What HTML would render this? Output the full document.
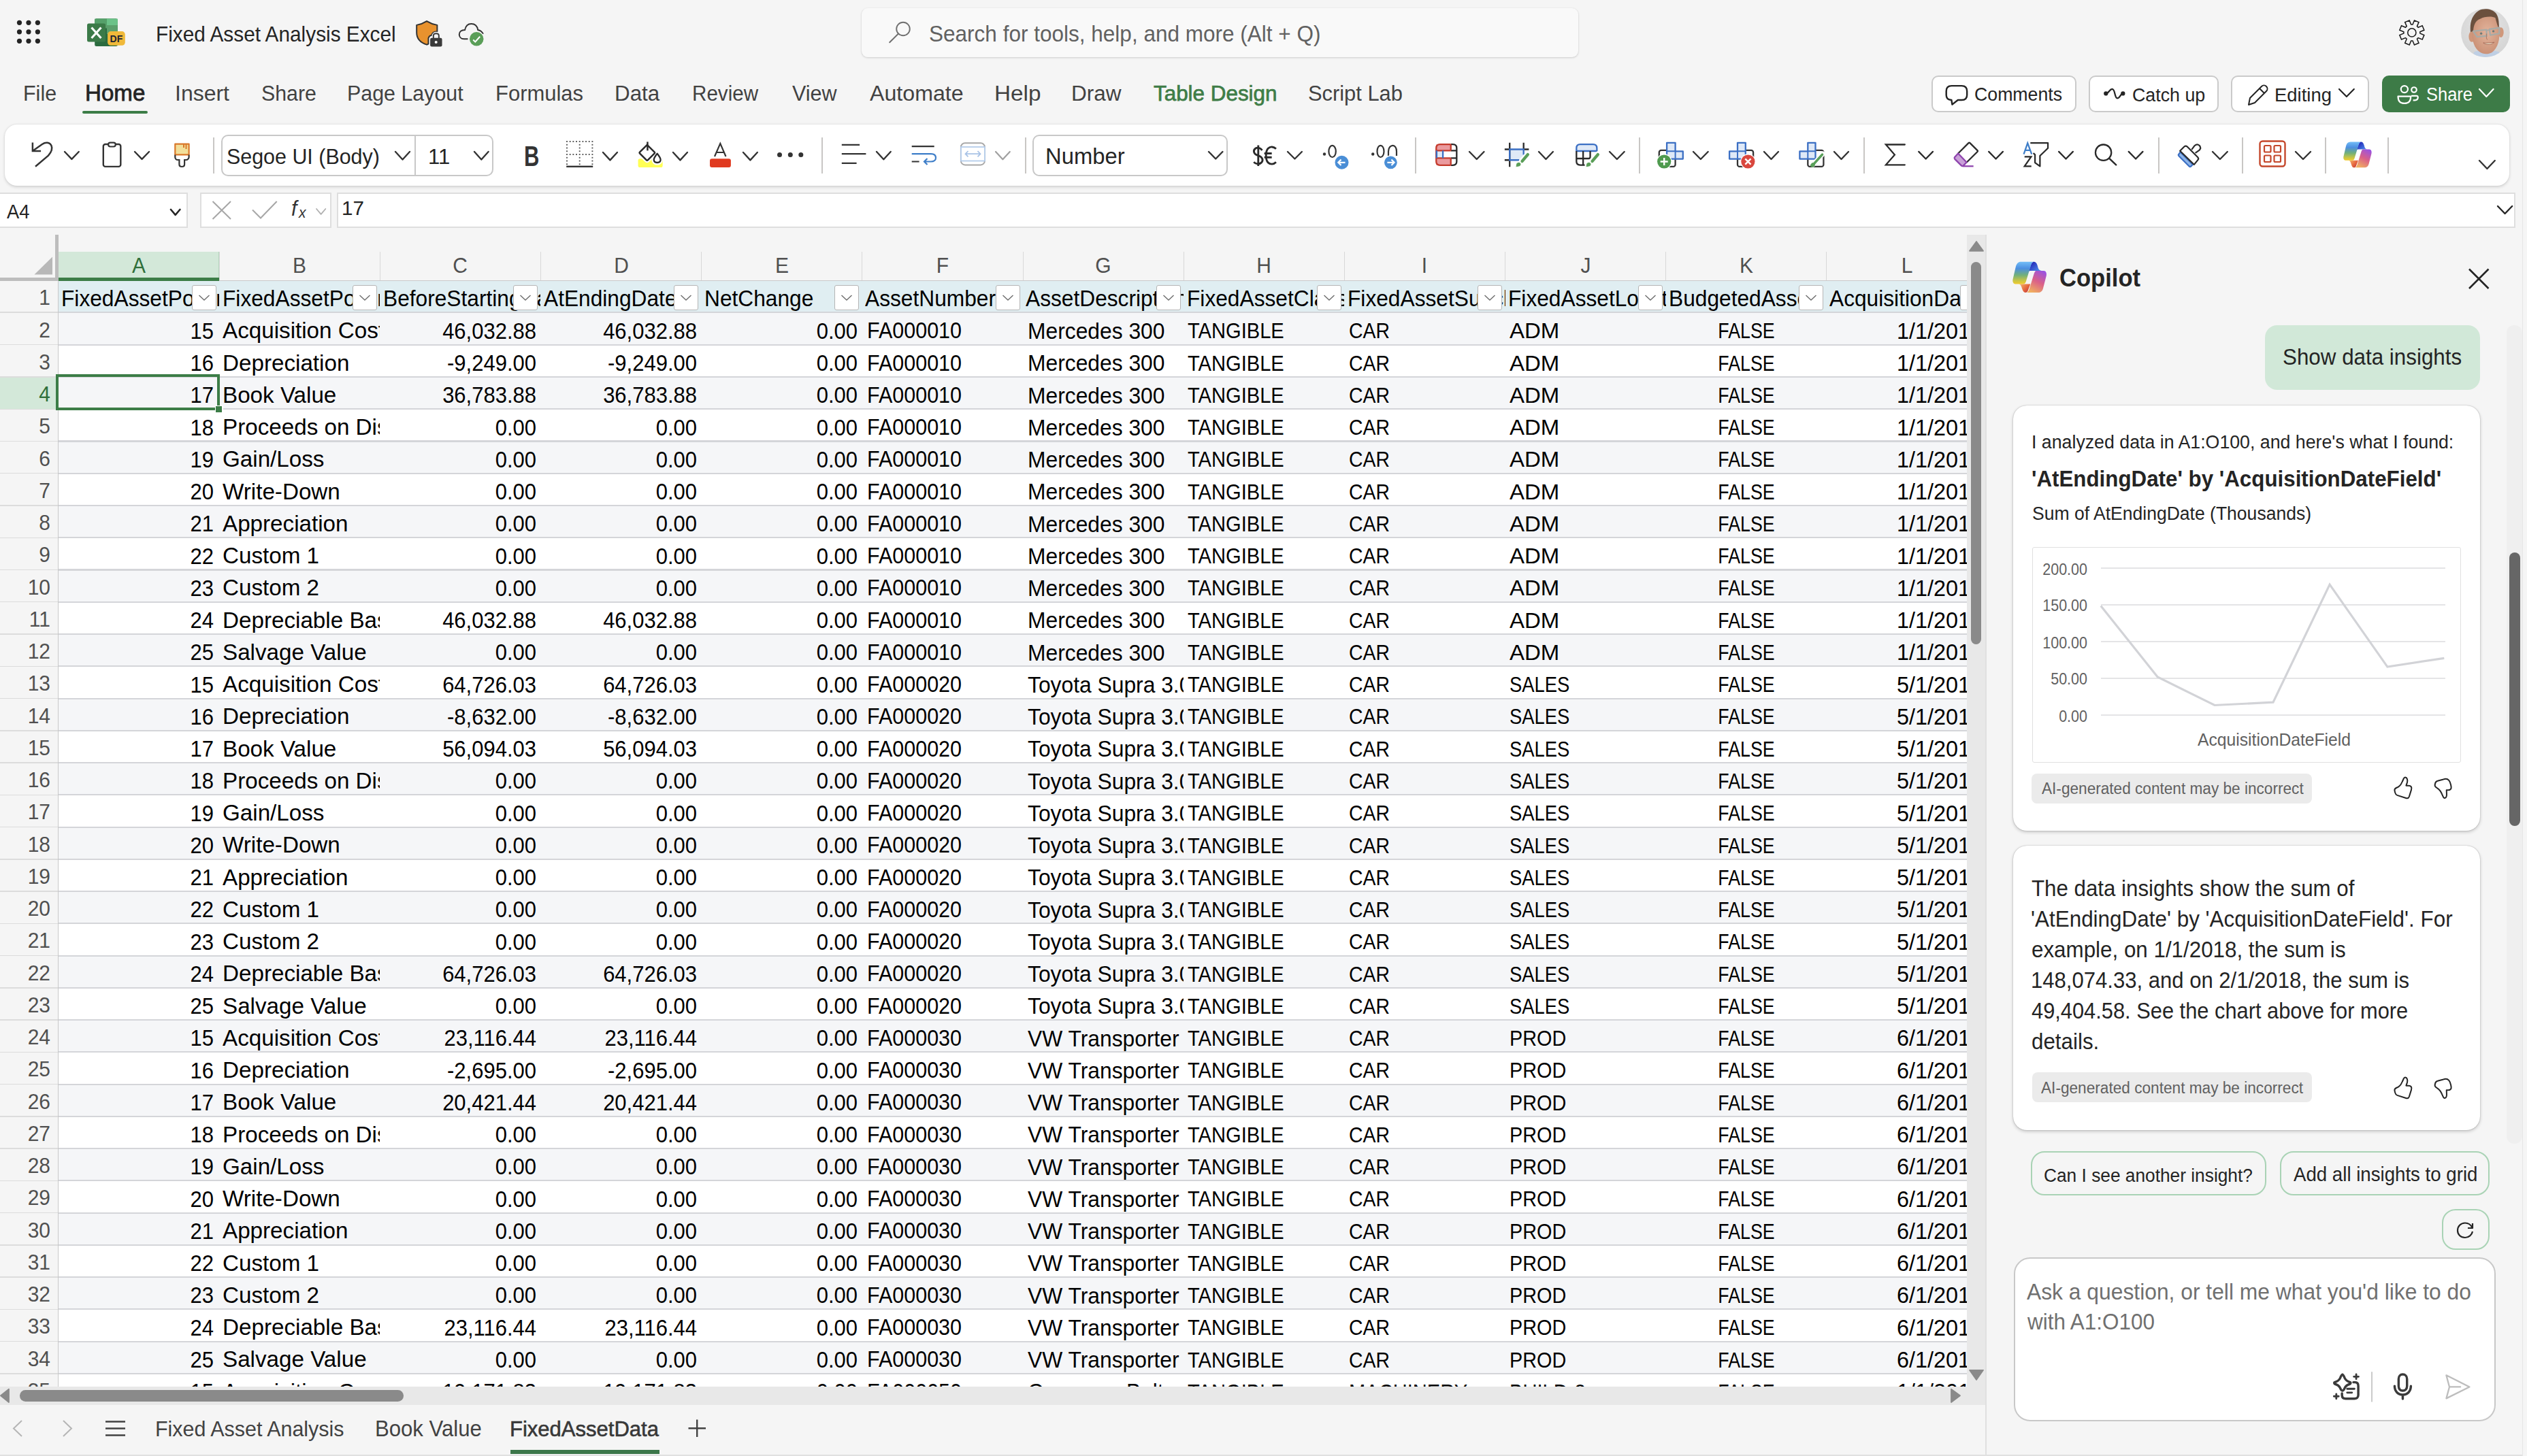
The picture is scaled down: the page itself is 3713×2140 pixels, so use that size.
<!DOCTYPE html><html><head><meta charset="utf-8"><title>Fixed Asset Analysis Excel</title><style>html,body{margin:0;padding:0}body{width:3713px;height:2140px;position:relative;overflow:hidden;background:#F5F5F5;font-family:"Liberation Sans",sans-serif}.a{position:absolute;display:block}.t{position:absolute;white-space:pre}</style></head><body><svg class="a" style="left:0.00px;top:0.00px;" width="80.00" height="90.00" viewBox="0 0 80.00 90.00" fill="none"><circle cx="28.5" cy="33.3" r="3.6" fill="#242424"/><circle cx="28.5" cy="46.8" r="3.6" fill="#242424"/><circle cx="28.5" cy="60.3" r="3.6" fill="#242424"/><circle cx="42" cy="33.3" r="3.6" fill="#242424"/><circle cx="42" cy="46.8" r="3.6" fill="#242424"/><circle cx="42" cy="60.3" r="3.6" fill="#242424"/><circle cx="55.4" cy="33.3" r="3.6" fill="#242424"/><circle cx="55.4" cy="46.8" r="3.6" fill="#242424"/><circle cx="55.4" cy="60.3" r="3.6" fill="#242424"/></svg><svg class="a" style="left:120.00px;top:20.00px;" width="70.00" height="55.00" viewBox="0 0 70.00 55.00" fill="none"><rect x="19.2" y="7.6" width="33.7" height="40.3" rx="2.5" fill="#2B6B3F"/><rect x="19.2" y="7.6" width="33.7" height="14" rx="2.5" fill="#5BA06C"/><rect x="37" y="7.6" width="15.9" height="9.4" fill="#6BC288"/><rect x="37" y="17" width="15.9" height="13" fill="#5BA06C"/><rect x="19.2" y="7.6" width="17.8" height="9.4" fill="#55A06A"/><rect x="8" y="14.5" width="27.1" height="27.1" rx="2.5" fill="#3B7A48"/><path d="M14.5 20.5 L28.5 36 M28.5 20.5 L14.5 36" stroke="#fff" stroke-width="3.2"/><rect x="38.1" y="26.1" width="25.7" height="20.7" rx="4.5" fill="#F0B93A"/><text x="50.9" y="42" font-family="Liberation Sans" font-weight="700" font-size="14" fill="#1E2333" text-anchor="middle">DF</text></svg><div class="t" style="top:32.94px;font-size:31.78px;line-height:35.50px;color:#242424;left:228.80px;transform-origin:0 0;transform:scaleX(0.9378);">Fixed Asset Analysis Excel</div><svg class="a" style="left:590.00px;top:15.00px;" width="140.00" height="70.00" viewBox="0 0 2527 1264" fill="none"><path d="M668 290 C590 340 500 375 400 395 L400 590 C400 760 500 860 670 915 L712 895 L712 740 C725 700 760 670 800 665 C810 600 860 570 945 565 L945 395 C840 375 750 340 668 290 Z" fill="#E8922E" stroke="#333" stroke-width="36" stroke-linejoin="round"/><rect x="745" y="720" width="345" height="260" rx="55" fill="#F5F5F5"/><path d="M845 740 L845 680 C845 590 990 590 990 680 L990 740" stroke="#F5F5F5" stroke-width="80" fill="none"/><path d="M845 740 L845 680 C845 600 990 600 990 680 L990 740" stroke="#3A3A3A" stroke-width="36" fill="none"/><rect x="760" y="735" width="315" height="230" rx="40" fill="#3A3A3A"/><circle cx="915" cy="848" r="36" fill="#fff"/><path d="M1760 765 L1660 765 C1570 765 1530 700 1530 640 C1530 570 1590 525 1680 522 C1700 420 1760 360 1850 360 C1950 360 2010 430 2025 522 C2090 535 2140 575 2165 630" stroke="#333" stroke-width="36" fill="none"/><circle cx="1990" cy="765" r="210" fill="#F5F5F5"/><circle cx="1990" cy="765" r="185" fill="#5A9E58"/><path d="M1900 785 L1955 840 L2080 700" stroke="#fff" stroke-width="36" fill="none"/></svg><div class="a" style="left:1266.00px;top:11.80px;width:1052.80px;height:72.00px;background:#F9F9F9;border-radius:9px;box-shadow:0 1px 3px rgba(0,0,0,0.16),0 0 2px rgba(0,0,0,0.06);"></div><svg class="a" style="left:1300.00px;top:28.00px;" width="45.00" height="42.00" viewBox="0 0 45.00 42.00" fill="none"><circle cx="27" cy="14.5" r="9.8" stroke="#707070" stroke-width="1.9"/><path d="M20 21.5 L7.2 34.2" stroke="#707070" stroke-width="2" stroke-linecap="round"/></svg><div class="t" style="top:31.49px;font-size:33.38px;line-height:37.29px;color:#616161;left:1365.00px;transform-origin:0 0;transform:scaleX(0.9445);">Search for tools, help, and more (Alt + Q)</div><svg class="a" style="left:3515.00px;top:20.00px;" width="60.00" height="60.00" viewBox="0 0 1456 1456" fill="none"><path d="M728.0 387.3 L788.9 241.0 L946.2 306.1 L885.7 452.7 L925.3 492.3 L1071.9 431.8 L1137.0 589.1 L990.7 650.0 L990.7 706.0 L1137.0 766.9 L1071.9 924.2 L925.3 863.7 L885.7 903.3 L946.2 1049.9 L788.9 1115.0 L728.0 968.7 L672.0 968.7 L611.1 1115.0 L453.8 1049.9 L514.3 903.3 L474.7 863.7 L328.1 924.2 L263.0 766.9 L409.3 706.0 L409.3 650.0 L263.0 589.1 L328.1 431.8 L474.7 492.3 L514.3 452.7 L453.8 306.1 L611.1 241.0 L672.0 387.3 Z" stroke="#1E1E1E" stroke-width="38" fill="none" stroke-linejoin="miter"/><circle cx="700" cy="678" r="148" stroke="#1E1E1E" stroke-width="38" fill="none"/></svg><svg class="a" style="left:3610.00px;top:6.00px;" width="83.00" height="83.00" viewBox="0 0 1456 1456" fill="none"><defs><clipPath id="avc"><circle cx="735" cy="742" r="628"/></clipPath><radialGradient id="avbg" cx="0.5" cy="0.4" r="0.6"><stop offset="0" stop-color="#E6E6E6"/><stop offset="1" stop-color="#D2D2D2"/></radialGradient><radialGradient id="skin" cx="0.55" cy="0.45" r="0.6"><stop offset="0" stop-color="#E3B49C"/><stop offset="1" stop-color="#C98F74"/></radialGradient></defs><g clip-path="url(#avc)"><rect width="1456" height="1456" fill="url(#avbg)"/><path d="M440 1240 C520 1180 980 1180 1090 1240 L1150 1456 L380 1456 Z" fill="#BFCFE4"/><ellipse cx="385" cy="840" rx="80" ry="140" fill="#CF977B"/><ellipse cx="1135" cy="730" rx="70" ry="130" fill="#CF977B"/><path d="M380 700 C370 450 470 290 720 280 C990 280 1090 430 1090 640 C1120 900 1060 1130 900 1250 C800 1300 680 1300 580 1230 C450 1130 390 950 380 700 Z" fill="url(#skin)"/><path d="M350 720 C330 480 380 290 560 170 C700 100 900 120 1000 230 C1080 330 1090 480 1080 620 C1040 560 1020 450 990 360 C900 300 700 330 600 380 C480 420 430 540 420 700 Z" fill="#6B503E"/><path d="M420 700 L760 660 L770 820 L520 845 Z M840 650 L1095 610 L1090 760 L860 800 Z" fill="none" stroke="#A9ABA6" stroke-width="42" stroke-linejoin="round"/><path d="M760 680 L840 665" stroke="#A9ABA6" stroke-width="35"/><circle cx="625" cy="760" r="30" fill="#6E7B78"/><circle cx="940" cy="700" r="30" fill="#6E7B78"/><path d="M680 1000 C760 1060 900 1050 965 985 C880 1000 760 1005 680 1000 Z" fill="#F2E7CC" stroke="#9A5A4A" stroke-width="14"/><path d="M760 760 C770 850 740 900 790 915" stroke="#B07A62" stroke-width="18" fill="none"/></g></svg><div class="t" style="top:120.15px;font-size:32.10px;line-height:35.86px;color:#424242;left:34.00px;transform-origin:0 0;transform:scaleX(0.9500);">File</div><div class="t" style="top:118.46px;font-size:33.97px;line-height:37.94px;color:#242424;left:124.50px;transform-origin:0 0;transform:scaleX(0.9748);-webkit-text-stroke:0.8px #242424;">Home</div><div class="t" style="top:120.15px;font-size:32.10px;line-height:35.86px;color:#424242;left:257.00px;transform-origin:0 0;transform:scaleX(0.9970);">Insert</div><div class="t" style="top:120.15px;font-size:32.10px;line-height:35.86px;color:#424242;left:384.00px;transform-origin:0 0;transform:scaleX(0.9444);">Share</div><div class="t" style="top:120.15px;font-size:32.10px;line-height:35.86px;color:#424242;left:510.00px;transform-origin:0 0;transform:scaleX(0.9476);">Page Layout</div><div class="t" style="top:120.15px;font-size:32.10px;line-height:35.86px;color:#424242;left:728.00px;transform-origin:0 0;transform:scaleX(0.9655);">Formulas</div><div class="t" style="top:120.15px;font-size:32.10px;line-height:35.86px;color:#424242;left:903.00px;transform-origin:0 0;transform:scaleX(0.9769);">Data</div><div class="t" style="top:120.15px;font-size:32.10px;line-height:35.86px;color:#424242;left:1017.00px;transform-origin:0 0;transform:scaleX(0.9230);">Review</div><div class="t" style="top:120.15px;font-size:32.10px;line-height:35.86px;color:#424242;left:1164.00px;transform-origin:0 0;transform:scaleX(0.9522);">View</div><div class="t" style="top:120.15px;font-size:32.10px;line-height:35.86px;color:#424242;left:1278.00px;transform-origin:0 0;transform:scaleX(1.0023);">Automate</div><div class="t" style="top:120.15px;font-size:32.10px;line-height:35.86px;color:#424242;left:1461.00px;transform-origin:0 0;transform:scaleX(1.0367);">Help</div><div class="t" style="top:120.15px;font-size:32.10px;line-height:35.86px;color:#424242;left:1574.00px;transform-origin:0 0;transform:scaleX(0.9836);">Draw</div><div class="t" style="top:120.21px;font-size:32.03px;line-height:35.78px;color:#3F7D47;left:1695.00px;transform-origin:0 0;transform:scaleX(0.9804);-webkit-text-stroke:0.75px #3F7D47;">Table Design</div><div class="t" style="top:120.15px;font-size:32.10px;line-height:35.86px;color:#424242;left:1922.00px;transform-origin:0 0;transform:scaleX(0.9615);">Script Lab</div><div class="a" style="left:121.40px;top:162.50px;width:95.20px;height:4.20px;background:#3C7D47;border-radius:2px;"></div><div class="a" style="left:2837.50px;top:110.70px;width:213.00px;height:54.00px;background:#fff;background:#fff;border:2.2px solid #CACACA;border-radius:10px;box-sizing:border-box;"></div><svg class="a" style="left:2830.00px;top:100.00px;" width="440.00" height="75.00" viewBox="0 0 2527 431" fill="none"><path d="M215 150 L300 150 Q345 150 345 195 L345 228 Q345 270 300 270 L268 270 L220 308 L214 270 Q170 268 170 228 L170 195 Q170 150 215 150 Z" stroke="#242424" stroke-width="14" fill="none" stroke-linejoin="round"/></svg><div class="t" style="top:123.44px;font-size:28.25px;line-height:31.55px;color:#242424;left:2901.00px;transform-origin:0 0;transform:scaleX(0.9450);">Comments</div><div class="a" style="left:3069.20px;top:110.70px;width:190.80px;height:54.00px;background:#fff;background:#fff;border:2.2px solid #CACACA;border-radius:10px;box-sizing:border-box;"></div><svg class="a" style="left:2830.00px;top:100.00px;" width="440.00" height="75.00" viewBox="0 0 2527 431" fill="none"><path d="M1518 215 C1542 215 1550 176 1572 178 C1598 181 1590 255 1614 255 C1638 255 1640 215 1662 215" stroke="#242424" stroke-width="13" fill="none" stroke-linecap="round"/><circle cx="1518" cy="215" r="18" fill="#242424"/><circle cx="1662" cy="215" r="18" fill="#242424"/></svg><div class="t" style="top:123.53px;font-size:28.14px;line-height:31.43px;color:#242424;left:3133.00px;transform-origin:0 0;transform:scaleX(0.9527);">Catch up</div><div class="a" style="left:3278.00px;top:110.70px;width:202.70px;height:54.00px;background:#fff;background:#fff;border:2.2px solid #CACACA;border-radius:10px;box-sizing:border-box;"></div><svg class="a" style="left:3298.00px;top:120.00px;" width="36.00" height="38.00" viewBox="0 0 36.00 38.00" fill="none"><path d="M6 34 L8 24 L25 7 C27 5 30 5 32 7 C34 9 34 12 32 14 L15 31 Z M22 10 L29 17" stroke="#242424" stroke-width="2" stroke-linejoin="round"/></svg><div class="t" style="top:123.53px;font-size:28.14px;line-height:31.43px;color:#242424;left:3342.00px;transform-origin:0 0;transform:scaleX(0.9759);">Editing</div><svg class="a" style="left:3433.60px;top:128.00px;" width="27.80" height="17.00" viewBox="0 0 27.80 17.00" fill="none"><path d="M3 3 L13.90 14.00 L24.80 3" stroke="#242424" stroke-width="2.2" stroke-linecap="round" stroke-linejoin="round"/></svg><div class="a" style="left:3500.00px;top:110.70px;width:187.50px;height:54.00px;background:#3D7B47;border-radius:10px;"></div><svg class="a" style="left:3270.00px;top:100.00px;" width="430.00" height="75.00" viewBox="0 0 2527 441" fill="none"><circle cx="1545" cy="183" r="30" stroke="#fff" stroke-width="13" fill="none"/><path d="M1490 245 L1600 245 Q1600 305 1545 305 Q1490 305 1490 245 Z" stroke="#fff" stroke-width="13" fill="none" stroke-linejoin="round"/><circle cx="1628" cy="188" r="22" stroke="#fff" stroke-width="13" fill="none"/><path d="M1605 240 L1650 240 Q1662 240 1662 255 Q1662 278 1635 278 L1620 278" stroke="#fff" stroke-width="13" fill="none" stroke-linejoin="round"/></svg><div class="t" style="top:124.31px;font-size:27.29px;line-height:30.48px;color:#fff;left:3565.40px;transform-origin:0 0;transform:scaleX(0.9346);">Share</div><svg class="a" style="left:3640.00px;top:128.00px;" width="26.60" height="17.00" viewBox="0 0 26.60 17.00" fill="none"><path d="M3 3 L13.30 14.00 L23.60 3" stroke="#fff" stroke-width="2.2" stroke-linecap="round" stroke-linejoin="round"/></svg><div class="a" style="left:7.20px;top:182.80px;width:3680.30px;height:90.00px;background:#fff;border-radius:18px;box-shadow:0 1.5px 4px rgba(0,0,0,0.15),0 0 2px rgba(0,0,0,0.08);"></div><svg class="a" style="left:40.00px;top:200.00px;" width="45.00" height="52.00" viewBox="0 0 45.00 52.00" fill="none"><path d="M7.9 9.6 L7.9 22 L20.1 22" stroke="#333" stroke-width="2.5" stroke-linecap="butt" fill="none"/><path d="M8.5 21.5 L22 12 C27 8.5 33 9 35.5 14 C37.5 18.5 35 24 31 28.6 L12 44.8" stroke="#333" stroke-width="2.5" fill="none"/></svg><svg class="a" style="left:91.80px;top:220.00px;" width="26.80" height="16.90" viewBox="0 0 26.80 16.90" fill="none"><path d="M3 3 L13.40 13.90 L23.80 3" stroke="#333333" stroke-width="2.4" stroke-linecap="round" stroke-linejoin="round"/></svg><svg class="a" style="left:145.00px;top:202.00px;" width="40.00" height="50.00" viewBox="0 0 40.00 50.00" fill="none"><rect x="6.8" y="10" width="25.5" height="32.9" rx="3" stroke="#333" stroke-width="2.4"/><rect x="14.1" y="7.6" width="10.7" height="5.9" rx="2.9" fill="#fff" stroke="#333" stroke-width="2.2"/></svg><svg class="a" style="left:194.80px;top:220.00px;" width="27.10" height="16.90" viewBox="0 0 27.10 16.90" fill="none"><path d="M3 3 L13.55 13.90 L24.10 3" stroke="#333333" stroke-width="2.4" stroke-linecap="round" stroke-linejoin="round"/></svg><svg class="a" style="left:250.00px;top:202.00px;" width="35.00" height="50.00" viewBox="0 0 35.00 50.00" fill="none"><path d="M7.3 9.6 L27.6 9.6 L27.6 25.4 L7.3 25.4 Z" fill="#F2DF9A" stroke="#D9782A" stroke-width="2.2" stroke-linejoin="round"/><path d="M20 10 L20 15 M23.5 10 L23.5 17" stroke="#D9782A" stroke-width="2"/><path d="M7.3 25.4 L7.3 29 C7.3 31 9 33 11 33 L13.4 33 L13.4 39.5 C13.4 42 15 43 17.2 43 C19.5 43 21.1 42 21.1 39.5 L21.1 33 L23.6 33 C25.6 33 27.6 31 27.6 29 L27.6 25.4" stroke="#333" stroke-width="2.2" fill="none"/></svg><div class="a" style="left:312.50px;top:201.50px;width:2.00px;height:53.10px;background:#C8C6C4;"></div><div class="a" style="left:325.00px;top:198.00px;width:400.30px;height:60.70px;background:#fff;border:2px solid #C8C8C8;border-radius:10px;box-sizing:border-box;"></div><div class="a" style="left:609.00px;top:198.00px;width:2.00px;height:60.70px;background:#C8C8C8;"></div><div class="t" style="top:212.85px;font-size:31.99px;line-height:35.74px;color:#242424;left:333.00px;transform-origin:0 0;transform:scaleX(0.9510);">Segoe UI (Body)</div><svg class="a" style="left:578.00px;top:219.50px;" width="27.00" height="17.50" viewBox="0 0 27.00 17.50" fill="none"><path d="M3 3 L13.50 14.50 L24.00 3" stroke="#333333" stroke-width="2.4" stroke-linecap="round" stroke-linejoin="round"/></svg><div class="t" style="top:212.75px;font-size:32.10px;line-height:35.86px;color:#242424;left:629.00px;transform-origin:0 0;transform:scaleX(0.9680);">11</div><svg class="a" style="left:694.00px;top:219.50px;" width="26.60" height="17.50" viewBox="0 0 26.60 17.50" fill="none"><path d="M3 3 L13.30 14.50 L23.60 3" stroke="#333333" stroke-width="2.4" stroke-linecap="round" stroke-linejoin="round"/></svg><div class="t" style="top:204.82px;font-size:43.40px;line-height:48.48px;color:#333;font-weight:700;left:769.50px;transform-origin:0 0;transform:scaleX(0.7143);">B</div><svg class="a" style="left:830.70px;top:206.40px;" width="42.00" height="42.00" viewBox="0 0 42.00 42.00" fill="none"><g transform="translate(2 2)"><rect x="-0.95" y="-0.95" width="1.9" height="1.9" fill="#555"/><rect x="3.72" y="-0.95" width="1.9" height="1.9" fill="#555"/><rect x="8.40" y="-0.95" width="1.9" height="1.9" fill="#555"/><rect x="13.07" y="-0.95" width="1.9" height="1.9" fill="#555"/><rect x="17.75" y="-0.95" width="1.9" height="1.9" fill="#555"/><rect x="22.43" y="-0.95" width="1.9" height="1.9" fill="#555"/><rect x="27.10" y="-0.95" width="1.9" height="1.9" fill="#555"/><rect x="31.78" y="-0.95" width="1.9" height="1.9" fill="#555"/><rect x="36.45" y="-0.95" width="1.9" height="1.9" fill="#555"/><rect x="-0.95" y="18.05" width="1.9" height="1.9" fill="#555"/><rect x="3.72" y="18.05" width="1.9" height="1.9" fill="#555"/><rect x="8.40" y="18.05" width="1.9" height="1.9" fill="#555"/><rect x="13.07" y="18.05" width="1.9" height="1.9" fill="#555"/><rect x="17.75" y="18.05" width="1.9" height="1.9" fill="#555"/><rect x="22.43" y="18.05" width="1.9" height="1.9" fill="#555"/><rect x="27.10" y="18.05" width="1.9" height="1.9" fill="#555"/><rect x="31.78" y="18.05" width="1.9" height="1.9" fill="#555"/><rect x="36.45" y="18.05" width="1.9" height="1.9" fill="#555"/><rect x="-0.95" y="3.80" width="1.9" height="1.9" fill="#555"/><rect x="-0.95" y="8.55" width="1.9" height="1.9" fill="#555"/><rect x="-0.95" y="13.30" width="1.9" height="1.9" fill="#555"/><rect x="-0.95" y="22.80" width="1.9" height="1.9" fill="#555"/><rect x="-0.95" y="27.55" width="1.9" height="1.9" fill="#555"/><rect x="-0.95" y="32.30" width="1.9" height="1.9" fill="#555"/><rect x="17.75" y="3.80" width="1.9" height="1.9" fill="#555"/><rect x="17.75" y="8.55" width="1.9" height="1.9" fill="#555"/><rect x="17.75" y="13.30" width="1.9" height="1.9" fill="#555"/><rect x="17.75" y="22.80" width="1.9" height="1.9" fill="#555"/><rect x="17.75" y="27.55" width="1.9" height="1.9" fill="#555"/><rect x="17.75" y="32.30" width="1.9" height="1.9" fill="#555"/><rect x="36.45" y="3.80" width="1.9" height="1.9" fill="#555"/><rect x="36.45" y="8.55" width="1.9" height="1.9" fill="#555"/><rect x="36.45" y="13.30" width="1.9" height="1.9" fill="#555"/><rect x="36.45" y="22.80" width="1.9" height="1.9" fill="#555"/><rect x="36.45" y="27.55" width="1.9" height="1.9" fill="#555"/><rect x="36.45" y="32.30" width="1.9" height="1.9" fill="#555"/><rect x="-0.8" y="35.6" width="39" height="2.4" fill="#333"/></g></svg><svg class="a" style="left:882.90px;top:220.80px;" width="26.90" height="17.40" viewBox="0 0 26.90 17.40" fill="none"><path d="M3 3 L13.45 14.40 L23.90 3" stroke="#333333" stroke-width="2.4" stroke-linecap="round" stroke-linejoin="round"/></svg><svg class="a" style="left:740.00px;top:190.00px;" width="480.00" height="75.00" viewBox="0 0 2527 395" fill="none"><rect x="1040" y="228" width="190" height="67" rx="15" fill="#FFFF55"/><path d="M1110 120 L1166 176 Q1172 182 1166 188 L1116 238 Q1110 244 1104 238 L1054 188 Q1048 182 1054 176 Z" fill="#fff" stroke="#fff" stroke-width="34" stroke-linejoin="round"/><path d="M1188 185 C1173 205 1160 222 1160 238 C1160 252 1173 262 1188 262 C1203 262 1216 252 1216 238 C1216 222 1203 205 1188 185 Z" fill="#fff" stroke="#fff" stroke-width="30" stroke-linejoin="round"/><path d="M1110 120 L1166 176 Q1172 182 1166 188 L1116 238 Q1110 244 1104 238 L1054 188 Q1048 182 1054 176 Z" fill="#fff" stroke="#2A2A2A" stroke-width="13" stroke-linejoin="round"/><path d="M1113 97 L1113 165" stroke="#2A2A2A" stroke-width="13"/><path d="M1188 188 C1173 207 1162 222 1162 236 C1162 250 1173 258 1188 258 C1203 258 1214 250 1214 236 C1214 222 1203 207 1188 188 Z" fill="#fff" stroke="#2A2A2A" stroke-width="12" stroke-linejoin="round"/></svg><svg class="a" style="left:985.80px;top:220.80px;" width="26.90" height="17.40" viewBox="0 0 26.90 17.40" fill="none"><path d="M3 3 L13.45 14.40 L23.90 3" stroke="#333333" stroke-width="2.4" stroke-linecap="round" stroke-linejoin="round"/></svg><svg class="a" style="left:1040.00px;top:205.00px;" width="38.00" height="45.00" viewBox="0 0 38.00 45.00" fill="none"><path d="M10 25 L18.3 5.9 L26.5 25 M12.8 19 L23.8 19" stroke="#333" stroke-width="2.2" fill="none"/><rect x="3" y="28.3" width="30.9" height="12.7" rx="3" fill="#E03A20"/></svg><svg class="a" style="left:1088.80px;top:220.80px;" width="26.80" height="17.40" viewBox="0 0 26.80 17.40" fill="none"><path d="M3 3 L13.40 14.40 L23.80 3" stroke="#333333" stroke-width="2.4" stroke-linecap="round" stroke-linejoin="round"/></svg><svg class="a" style="left:1138.00px;top:220.00px;" width="47.00" height="15.00" viewBox="0 0 47.00 15.00" fill="none"><circle cx="7.5" cy="7.4" r="3.5" fill="#333"/><circle cx="23.3" cy="7.4" r="3.5" fill="#333"/><circle cx="38.8" cy="7.4" r="3.5" fill="#333"/></svg><div class="a" style="left:1206.80px;top:201.50px;width:2.00px;height:53.10px;background:#C8C6C4;"></div><svg class="a" style="left:1232.00px;top:205.00px;" width="46.00" height="43.00" viewBox="0 0 46.00 43.00" fill="none"><path d="M4.8 7.8 L31.1 7.8 M4.8 21.2 L40.4 21.2 M4.8 34.9 L26.6 34.9" stroke="#333" stroke-width="2.2"/></svg><svg class="a" style="left:1285.30px;top:219.60px;" width="26.70" height="17.30" viewBox="0 0 26.70 17.30" fill="none"><path d="M3 3 L13.35 14.30 L23.70 3" stroke="#333333" stroke-width="2.4" stroke-linecap="round" stroke-linejoin="round"/></svg><svg class="a" style="left:1335.00px;top:205.00px;" width="45.00" height="45.00" viewBox="0 0 45.00 45.00" fill="none"><path d="M4.7 10.1 L37.7 10.1 M4.7 32.5 L15.6 32.5" stroke="#333" stroke-width="2.2"/><path d="M4.7 21.2 L33 21.2 C37.5 21.2 40 23.5 40 27 C40 30 37.5 32.5 33 32.5 L23.5 32.5 M27.5 28 L23 32.5 L27.5 37" stroke="#3E7EC8" stroke-width="2.2" fill="none"/></svg><svg class="a" style="left:1408.00px;top:206.00px;" width="44.00" height="41.00" viewBox="0 0 44.00 41.00" fill="none"><rect x="3.9" y="4.2" width="35" height="32.2" rx="6" stroke="#A8A8A8" stroke-width="2"/><rect x="4" y="10" width="35" height="20.5" fill="#fff" stroke="#B4CCEA" stroke-width="1.8"/><path d="M10.5 20.2 L32.5 20.2 M14.5 16 L10.5 20.2 L14.5 24.4 M28.5 16 L32.5 20.2 L28.5 24.4" stroke="#A9C3E6" stroke-width="1.8" fill="none"/></svg><svg class="a" style="left:1460.00px;top:219.60px;" width="26.80" height="17.30" viewBox="0 0 26.80 17.30" fill="none"><path d="M3 3 L13.40 14.30 L23.80 3" stroke="#A0A0A0" stroke-width="2.2" stroke-linecap="round" stroke-linejoin="round"/></svg><div class="a" style="left:1505.90px;top:201.50px;width:2.00px;height:53.10px;background:#C8C6C4;"></div><div class="a" style="left:1517.40px;top:197.90px;width:287.00px;height:61.40px;background:#fff;border:2px solid #C8C8C8;border-radius:10px;box-sizing:border-box;"></div><div class="t" style="top:210.70px;font-size:33.92px;line-height:37.89px;color:#242424;left:1536.00px;transform-origin:0 0;transform:scaleX(0.9672);">Number</div><svg class="a" style="left:1773.20px;top:219.60px;" width="26.40" height="16.50" viewBox="0 0 26.40 16.50" fill="none"><path d="M3 3 L13.20 13.50 L23.40 3" stroke="#333333" stroke-width="2.4" stroke-linecap="round" stroke-linejoin="round"/></svg><svg class="a" style="left:1760.00px;top:190.00px;" width="660.00" height="75.00" viewBox="0 0 2527 287" fill="none"><path d="M362 118 C352 104 335 100 324 108 C310 118 312 140 340 148 C364 156 370 174 358 187 C346 199 326 197 315 184 M340 90 L340 207" stroke="#2A2A2A" stroke-width="11" fill="none"/><path d="M440 110 C428 97 408 95 395 108 C380 124 380 172 395 187 C408 200 428 198 440 185 M374 136 L416 136 M374 158 L416 158" stroke="#2A2A2A" stroke-width="11" fill="none"/></svg><svg class="a" style="left:1888.90px;top:220.00px;" width="26.90" height="16.50" viewBox="0 0 26.90 16.50" fill="none"><path d="M3 3 L13.45 13.50 L23.90 3" stroke="#333333" stroke-width="2.4" stroke-linecap="round" stroke-linejoin="round"/></svg><svg class="a" style="left:1940.00px;top:205.00px;" width="50.00" height="47.00" viewBox="0 0 50.00 47.00" fill="none"><circle cx="6" cy="21.5" r="2.2" fill="#333"/><ellipse cx="17.6" cy="17.4" rx="5.2" ry="8.6" stroke="#333" stroke-width="2.2"/><circle cx="31.5" cy="33.8" r="10" fill="#4A8ED6"/><path d="M36.5 33.8 L26.5 33.8 M30.5 29.5 L26.3 33.8 L30.5 38" stroke="#fff" stroke-width="2.2" fill="none"/></svg><svg class="a" style="left:2010.00px;top:205.00px;" width="50.00" height="47.00" viewBox="0 0 50.00 47.00" fill="none"><circle cx="7.2" cy="21.5" r="2.2" fill="#333"/><ellipse cx="18.5" cy="17.4" rx="5" ry="8.6" stroke="#333" stroke-width="2.2"/><path d="M30 26 L30 17.4 C30 12 33.5 8.8 36.5 8.8 C39.5 8.8 42 12 42 17.4 L42 24" stroke="#333" stroke-width="2.2" fill="none"/><circle cx="33.4" cy="33.8" r="10" fill="#4A8ED6" stroke="#fff" stroke-width="1.2"/><path d="M28.4 33.8 L38.4 33.8 M34.4 29.5 L38.6 33.8 L34.4 38" stroke="#fff" stroke-width="2.2" fill="none"/></svg><div class="a" style="left:2079.00px;top:201.50px;width:2.00px;height:53.10px;background:#C8C6C4;"></div><svg class="a" style="left:2090.00px;top:195.00px;" width="310.00" height="65.00" viewBox="0 0 2527 530" fill="none"><path d="M165 140 L340 140 L340 215 L165 215 Z M165 305 L340 305 L340 390 L165 390 Z" fill="#EA9A9E"/><path d="M170 215 L245 215 L245 305 L170 305 Z" fill="#DDE8F6"/><path d="M340 140 L365 140 Q410 140 410 185 L410 345 Q410 390 365 390 L340 390 M340 215 L410 215 M340 305 L410 305" stroke="#2A2A2A" stroke-width="19" fill="none"/><path d="M340 140 L210 140 Q165 140 165 185 L165 345 Q165 390 210 390 L340 390 M165 215 L340 215 M165 305 L340 305 M340 140 L340 215 M340 305 L340 390" stroke="#C43A2C" stroke-width="19" fill="none"/><path d="M245 215 L245 305 M170 215 L170 305" stroke="#3B6FC4" stroke-width="19" fill="none"/><path d="M1045 200 L1212 200 L1212 270 L1150 328 L1045 328 Z" fill="#DFE9F7"/><path d="M1045 120 L1045 410 M1212 120 L1212 200 M985 200 L1045 200 M1212 200 L1275 200 M985 328 L1045 328" stroke="#2A2A2A" stroke-width="19" fill="none"/><path d="M1160 328 L1045 328 L1045 200 L1212 200 L1212 265" stroke="#3B6FC4" stroke-width="19" fill="none"/><path d="M1268 258 L1190 350" stroke="#fff" stroke-width="75" stroke-linecap="round"/><path d="M1262 262 L1195 342" stroke="#5A9E58" stroke-width="36" stroke-linecap="round"/><path d="M1125 372 C1140 345 1180 350 1180 380 C1178 405 1150 412 1115 410 C1125 400 1118 388 1125 372 Z" fill="#5A9E58" stroke="#fff" stroke-width="6"/><path d="M1845 220 L1845 185 Q1845 140 1890 140 L2045 140 Q2090 140 2090 185 L2090 220 Z" fill="#DFE9F7" stroke="#3B6FC4" stroke-width="19" stroke-linejoin="round"/><path d="M1845 220 L1845 345 Q1845 388 1890 388 L1945 388 M1925 220 L1925 388 M1845 310 L1990 310 Q2010 310 2010 290 L2010 220" stroke="#2A2A2A" stroke-width="19" fill="none"/><path d="M2108 258 L2030 350" stroke="#fff" stroke-width="75" stroke-linecap="round"/><path d="M2102 262 L2035 342" stroke="#5A9E58" stroke-width="36" stroke-linecap="round"/><path d="M1965 372 C1980 345 2020 350 2020 380 C2018 405 1990 412 1955 410 C1965 400 1958 388 1965 372 Z" fill="#5A9E58" stroke="#fff" stroke-width="6"/></svg><svg class="a" style="left:2155.70px;top:220.00px;" width="27.50" height="17.00" viewBox="0 0 27.50 17.00" fill="none"><path d="M3 3 L13.75 14.00 L24.50 3" stroke="#333333" stroke-width="2.4" stroke-linecap="round" stroke-linejoin="round"/></svg><svg class="a" style="left:2258.40px;top:220.00px;" width="26.90" height="17.00" viewBox="0 0 26.90 17.00" fill="none"><path d="M3 3 L13.45 14.00 L23.90 3" stroke="#333333" stroke-width="2.4" stroke-linecap="round" stroke-linejoin="round"/></svg><svg class="a" style="left:2361.60px;top:220.00px;" width="27.70" height="17.00" viewBox="0 0 27.70 17.00" fill="none"><path d="M3 3 L13.85 14.00 L24.70 3" stroke="#333333" stroke-width="2.4" stroke-linecap="round" stroke-linejoin="round"/></svg><div class="a" style="left:2408.00px;top:201.50px;width:2.00px;height:53.10px;background:#C8C6C4;"></div><svg class="a" style="left:2420.00px;top:195.00px;" width="310.00" height="65.00" viewBox="0 0 310.00 65.00" fill="none"><rect x="17.8" y="25.9" width="23.8" height="24" rx="3" stroke="#333" stroke-width="2.3" fill="none"/><path d="M29.1 14.8 L41.6 14.8 L41.6 27.3 L52.8 27.3 L52.8 38.6 L29.1 38.6 Z" stroke="#3B6FC4" stroke-width="2.3" fill="#DFE9F7" stroke-linejoin="round"/><path d="M29.1 27.3 L41.6 27.3 L41.6 38.6" stroke="#3B6FC4" stroke-width="2" fill="none"/><circle cx="25.2" cy="42.5" r="11.2" fill="#fff"/><circle cx="25.2" cy="42.5" r="10.1" fill="#4F9A4F"/><path d="M25.2 37 L25.2 48 M19.7 42.5 L30.7 42.5" stroke="#fff" stroke-width="2.4"/><rect x="133" y="25.9" width="23.1" height="24" rx="3" stroke="#333" stroke-width="2.3" fill="none"/><path d="M133 14.8 L144.8 14.8 L144.8 38.6 L121.1 38.6 L121.1 27.3 L133 27.3 Z" stroke="#3B6FC4" stroke-width="2.3" fill="#DFE9F7" stroke-linejoin="round"/><path d="M133 27.3 L133 38.6 M133 27.3 L144.8 27.3" stroke="#3B6FC4" stroke-width="2" fill="none"/><circle cx="148.4" cy="42.5" r="11.2" fill="#fff"/><circle cx="148.4" cy="42.5" r="10.1" fill="#D9473E"/><path d="M144.3 38.4 L152.5 46.6 M152.5 38.4 L144.3 46.6" stroke="#fff" stroke-width="2.4"/><rect x="236.3" y="25.9" width="23.1" height="24" rx="3" stroke="#333" stroke-width="2.3" fill="none"/><path d="M236.3 14.8 L247.5 14.8 L247.5 38.6 L224.4 38.6 L224.4 27.3 L236.3 27.3 Z" stroke="#3B6FC4" stroke-width="2.3" fill="#DFE9F7" stroke-linejoin="round"/><path d="M236.3 27.3 L236.3 38.6 M236.3 27.3 L247.5 27.3" stroke="#3B6FC4" stroke-width="2" fill="none"/><path d="M258.5 31 L244 47" stroke="#fff" stroke-width="7" stroke-linecap="round"/><path d="M257.6 32 L246 45" stroke="#5AA05A" stroke-width="3.4" stroke-linecap="round"/><ellipse cx="243.5" cy="47.5" rx="3.6" ry="3" fill="#5AA05A" transform="rotate(-45 243.5 47.5)"/></svg><svg class="a" style="left:2485.30px;top:220.00px;" width="27.70" height="17.00" viewBox="0 0 27.70 17.00" fill="none"><path d="M3 3 L13.85 14.00 L24.70 3" stroke="#333333" stroke-width="2.4" stroke-linecap="round" stroke-linejoin="round"/></svg><svg class="a" style="left:2589.00px;top:220.00px;" width="27.00" height="17.00" viewBox="0 0 27.00 17.00" fill="none"><path d="M3 3 L13.50 14.00 L24.00 3" stroke="#333333" stroke-width="2.4" stroke-linecap="round" stroke-linejoin="round"/></svg><svg class="a" style="left:2692.00px;top:220.00px;" width="27.00" height="17.00" viewBox="0 0 27.00 17.00" fill="none"><path d="M3 3 L13.50 14.00 L24.00 3" stroke="#333333" stroke-width="2.4" stroke-linecap="round" stroke-linejoin="round"/></svg><div class="a" style="left:2737.80px;top:201.50px;width:2.00px;height:53.10px;background:#C8C6C4;"></div><svg class="a" style="left:2750.00px;top:195.00px;" width="410.00" height="65.00" viewBox="0 0 2527 401" fill="none"><path d="M300 108 L128 108 L208 200 L128 292 L300 292" stroke="#2A2A2A" stroke-width="14" fill="none" stroke-linecap="round" stroke-linejoin="miter"/><path d="M783 188 L878 93 Q884 87 890 93 L958 161 Q964 167 958 173 L860 270" stroke="#2A2A2A" stroke-width="14" fill="none" stroke-linejoin="round"/><path d="M783 188 L860 268 L830 300 Q822 306 814 300 L752 238 Q745 230 752 222 Z" fill="#C9A0D8" stroke="#8E44AD" stroke-width="14" stroke-linejoin="round"/><path d="M825 304 L922 304" stroke="#8E44AD" stroke-width="14"/><path d="M1378 195 L1413 95 L1450 195 M1390 160 L1437 160" stroke="#3E7EC8" stroke-width="14" fill="none"/><path d="M1385 218 L1445 218 L1385 305 L1447 305" stroke="#2A2A2A" stroke-width="14" fill="none"/><path d="M1438 93 L1597 93 L1597 140 L1525 210 L1525 305 L1480 272 L1480 200 L1465 185" stroke="#2A2A2A" stroke-width="14" fill="none" stroke-linejoin="round"/><circle cx="2100" cy="180" r="72" stroke="#2A2A2A" stroke-width="14" fill="none"/><path d="M2152 232 L2215 292" stroke="#2A2A2A" stroke-width="15" stroke-linecap="round"/><path d="M426 172 L490 238 L554 172" stroke="#2A2A2A" stroke-width="14" fill="none" stroke-linecap="round" stroke-linejoin="round"/><path d="M1061 172 L1125 238 L1189 172" stroke="#2A2A2A" stroke-width="14" fill="none" stroke-linecap="round" stroke-linejoin="round"/><path d="M1696 172 L1760 238 L1824 172" stroke="#2A2A2A" stroke-width="14" fill="none" stroke-linecap="round" stroke-linejoin="round"/><path d="M2329 172 L2393 238 L2457 172" stroke="#2A2A2A" stroke-width="14" fill="none" stroke-linecap="round" stroke-linejoin="round"/></svg><div class="a" style="left:3170.60px;top:201.50px;width:2.00px;height:53.10px;background:#C8C6C4;"></div><svg class="a" style="left:3170.00px;top:190.00px;" width="250.00" height="75.00" viewBox="0 0 2527 758" fill="none"><path d="M340 338 L525 523 L498 550 Q485 562 472 550 L318 396 Q305 383 318 370 Z" fill="#8DB4E8" stroke="#3B6FC4" stroke-width="22" stroke-linejoin="round"/><path d="M335 320 L398 258 Q420 238 442 258 L598 414 Q620 436 598 458 L545 525 Z" fill="#fff" stroke="#2A2A2A" stroke-width="22" stroke-linejoin="round"/><path d="M508 302 L548 248 Q585 208 625 243 Q655 280 620 312 L562 352" stroke="#2A2A2A" stroke-width="22" fill="none" stroke-linejoin="round"/></svg><svg class="a" style="left:3247.60px;top:220.00px;" width="27.80" height="17.00" viewBox="0 0 27.80 17.00" fill="none"><path d="M3 3 L13.90 14.00 L24.80 3" stroke="#333333" stroke-width="2.4" stroke-linecap="round" stroke-linejoin="round"/></svg><div class="a" style="left:3293.70px;top:201.50px;width:2.00px;height:53.10px;background:#C8C6C4;"></div><svg class="a" style="left:3316.00px;top:203.00px;" width="46.00" height="47.00" viewBox="0 0 46.00 47.00" fill="none"><rect x="4.5" y="4.5" width="37" height="37" rx="4" stroke="#C4472B" stroke-width="2.4"/><rect x="11" y="11" width="9.5" height="9.5" rx="1.5" stroke="#C4472B" stroke-width="2.2"/><rect x="25.5" y="11" width="9.5" height="9.5" rx="1.5" stroke="#C4472B" stroke-width="2.2"/><rect x="11" y="25.5" width="9.5" height="9.5" rx="1.5" stroke="#C4472B" stroke-width="2.2"/><rect x="25.5" y="25.5" width="9.5" height="9.5" rx="1.5" stroke="#C4472B" stroke-width="2.2"/></svg><svg class="a" style="left:3370.00px;top:220.00px;" width="28.00" height="17.00" viewBox="0 0 28.00 17.00" fill="none"><path d="M3 3 L14.00 14.00 L25.00 3" stroke="#333333" stroke-width="2.4" stroke-linecap="round" stroke-linejoin="round"/></svg><div class="a" style="left:3416.30px;top:201.50px;width:2.00px;height:53.10px;background:#C8C6C4;"></div><svg class="a" style="left:3443.30px;top:207.80px;overflow:visible" width="41.70" height="39.00" viewBox="170 165 1215 1115" fill="none"><defs><linearGradient id="g1rl" x1="0" y1="170" x2="0" y2="965" gradientUnits="userSpaceOnUse"><stop offset="0" stop-color="#72BDF7"/><stop offset="0.3" stop-color="#4C8FE0"/><stop offset="0.6" stop-color="#72B07A"/><stop offset="0.85" stop-color="#C8C545"/><stop offset="1" stop-color="#F2CC2E"/></linearGradient><linearGradient id="g2rl" x1="1300" y1="520" x2="900" y2="1270" gradientUnits="userSpaceOnUse"><stop offset="0" stop-color="#9A52E2"/><stop offset="0.5" stop-color="#DA6088"/><stop offset="1" stop-color="#F0AE60"/></linearGradient><linearGradient id="g3rl" x1="850" y1="200" x2="1100" y2="480" gradientUnits="userSpaceOnUse"><stop offset="0" stop-color="#2228B8"/><stop offset="1" stop-color="#4A85E8"/></linearGradient><linearGradient id="g4rl" x1="450" y1="1000" x2="720" y2="1250" gradientUnits="userSpaceOnUse"><stop offset="0" stop-color="#F2A864"/><stop offset="0.6" stop-color="#E6683F"/><stop offset="1" stop-color="#C8403A"/></linearGradient></defs><path d="M930 170 C990 170 1030 205 1060 300 L1085 390 C1105 455 1150 485 1210 490 L800 490 C770 490 750 510 735 545 L830 270 C860 195 890 170 930 170 Z" fill="url(#g3rl)"/><path d="M400 965 L810 965 L720 1205 C700 1250 675 1272 640 1272 C585 1272 545 1235 515 1135 C485 1030 460 975 400 965 Z" fill="url(#g4rl)"/><path d="M470 170 L940 170 C895 172 860 205 832 285 L650 880 C630 940 600 965 540 965 L290 965 C205 965 165 895 182 800 L290 335 C320 235 380 170 470 170 Z" fill="url(#g1rl)"/><path d="M1010 490 L1285 490 C1365 490 1400 575 1378 675 L1262 1125 C1235 1225 1170 1272 1090 1272 L660 1272 C705 1265 742 1230 770 1145 L930 625 C958 535 985 490 1010 490 Z" fill="url(#g2rl)"/></svg><div class="a" style="left:3508.30px;top:201.50px;width:2.00px;height:53.10px;background:#C8C6C4;"></div><svg class="a" style="left:3640.40px;top:233.00px;" width="28.80" height="18.00" viewBox="0 0 28.80 18.00" fill="none"><path d="M3 3 L14.40 15.00 L25.80 3" stroke="#333333" stroke-width="2.4" stroke-linecap="round" stroke-linejoin="round"/></svg><div class="a" style="left:-2.00px;top:282.80px;width:278.30px;height:52.50px;background:#fff;background:#fff;border:2px solid #DEDEDE;box-sizing:border-box;"></div><div class="t" style="top:294.77px;font-size:29.43px;line-height:32.87px;color:#242424;left:9.50px;transform-origin:0 0;transform:scaleX(0.9293);">A4</div><svg class="a" style="left:248.00px;top:305.00px;" width="19.40" height="13.80" viewBox="0 0 19.40 13.80" fill="none"><path d="M3 3 L9.70 10.80 L16.40 3" stroke="#242424" stroke-width="2.6" stroke-linecap="round" stroke-linejoin="round"/></svg><div class="a" style="left:293.60px;top:282.80px;width:193.40px;height:52.50px;background:#fff;background:#fff;border:2px solid #DEDEDE;box-sizing:border-box;"></div><svg class="a" style="left:305.00px;top:290.00px;" width="40.00" height="38.00" viewBox="0 0 40.00 38.00" fill="none"><path d="M7.5 6 L34 32 M34 6 L7.5 32" stroke="#A6A6A6" stroke-width="2"/></svg><svg class="a" style="left:365.00px;top:290.00px;" width="47.00" height="38.00" viewBox="0 0 47.00 38.00" fill="none"><path d="M6 18.5 L18 30.5 L41.7 6" stroke="#A6A6A6" stroke-width="2" fill="none"/></svg><div class="t" style="top:289.45px;font-size:32.10px;line-height:35.86px;color:#333;left:428.00px;transform-origin:0 0;transform:scaleX(0.9346);font-style:italic;font-family:"Liberation Serif",serif;">f</div><div class="t" style="top:300.16px;font-size:22.47px;line-height:25.10px;color:#333;left:438.50px;transform-origin:0 0;transform:scaleX(0.9346);font-style:italic;font-family:"Liberation Serif",serif;">x</div><svg class="a" style="left:462.40px;top:303.50px;" width="19.30" height="13.80" viewBox="0 0 19.30 13.80" fill="none"><path d="M3 3 L9.65 10.80 L16.30 3" stroke="#B0B0B0" stroke-width="1.8" stroke-linecap="round" stroke-linejoin="round"/></svg><div class="a" style="left:495.30px;top:282.80px;width:3201.10px;height:52.50px;background:#fff;background:#fff;border:2px solid #DEDEDE;box-sizing:border-box;"></div><div class="t" style="top:290.17px;font-size:29.43px;line-height:32.87px;color:#242424;left:502.00px;transform-origin:0 0;transform:scaleX(1.0049);">17</div><svg class="a" style="left:3667.00px;top:300.00px;" width="27.20" height="17.00" viewBox="0 0 27.20 17.00" fill="none"><path d="M3 3 L13.60 14.00 L24.20 3" stroke="#242424" stroke-width="2.4" stroke-linecap="round" stroke-linejoin="round"/></svg><div class="a" style="left:81.00px;top:345.00px;width:5.00px;height:68.00px;background:#BDBDBD;"></div><div class="a" style="left:0.00px;top:408.00px;width:86.00px;height:5.00px;background:#BDBDBD;"></div><svg class="a" style="left:45.00px;top:372.00px;" width="35.00" height="34.00" viewBox="0 0 35.00 34.00" fill="none"><path d="M5.5 31.4 L32 31.4 L32 5.4 Z" fill="#B8B8B8"/></svg><div class="a" style="left:86.00px;top:345.00px;width:2804.00px;height:68.00px;overflow:hidden;"><div class="a" style="left:0.00px;top:25px;width:236.17px;height:38.4px;background:#D3E8D9;box-shadow:inset -1px 0 0 #B5D3BD"></div><div class="a" style="left:235.67px;top:25px;width:1px;height:42px;background:#D8D8D8"></div><div class="a" style="left:471.84px;top:25px;width:1px;height:42px;background:#D8D8D8"></div><div class="a" style="left:708.01px;top:25px;width:1px;height:42px;background:#D8D8D8"></div><div class="a" style="left:944.18px;top:25px;width:1px;height:42px;background:#D8D8D8"></div><div class="a" style="left:1180.35px;top:25px;width:1px;height:42px;background:#D8D8D8"></div><div class="a" style="left:1416.52px;top:25px;width:1px;height:42px;background:#D8D8D8"></div><div class="a" style="left:1652.69px;top:25px;width:1px;height:42px;background:#D8D8D8"></div><div class="a" style="left:1888.86px;top:25px;width:1px;height:42px;background:#D8D8D8"></div><div class="a" style="left:2125.03px;top:25px;width:1px;height:42px;background:#D8D8D8"></div><div class="a" style="left:2361.20px;top:25px;width:1px;height:42px;background:#D8D8D8"></div><div class="a" style="left:2597.37px;top:25px;width:1px;height:42px;background:#D8D8D8"></div><div class="a" style="left:0;top:66.7px;width:2804px;height:1.6px;background:#C9C9C9"></div><div class="a" style="left:0;top:63.4px;width:236.17px;height:4.6px;background:#3C7D47"></div><div class="t" style="top:27.55px;font-size:32.10px;line-height:35.86px;color:#2F6F3A;left:-1381.91px;width:3000px;text-align:center;transform-origin:50% 0;transform:scaleX(0.9346);">A</div><div class="t" style="top:27.55px;font-size:32.10px;line-height:35.86px;color:#505050;left:-1145.75px;width:3000px;text-align:center;transform-origin:50% 0;transform:scaleX(0.9346);">B</div><div class="t" style="top:27.55px;font-size:32.10px;line-height:35.86px;color:#505050;left:-909.58px;width:3000px;text-align:center;transform-origin:50% 0;transform:scaleX(0.9346);">C</div><div class="t" style="top:27.55px;font-size:32.10px;line-height:35.86px;color:#505050;left:-673.40px;width:3000px;text-align:center;transform-origin:50% 0;transform:scaleX(0.9346);">D</div><div class="t" style="top:27.55px;font-size:32.10px;line-height:35.86px;color:#505050;left:-437.24px;width:3000px;text-align:center;transform-origin:50% 0;transform:scaleX(0.9346);">E</div><div class="t" style="top:27.55px;font-size:32.10px;line-height:35.86px;color:#505050;left:-201.07px;width:3000px;text-align:center;transform-origin:50% 0;transform:scaleX(0.9346);">F</div><div class="t" style="top:27.55px;font-size:32.10px;line-height:35.86px;color:#505050;left:35.11px;width:3000px;text-align:center;transform-origin:50% 0;transform:scaleX(0.9346);">G</div><div class="t" style="top:27.55px;font-size:32.10px;line-height:35.86px;color:#505050;left:271.27px;width:3000px;text-align:center;transform-origin:50% 0;transform:scaleX(0.9346);">H</div><div class="t" style="top:27.55px;font-size:32.10px;line-height:35.86px;color:#505050;left:507.44px;width:3000px;text-align:center;transform-origin:50% 0;transform:scaleX(0.9346);">I</div><div class="t" style="top:27.55px;font-size:32.10px;line-height:35.86px;color:#505050;left:743.61px;width:3000px;text-align:center;transform-origin:50% 0;transform:scaleX(0.9346);">J</div><div class="t" style="top:27.55px;font-size:32.10px;line-height:35.86px;color:#505050;left:979.78px;width:3000px;text-align:center;transform-origin:50% 0;transform:scaleX(0.9346);">K</div><div class="t" style="top:27.55px;font-size:32.10px;line-height:35.86px;color:#505050;left:1215.95px;width:3000px;text-align:center;transform-origin:50% 0;transform:scaleX(0.9346);">L</div></div><div class="a" style="left:0.00px;top:413.00px;width:86.00px;height:1625.00px;overflow:hidden;"><div class="a" style="left:0;top:45.20px;width:85px;height:1.4px;background:#DCDCDC"></div><div class="t" style="top:6.65px;font-size:32.10px;line-height:35.86px;color:#505050;left:-2926.20px;width:3000px;text-align:right;transform-origin:100% 0;transform:scaleX(0.9346);">1</div><div class="a" style="left:0;top:93.05px;width:85px;height:1.4px;background:#DCDCDC"></div><div class="t" style="top:54.50px;font-size:32.10px;line-height:35.86px;color:#505050;left:-2926.20px;width:3000px;text-align:right;transform-origin:100% 0;transform:scaleX(0.9346);">2</div><div class="a" style="left:0;top:140.31px;width:85px;height:1.4px;background:#DCDCDC"></div><div class="t" style="top:101.75px;font-size:32.10px;line-height:35.86px;color:#505050;left:-2926.20px;width:3000px;text-align:right;transform-origin:100% 0;transform:scaleX(0.9346);">3</div><div class="a" style="left:0;top:142.00px;width:82px;height:47.25px;background:#D3E8D9"></div><div class="a" style="left:0;top:187.56px;width:85px;height:1.4px;background:#DCDCDC"></div><div class="t" style="top:149.01px;font-size:32.10px;line-height:35.86px;color:#2F6F3A;left:-2926.20px;width:3000px;text-align:right;transform-origin:100% 0;transform:scaleX(0.9346);">4</div><div class="a" style="left:0;top:234.81px;width:85px;height:1.4px;background:#DCDCDC"></div><div class="t" style="top:196.26px;font-size:32.10px;line-height:35.86px;color:#505050;left:-2926.20px;width:3000px;text-align:right;transform-origin:100% 0;transform:scaleX(0.9346);">5</div><div class="a" style="left:0;top:282.07px;width:85px;height:1.4px;background:#DCDCDC"></div><div class="t" style="top:243.52px;font-size:32.10px;line-height:35.86px;color:#505050;left:-2926.20px;width:3000px;text-align:right;transform-origin:100% 0;transform:scaleX(0.9346);">6</div><div class="a" style="left:0;top:329.32px;width:85px;height:1.4px;background:#DCDCDC"></div><div class="t" style="top:290.77px;font-size:32.10px;line-height:35.86px;color:#505050;left:-2926.20px;width:3000px;text-align:right;transform-origin:100% 0;transform:scaleX(0.9346);">7</div><div class="a" style="left:0;top:376.58px;width:85px;height:1.4px;background:#DCDCDC"></div><div class="t" style="top:338.03px;font-size:32.10px;line-height:35.86px;color:#505050;left:-2926.20px;width:3000px;text-align:right;transform-origin:100% 0;transform:scaleX(0.9346);">8</div><div class="a" style="left:0;top:423.84px;width:85px;height:1.4px;background:#DCDCDC"></div><div class="t" style="top:385.28px;font-size:32.10px;line-height:35.86px;color:#505050;left:-2926.20px;width:3000px;text-align:right;transform-origin:100% 0;transform:scaleX(0.9346);">9</div><div class="a" style="left:0;top:471.09px;width:85px;height:1.4px;background:#DCDCDC"></div><div class="t" style="top:432.54px;font-size:32.10px;line-height:35.86px;color:#505050;left:-2926.20px;width:3000px;text-align:right;transform-origin:100% 0;transform:scaleX(0.9346);">10</div><div class="a" style="left:0;top:518.35px;width:85px;height:1.4px;background:#DCDCDC"></div><div class="t" style="top:479.79px;font-size:32.10px;line-height:35.86px;color:#505050;left:-2926.20px;width:3000px;text-align:right;transform-origin:100% 0;transform:scaleX(0.9346);">11</div><div class="a" style="left:0;top:565.60px;width:85px;height:1.4px;background:#DCDCDC"></div><div class="t" style="top:527.05px;font-size:32.10px;line-height:35.86px;color:#505050;left:-2926.20px;width:3000px;text-align:right;transform-origin:100% 0;transform:scaleX(0.9346);">12</div><div class="a" style="left:0;top:612.86px;width:85px;height:1.4px;background:#DCDCDC"></div><div class="t" style="top:574.30px;font-size:32.10px;line-height:35.86px;color:#505050;left:-2926.20px;width:3000px;text-align:right;transform-origin:100% 0;transform:scaleX(0.9346);">13</div><div class="a" style="left:0;top:660.11px;width:85px;height:1.4px;background:#DCDCDC"></div><div class="t" style="top:621.56px;font-size:32.10px;line-height:35.86px;color:#505050;left:-2926.20px;width:3000px;text-align:right;transform-origin:100% 0;transform:scaleX(0.9346);">14</div><div class="a" style="left:0;top:707.37px;width:85px;height:1.4px;background:#DCDCDC"></div><div class="t" style="top:668.81px;font-size:32.10px;line-height:35.86px;color:#505050;left:-2926.20px;width:3000px;text-align:right;transform-origin:100% 0;transform:scaleX(0.9346);">15</div><div class="a" style="left:0;top:754.62px;width:85px;height:1.4px;background:#DCDCDC"></div><div class="t" style="top:716.07px;font-size:32.10px;line-height:35.86px;color:#505050;left:-2926.20px;width:3000px;text-align:right;transform-origin:100% 0;transform:scaleX(0.9346);">16</div><div class="a" style="left:0;top:801.88px;width:85px;height:1.4px;background:#DCDCDC"></div><div class="t" style="top:763.32px;font-size:32.10px;line-height:35.86px;color:#505050;left:-2926.20px;width:3000px;text-align:right;transform-origin:100% 0;transform:scaleX(0.9346);">17</div><div class="a" style="left:0;top:849.13px;width:85px;height:1.4px;background:#DCDCDC"></div><div class="t" style="top:810.58px;font-size:32.10px;line-height:35.86px;color:#505050;left:-2926.20px;width:3000px;text-align:right;transform-origin:100% 0;transform:scaleX(0.9346);">18</div><div class="a" style="left:0;top:896.38px;width:85px;height:1.4px;background:#DCDCDC"></div><div class="t" style="top:857.83px;font-size:32.10px;line-height:35.86px;color:#505050;left:-2926.20px;width:3000px;text-align:right;transform-origin:100% 0;transform:scaleX(0.9346);">19</div><div class="a" style="left:0;top:943.64px;width:85px;height:1.4px;background:#DCDCDC"></div><div class="t" style="top:905.09px;font-size:32.10px;line-height:35.86px;color:#505050;left:-2926.20px;width:3000px;text-align:right;transform-origin:100% 0;transform:scaleX(0.9346);">20</div><div class="a" style="left:0;top:990.89px;width:85px;height:1.4px;background:#DCDCDC"></div><div class="t" style="top:952.34px;font-size:32.10px;line-height:35.86px;color:#505050;left:-2926.20px;width:3000px;text-align:right;transform-origin:100% 0;transform:scaleX(0.9346);">21</div><div class="a" style="left:0;top:1038.15px;width:85px;height:1.4px;background:#DCDCDC"></div><div class="t" style="top:999.60px;font-size:32.10px;line-height:35.86px;color:#505050;left:-2926.20px;width:3000px;text-align:right;transform-origin:100% 0;transform:scaleX(0.9346);">22</div><div class="a" style="left:0;top:1085.40px;width:85px;height:1.4px;background:#DCDCDC"></div><div class="t" style="top:1046.85px;font-size:32.10px;line-height:35.86px;color:#505050;left:-2926.20px;width:3000px;text-align:right;transform-origin:100% 0;transform:scaleX(0.9346);">23</div><div class="a" style="left:0;top:1132.66px;width:85px;height:1.4px;background:#DCDCDC"></div><div class="t" style="top:1094.11px;font-size:32.10px;line-height:35.86px;color:#505050;left:-2926.20px;width:3000px;text-align:right;transform-origin:100% 0;transform:scaleX(0.9346);">24</div><div class="a" style="left:0;top:1179.91px;width:85px;height:1.4px;background:#DCDCDC"></div><div class="t" style="top:1141.36px;font-size:32.10px;line-height:35.86px;color:#505050;left:-2926.20px;width:3000px;text-align:right;transform-origin:100% 0;transform:scaleX(0.9346);">25</div><div class="a" style="left:0;top:1227.17px;width:85px;height:1.4px;background:#DCDCDC"></div><div class="t" style="top:1188.62px;font-size:32.10px;line-height:35.86px;color:#505050;left:-2926.20px;width:3000px;text-align:right;transform-origin:100% 0;transform:scaleX(0.9346);">26</div><div class="a" style="left:0;top:1274.42px;width:85px;height:1.4px;background:#DCDCDC"></div><div class="t" style="top:1235.87px;font-size:32.10px;line-height:35.86px;color:#505050;left:-2926.20px;width:3000px;text-align:right;transform-origin:100% 0;transform:scaleX(0.9346);">27</div><div class="a" style="left:0;top:1321.68px;width:85px;height:1.4px;background:#DCDCDC"></div><div class="t" style="top:1283.13px;font-size:32.10px;line-height:35.86px;color:#505050;left:-2926.20px;width:3000px;text-align:right;transform-origin:100% 0;transform:scaleX(0.9346);">28</div><div class="a" style="left:0;top:1368.93px;width:85px;height:1.4px;background:#DCDCDC"></div><div class="t" style="top:1330.38px;font-size:32.10px;line-height:35.86px;color:#505050;left:-2926.20px;width:3000px;text-align:right;transform-origin:100% 0;transform:scaleX(0.9346);">29</div><div class="a" style="left:0;top:1416.19px;width:85px;height:1.4px;background:#DCDCDC"></div><div class="t" style="top:1377.64px;font-size:32.10px;line-height:35.86px;color:#505050;left:-2926.20px;width:3000px;text-align:right;transform-origin:100% 0;transform:scaleX(0.9346);">30</div><div class="a" style="left:0;top:1463.44px;width:85px;height:1.4px;background:#DCDCDC"></div><div class="t" style="top:1424.89px;font-size:32.10px;line-height:35.86px;color:#505050;left:-2926.20px;width:3000px;text-align:right;transform-origin:100% 0;transform:scaleX(0.9346);">31</div><div class="a" style="left:0;top:1510.70px;width:85px;height:1.4px;background:#DCDCDC"></div><div class="t" style="top:1472.15px;font-size:32.10px;line-height:35.86px;color:#505050;left:-2926.20px;width:3000px;text-align:right;transform-origin:100% 0;transform:scaleX(0.9346);">32</div><div class="a" style="left:0;top:1557.95px;width:85px;height:1.4px;background:#DCDCDC"></div><div class="t" style="top:1519.40px;font-size:32.10px;line-height:35.86px;color:#505050;left:-2926.20px;width:3000px;text-align:right;transform-origin:100% 0;transform:scaleX(0.9346);">33</div><div class="a" style="left:0;top:1605.21px;width:85px;height:1.4px;background:#DCDCDC"></div><div class="t" style="top:1566.66px;font-size:32.10px;line-height:35.86px;color:#505050;left:-2926.20px;width:3000px;text-align:right;transform-origin:100% 0;transform:scaleX(0.9346);">34</div><div class="a" style="left:0;top:1652.46px;width:85px;height:1.4px;background:#DCDCDC"></div><div class="t" style="top:1613.91px;font-size:32.10px;line-height:35.86px;color:#505050;left:-2926.20px;width:3000px;text-align:right;transform-origin:100% 0;transform:scaleX(0.9346);">35</div><div class="a" style="left:84.6px;top:0;width:1.6px;height:1700px;background:#C9C9C9"></div></div><div class="a" style="left:86.00px;top:413.00px;width:2804.00px;height:1625.00px;overflow:hidden;"><div class="a" style="left:0;top:0.00px;width:2804px;height:46.90px;background:#E0EEF2"></div><div class="a" style="left:0;top:44.85px;width:2804px;height:2.1px;background:#D4D5D9"></div><div class="a" style="left:0;top:46.90px;width:2804px;height:47.85px;background:#F5F6F8"></div><div class="a" style="left:0;top:92.70px;width:2804px;height:2.1px;background:#D4D5D9"></div><div class="a" style="left:0;top:94.75px;width:2804px;height:47.25px;background:#FFFFFF"></div><div class="a" style="left:0;top:139.95px;width:2804px;height:2.1px;background:#D4D5D9"></div><div class="a" style="left:0;top:142.00px;width:2804px;height:47.25px;background:#F5F6F8"></div><div class="a" style="left:0;top:187.21px;width:2804px;height:2.1px;background:#D4D5D9"></div><div class="a" style="left:0;top:189.26px;width:2804px;height:47.25px;background:#FFFFFF"></div><div class="a" style="left:0;top:234.46px;width:2804px;height:2.1px;background:#D4D5D9"></div><div class="a" style="left:0;top:236.51px;width:2804px;height:47.25px;background:#F5F6F8"></div><div class="a" style="left:0;top:281.72px;width:2804px;height:2.1px;background:#D4D5D9"></div><div class="a" style="left:0;top:283.77px;width:2804px;height:47.25px;background:#FFFFFF"></div><div class="a" style="left:0;top:328.97px;width:2804px;height:2.1px;background:#D4D5D9"></div><div class="a" style="left:0;top:331.02px;width:2804px;height:47.25px;background:#F5F6F8"></div><div class="a" style="left:0;top:376.23px;width:2804px;height:2.1px;background:#D4D5D9"></div><div class="a" style="left:0;top:378.28px;width:2804px;height:47.26px;background:#FFFFFF"></div><div class="a" style="left:0;top:423.49px;width:2804px;height:2.1px;background:#D4D5D9"></div><div class="a" style="left:0;top:425.54px;width:2804px;height:47.25px;background:#F5F6F8"></div><div class="a" style="left:0;top:470.74px;width:2804px;height:2.1px;background:#D4D5D9"></div><div class="a" style="left:0;top:472.79px;width:2804px;height:47.26px;background:#FFFFFF"></div><div class="a" style="left:0;top:518.00px;width:2804px;height:2.1px;background:#D4D5D9"></div><div class="a" style="left:0;top:520.05px;width:2804px;height:47.25px;background:#F5F6F8"></div><div class="a" style="left:0;top:565.25px;width:2804px;height:2.1px;background:#D4D5D9"></div><div class="a" style="left:0;top:567.30px;width:2804px;height:47.26px;background:#FFFFFF"></div><div class="a" style="left:0;top:612.51px;width:2804px;height:2.1px;background:#D4D5D9"></div><div class="a" style="left:0;top:614.56px;width:2804px;height:47.25px;background:#F5F6F8"></div><div class="a" style="left:0;top:659.76px;width:2804px;height:2.1px;background:#D4D5D9"></div><div class="a" style="left:0;top:661.81px;width:2804px;height:47.26px;background:#FFFFFF"></div><div class="a" style="left:0;top:707.02px;width:2804px;height:2.1px;background:#D4D5D9"></div><div class="a" style="left:0;top:709.07px;width:2804px;height:47.26px;background:#F5F6F8"></div><div class="a" style="left:0;top:754.27px;width:2804px;height:2.1px;background:#D4D5D9"></div><div class="a" style="left:0;top:756.32px;width:2804px;height:47.25px;background:#FFFFFF"></div><div class="a" style="left:0;top:801.53px;width:2804px;height:2.1px;background:#D4D5D9"></div><div class="a" style="left:0;top:803.58px;width:2804px;height:47.25px;background:#F5F6F8"></div><div class="a" style="left:0;top:848.78px;width:2804px;height:2.1px;background:#D4D5D9"></div><div class="a" style="left:0;top:850.83px;width:2804px;height:47.26px;background:#FFFFFF"></div><div class="a" style="left:0;top:896.04px;width:2804px;height:2.1px;background:#D4D5D9"></div><div class="a" style="left:0;top:898.09px;width:2804px;height:47.26px;background:#F5F6F8"></div><div class="a" style="left:0;top:943.29px;width:2804px;height:2.1px;background:#D4D5D9"></div><div class="a" style="left:0;top:945.34px;width:2804px;height:47.25px;background:#FFFFFF"></div><div class="a" style="left:0;top:990.55px;width:2804px;height:2.1px;background:#D4D5D9"></div><div class="a" style="left:0;top:992.60px;width:2804px;height:47.25px;background:#F5F6F8"></div><div class="a" style="left:0;top:1037.80px;width:2804px;height:2.1px;background:#D4D5D9"></div><div class="a" style="left:0;top:1039.85px;width:2804px;height:47.26px;background:#FFFFFF"></div><div class="a" style="left:0;top:1085.06px;width:2804px;height:2.1px;background:#D4D5D9"></div><div class="a" style="left:0;top:1087.11px;width:2804px;height:47.26px;background:#F5F6F8"></div><div class="a" style="left:0;top:1132.31px;width:2804px;height:2.1px;background:#D4D5D9"></div><div class="a" style="left:0;top:1134.36px;width:2804px;height:47.25px;background:#FFFFFF"></div><div class="a" style="left:0;top:1179.57px;width:2804px;height:2.1px;background:#D4D5D9"></div><div class="a" style="left:0;top:1181.62px;width:2804px;height:47.26px;background:#F5F6F8"></div><div class="a" style="left:0;top:1226.82px;width:2804px;height:2.1px;background:#D4D5D9"></div><div class="a" style="left:0;top:1228.87px;width:2804px;height:47.25px;background:#FFFFFF"></div><div class="a" style="left:0;top:1274.08px;width:2804px;height:2.1px;background:#D4D5D9"></div><div class="a" style="left:0;top:1276.12px;width:2804px;height:47.26px;background:#F5F6F8"></div><div class="a" style="left:0;top:1321.33px;width:2804px;height:2.1px;background:#D4D5D9"></div><div class="a" style="left:0;top:1323.38px;width:2804px;height:47.25px;background:#FFFFFF"></div><div class="a" style="left:0;top:1368.59px;width:2804px;height:2.1px;background:#D4D5D9"></div><div class="a" style="left:0;top:1370.63px;width:2804px;height:47.26px;background:#F5F6F8"></div><div class="a" style="left:0;top:1415.84px;width:2804px;height:2.1px;background:#D4D5D9"></div><div class="a" style="left:0;top:1417.89px;width:2804px;height:47.25px;background:#FFFFFF"></div><div class="a" style="left:0;top:1463.10px;width:2804px;height:2.1px;background:#D4D5D9"></div><div class="a" style="left:0;top:1465.14px;width:2804px;height:47.26px;background:#F5F6F8"></div><div class="a" style="left:0;top:1510.35px;width:2804px;height:2.1px;background:#D4D5D9"></div><div class="a" style="left:0;top:1512.40px;width:2804px;height:47.25px;background:#FFFFFF"></div><div class="a" style="left:0;top:1557.61px;width:2804px;height:2.1px;background:#D4D5D9"></div><div class="a" style="left:0;top:1559.65px;width:2804px;height:47.26px;background:#F5F6F8"></div><div class="a" style="left:0;top:1604.86px;width:2804px;height:2.1px;background:#D4D5D9"></div><div class="a" style="left:0;top:1606.91px;width:2804px;height:47.25px;background:#FFFFFF"></div><div class="a" style="left:0;top:1652.12px;width:2804px;height:2.1px;background:#D4D5D9"></div><div class="a" style="left:0.00px;top:0.00px;width:236.17px;height:44.48px;overflow:hidden;"><div class="t" style="top:7.00px;font-size:33.92px;line-height:37.89px;color:#000;left:4.40px;transform-origin:0 0;transform:scaleX(0.9346);">FixedAssetPosting</div></div><div class="a" style="left:236.17px;top:0.00px;width:236.17px;height:44.48px;overflow:hidden;"><div class="t" style="top:7.00px;font-size:33.92px;line-height:37.89px;color:#000;left:4.40px;transform-origin:0 0;transform:scaleX(0.9346);">FixedAssetPostingType</div></div><div class="a" style="left:472.34px;top:0.00px;width:236.17px;height:44.48px;overflow:hidden;"><div class="t" style="top:7.00px;font-size:33.92px;line-height:37.89px;color:#000;left:4.40px;transform-origin:0 0;transform:scaleX(0.9346);">BeforeStartingDate</div></div><div class="a" style="left:708.51px;top:0.00px;width:236.17px;height:44.48px;overflow:hidden;"><div class="t" style="top:7.00px;font-size:33.92px;line-height:37.89px;color:#000;left:4.40px;transform-origin:0 0;transform:scaleX(0.9346);">AtEndingDate</div></div><div class="a" style="left:944.68px;top:0.00px;width:236.17px;height:44.48px;overflow:hidden;"><div class="t" style="top:7.00px;font-size:33.92px;line-height:37.89px;color:#000;left:4.40px;transform-origin:0 0;transform:scaleX(0.9346);">NetChange</div></div><div class="a" style="left:1180.85px;top:0.00px;width:236.17px;height:44.48px;overflow:hidden;"><div class="t" style="top:7.00px;font-size:33.92px;line-height:37.89px;color:#000;left:4.40px;transform-origin:0 0;transform:scaleX(0.9346);">AssetNumber</div></div><div class="a" style="left:1417.02px;top:0.00px;width:236.17px;height:44.48px;overflow:hidden;"><div class="t" style="top:7.00px;font-size:33.92px;line-height:37.89px;color:#000;left:4.40px;transform-origin:0 0;transform:scaleX(0.9346);">AssetDescription</div></div><div class="a" style="left:1653.19px;top:0.00px;width:236.17px;height:44.48px;overflow:hidden;"><div class="t" style="top:7.00px;font-size:33.92px;line-height:37.89px;color:#000;left:4.40px;transform-origin:0 0;transform:scaleX(0.9346);">FixedAssetClass</div></div><div class="a" style="left:1889.36px;top:0.00px;width:236.17px;height:44.48px;overflow:hidden;"><div class="t" style="top:7.00px;font-size:33.92px;line-height:37.89px;color:#000;left:4.40px;transform-origin:0 0;transform:scaleX(0.9346);">FixedAssetSubclass</div></div><div class="a" style="left:2125.53px;top:0.00px;width:236.17px;height:44.48px;overflow:hidden;"><div class="t" style="top:7.00px;font-size:33.92px;line-height:37.89px;color:#000;left:4.40px;transform-origin:0 0;transform:scaleX(0.9346);">FixedAssetLocation</div></div><div class="a" style="left:2361.70px;top:0.00px;width:236.17px;height:44.48px;overflow:hidden;"><div class="t" style="top:7.00px;font-size:33.92px;line-height:37.89px;color:#000;left:4.40px;transform-origin:0 0;transform:scaleX(0.9346);">BudgetedAsset</div></div><div class="a" style="left:2597.87px;top:0.00px;width:236.17px;height:44.48px;overflow:hidden;"><div class="t" style="top:7.00px;font-size:33.92px;line-height:37.89px;color:#000;left:4.40px;transform-origin:0 0;transform:scaleX(0.9346);">AcquisitionDate</div></div><div class="a" style="left:0.00px;top:47.10px;width:236.17px;height:46.24px;overflow:hidden;"><div class="t" style="top:7.68px;font-size:33.17px;line-height:37.05px;color:#000;left:-2772.03px;width:3000px;text-align:right;transform-origin:100% 0;transform:scaleX(0.9346);">15</div></div><div class="a" style="left:236.17px;top:47.10px;width:236.17px;height:46.24px;overflow:hidden;"><div class="t" style="top:7.20px;font-size:33.71px;line-height:37.65px;color:#000;left:4.60px;transform-origin:0 0;transform:scaleX(0.9850);">Acquisition Cost</div></div><div class="a" style="left:472.34px;top:47.10px;width:236.17px;height:46.24px;overflow:hidden;"><div class="t" style="top:7.68px;font-size:33.17px;line-height:37.05px;color:#000;left:-2770.53px;width:3000px;text-align:right;transform-origin:100% 0;transform:scaleX(0.9346);">46,032.88</div></div><div class="a" style="left:708.51px;top:47.10px;width:236.17px;height:46.24px;overflow:hidden;"><div class="t" style="top:7.68px;font-size:33.17px;line-height:37.05px;color:#000;left:-2770.53px;width:3000px;text-align:right;transform-origin:100% 0;transform:scaleX(0.9346);">46,032.88</div></div><div class="a" style="left:944.68px;top:47.10px;width:236.17px;height:46.24px;overflow:hidden;"><div class="t" style="top:7.68px;font-size:33.17px;line-height:37.05px;color:#000;left:-2770.83px;width:3000px;text-align:right;transform-origin:100% 0;transform:scaleX(0.9346);">0.00</div></div><div class="a" style="left:1180.85px;top:47.10px;width:236.17px;height:46.24px;overflow:hidden;"><div class="t" style="top:8.17px;font-size:32.64px;line-height:36.45px;color:#000;left:7.00px;transform-origin:0 0;transform:scaleX(0.9346);">FA000010</div></div><div class="a" style="left:1417.02px;top:47.10px;width:236.17px;height:46.24px;overflow:hidden;"><div class="t" style="top:6.91px;font-size:34.03px;line-height:38.01px;color:#000;left:6.70px;transform-origin:0 0;transform:scaleX(0.9346);">Mercedes 300</div></div><div class="a" style="left:1653.19px;top:47.10px;width:236.17px;height:46.24px;overflow:hidden;"><div class="t" style="top:9.33px;font-size:31.35px;line-height:35.02px;color:#000;left:6.00px;transform-origin:0 0;transform:scaleX(0.9282);">TANGIBLE</div></div><div class="a" style="left:1889.36px;top:47.10px;width:236.17px;height:46.24px;overflow:hidden;"><div class="t" style="top:9.33px;font-size:31.35px;line-height:35.02px;color:#000;left:6.50px;transform-origin:0 0;transform:scaleX(0.9059);">CAR</div></div><div class="a" style="left:2125.53px;top:47.10px;width:236.17px;height:46.24px;overflow:hidden;"><div class="t" style="top:9.33px;font-size:31.35px;line-height:35.02px;color:#000;left:6.50px;transform-origin:0 0;transform:scaleX(1.0526);">ADM</div></div><div class="a" style="left:2361.70px;top:47.10px;width:236.17px;height:46.24px;overflow:hidden;"><div class="t" style="top:9.33px;font-size:31.35px;line-height:35.02px;color:#000;left:-1381.91px;width:3000px;text-align:center;transform-origin:50% 0;transform:scaleX(0.8548);">FALSE</div></div><div class="a" style="left:2597.87px;top:47.10px;width:236.17px;height:46.24px;overflow:hidden;"><div class="t" style="top:7.68px;font-size:33.17px;line-height:37.05px;color:#000;left:-2770.83px;width:3000px;text-align:right;transform-origin:100% 0;transform:scaleX(0.9768);">1/1/2018</div></div><div class="a" style="left:0.00px;top:94.35px;width:236.17px;height:46.23px;overflow:hidden;"><div class="t" style="top:7.68px;font-size:33.17px;line-height:37.05px;color:#000;left:-2772.03px;width:3000px;text-align:right;transform-origin:100% 0;transform:scaleX(0.9346);">16</div></div><div class="a" style="left:236.17px;top:94.35px;width:236.17px;height:46.23px;overflow:hidden;"><div class="t" style="top:7.20px;font-size:33.71px;line-height:37.65px;color:#000;left:4.60px;transform-origin:0 0;transform:scaleX(0.9850);">Depreciation</div></div><div class="a" style="left:472.34px;top:94.35px;width:236.17px;height:46.23px;overflow:hidden;"><div class="t" style="top:7.68px;font-size:33.17px;line-height:37.05px;color:#000;left:-2770.53px;width:3000px;text-align:right;transform-origin:100% 0;transform:scaleX(0.9346);">-9,249.00</div></div><div class="a" style="left:708.51px;top:94.35px;width:236.17px;height:46.23px;overflow:hidden;"><div class="t" style="top:7.68px;font-size:33.17px;line-height:37.05px;color:#000;left:-2770.53px;width:3000px;text-align:right;transform-origin:100% 0;transform:scaleX(0.9346);">-9,249.00</div></div><div class="a" style="left:944.68px;top:94.35px;width:236.17px;height:46.23px;overflow:hidden;"><div class="t" style="top:7.68px;font-size:33.17px;line-height:37.05px;color:#000;left:-2770.83px;width:3000px;text-align:right;transform-origin:100% 0;transform:scaleX(0.9346);">0.00</div></div><div class="a" style="left:1180.85px;top:94.35px;width:236.17px;height:46.23px;overflow:hidden;"><div class="t" style="top:8.17px;font-size:32.64px;line-height:36.45px;color:#000;left:7.00px;transform-origin:0 0;transform:scaleX(0.9346);">FA000010</div></div><div class="a" style="left:1417.02px;top:94.35px;width:236.17px;height:46.23px;overflow:hidden;"><div class="t" style="top:6.91px;font-size:34.03px;line-height:38.01px;color:#000;left:6.70px;transform-origin:0 0;transform:scaleX(0.9346);">Mercedes 300</div></div><div class="a" style="left:1653.19px;top:94.35px;width:236.17px;height:46.23px;overflow:hidden;"><div class="t" style="top:9.33px;font-size:31.35px;line-height:35.02px;color:#000;left:6.00px;transform-origin:0 0;transform:scaleX(0.9282);">TANGIBLE</div></div><div class="a" style="left:1889.36px;top:94.35px;width:236.17px;height:46.23px;overflow:hidden;"><div class="t" style="top:9.33px;font-size:31.35px;line-height:35.02px;color:#000;left:6.50px;transform-origin:0 0;transform:scaleX(0.9059);">CAR</div></div><div class="a" style="left:2125.53px;top:94.35px;width:236.17px;height:46.23px;overflow:hidden;"><div class="t" style="top:9.33px;font-size:31.35px;line-height:35.02px;color:#000;left:6.50px;transform-origin:0 0;transform:scaleX(1.0526);">ADM</div></div><div class="a" style="left:2361.70px;top:94.35px;width:236.17px;height:46.23px;overflow:hidden;"><div class="t" style="top:9.33px;font-size:31.35px;line-height:35.02px;color:#000;left:-1381.91px;width:3000px;text-align:center;transform-origin:50% 0;transform:scaleX(0.8548);">FALSE</div></div><div class="a" style="left:2597.87px;top:94.35px;width:236.17px;height:46.23px;overflow:hidden;"><div class="t" style="top:7.68px;font-size:33.17px;line-height:37.05px;color:#000;left:-2770.83px;width:3000px;text-align:right;transform-origin:100% 0;transform:scaleX(0.9768);">1/1/2018</div></div><div class="a" style="left:0.00px;top:141.61px;width:236.17px;height:46.23px;overflow:hidden;"><div class="t" style="top:7.68px;font-size:33.17px;line-height:37.05px;color:#000;left:-2772.03px;width:3000px;text-align:right;transform-origin:100% 0;transform:scaleX(0.9346);">17</div></div><div class="a" style="left:236.17px;top:141.61px;width:236.17px;height:46.23px;overflow:hidden;"><div class="t" style="top:7.20px;font-size:33.71px;line-height:37.65px;color:#000;left:4.60px;transform-origin:0 0;transform:scaleX(0.9850);">Book Value</div></div><div class="a" style="left:472.34px;top:141.61px;width:236.17px;height:46.23px;overflow:hidden;"><div class="t" style="top:7.68px;font-size:33.17px;line-height:37.05px;color:#000;left:-2770.53px;width:3000px;text-align:right;transform-origin:100% 0;transform:scaleX(0.9346);">36,783.88</div></div><div class="a" style="left:708.51px;top:141.61px;width:236.17px;height:46.23px;overflow:hidden;"><div class="t" style="top:7.68px;font-size:33.17px;line-height:37.05px;color:#000;left:-2770.53px;width:3000px;text-align:right;transform-origin:100% 0;transform:scaleX(0.9346);">36,783.88</div></div><div class="a" style="left:944.68px;top:141.61px;width:236.17px;height:46.23px;overflow:hidden;"><div class="t" style="top:7.68px;font-size:33.17px;line-height:37.05px;color:#000;left:-2770.83px;width:3000px;text-align:right;transform-origin:100% 0;transform:scaleX(0.9346);">0.00</div></div><div class="a" style="left:1180.85px;top:141.61px;width:236.17px;height:46.23px;overflow:hidden;"><div class="t" style="top:8.17px;font-size:32.64px;line-height:36.45px;color:#000;left:7.00px;transform-origin:0 0;transform:scaleX(0.9346);">FA000010</div></div><div class="a" style="left:1417.02px;top:141.61px;width:236.17px;height:46.23px;overflow:hidden;"><div class="t" style="top:6.91px;font-size:34.03px;line-height:38.01px;color:#000;left:6.70px;transform-origin:0 0;transform:scaleX(0.9346);">Mercedes 300</div></div><div class="a" style="left:1653.19px;top:141.61px;width:236.17px;height:46.23px;overflow:hidden;"><div class="t" style="top:9.33px;font-size:31.35px;line-height:35.02px;color:#000;left:6.00px;transform-origin:0 0;transform:scaleX(0.9282);">TANGIBLE</div></div><div class="a" style="left:1889.36px;top:141.61px;width:236.17px;height:46.23px;overflow:hidden;"><div class="t" style="top:9.33px;font-size:31.35px;line-height:35.02px;color:#000;left:6.50px;transform-origin:0 0;transform:scaleX(0.9059);">CAR</div></div><div class="a" style="left:2125.53px;top:141.61px;width:236.17px;height:46.23px;overflow:hidden;"><div class="t" style="top:9.33px;font-size:31.35px;line-height:35.02px;color:#000;left:6.50px;transform-origin:0 0;transform:scaleX(1.0526);">ADM</div></div><div class="a" style="left:2361.70px;top:141.61px;width:236.17px;height:46.23px;overflow:hidden;"><div class="t" style="top:9.33px;font-size:31.35px;line-height:35.02px;color:#000;left:-1381.91px;width:3000px;text-align:center;transform-origin:50% 0;transform:scaleX(0.8548);">FALSE</div></div><div class="a" style="left:2597.87px;top:141.61px;width:236.17px;height:46.23px;overflow:hidden;"><div class="t" style="top:7.68px;font-size:33.17px;line-height:37.05px;color:#000;left:-2770.83px;width:3000px;text-align:right;transform-origin:100% 0;transform:scaleX(0.9768);">1/1/2018</div></div><div class="a" style="left:0.00px;top:188.86px;width:236.17px;height:46.23px;overflow:hidden;"><div class="t" style="top:7.68px;font-size:33.17px;line-height:37.05px;color:#000;left:-2772.03px;width:3000px;text-align:right;transform-origin:100% 0;transform:scaleX(0.9346);">18</div></div><div class="a" style="left:236.17px;top:188.86px;width:236.17px;height:46.23px;overflow:hidden;"><div class="t" style="top:7.20px;font-size:33.71px;line-height:37.65px;color:#000;left:4.60px;transform-origin:0 0;transform:scaleX(0.9850);">Proceeds on Disposal</div></div><div class="a" style="left:472.34px;top:188.86px;width:236.17px;height:46.23px;overflow:hidden;"><div class="t" style="top:7.68px;font-size:33.17px;line-height:37.05px;color:#000;left:-2770.53px;width:3000px;text-align:right;transform-origin:100% 0;transform:scaleX(0.9346);">0.00</div></div><div class="a" style="left:708.51px;top:188.86px;width:236.17px;height:46.23px;overflow:hidden;"><div class="t" style="top:7.68px;font-size:33.17px;line-height:37.05px;color:#000;left:-2770.53px;width:3000px;text-align:right;transform-origin:100% 0;transform:scaleX(0.9346);">0.00</div></div><div class="a" style="left:944.68px;top:188.86px;width:236.17px;height:46.23px;overflow:hidden;"><div class="t" style="top:7.68px;font-size:33.17px;line-height:37.05px;color:#000;left:-2770.83px;width:3000px;text-align:right;transform-origin:100% 0;transform:scaleX(0.9346);">0.00</div></div><div class="a" style="left:1180.85px;top:188.86px;width:236.17px;height:46.23px;overflow:hidden;"><div class="t" style="top:8.17px;font-size:32.64px;line-height:36.45px;color:#000;left:7.00px;transform-origin:0 0;transform:scaleX(0.9346);">FA000010</div></div><div class="a" style="left:1417.02px;top:188.86px;width:236.17px;height:46.23px;overflow:hidden;"><div class="t" style="top:6.91px;font-size:34.03px;line-height:38.01px;color:#000;left:6.70px;transform-origin:0 0;transform:scaleX(0.9346);">Mercedes 300</div></div><div class="a" style="left:1653.19px;top:188.86px;width:236.17px;height:46.23px;overflow:hidden;"><div class="t" style="top:9.33px;font-size:31.35px;line-height:35.02px;color:#000;left:6.00px;transform-origin:0 0;transform:scaleX(0.9282);">TANGIBLE</div></div><div class="a" style="left:1889.36px;top:188.86px;width:236.17px;height:46.23px;overflow:hidden;"><div class="t" style="top:9.33px;font-size:31.35px;line-height:35.02px;color:#000;left:6.50px;transform-origin:0 0;transform:scaleX(0.9059);">CAR</div></div><div class="a" style="left:2125.53px;top:188.86px;width:236.17px;height:46.23px;overflow:hidden;"><div class="t" style="top:9.33px;font-size:31.35px;line-height:35.02px;color:#000;left:6.50px;transform-origin:0 0;transform:scaleX(1.0526);">ADM</div></div><div class="a" style="left:2361.70px;top:188.86px;width:236.17px;height:46.23px;overflow:hidden;"><div class="t" style="top:9.33px;font-size:31.35px;line-height:35.02px;color:#000;left:-1381.91px;width:3000px;text-align:center;transform-origin:50% 0;transform:scaleX(0.8548);">FALSE</div></div><div class="a" style="left:2597.87px;top:188.86px;width:236.17px;height:46.23px;overflow:hidden;"><div class="t" style="top:7.68px;font-size:33.17px;line-height:37.05px;color:#000;left:-2770.83px;width:3000px;text-align:right;transform-origin:100% 0;transform:scaleX(0.9768);">1/1/2018</div></div><div class="a" style="left:0.00px;top:236.12px;width:236.17px;height:46.23px;overflow:hidden;"><div class="t" style="top:7.68px;font-size:33.17px;line-height:37.05px;color:#000;left:-2772.03px;width:3000px;text-align:right;transform-origin:100% 0;transform:scaleX(0.9346);">19</div></div><div class="a" style="left:236.17px;top:236.12px;width:236.17px;height:46.23px;overflow:hidden;"><div class="t" style="top:7.20px;font-size:33.71px;line-height:37.65px;color:#000;left:4.60px;transform-origin:0 0;transform:scaleX(0.9850);">Gain/Loss</div></div><div class="a" style="left:472.34px;top:236.12px;width:236.17px;height:46.23px;overflow:hidden;"><div class="t" style="top:7.68px;font-size:33.17px;line-height:37.05px;color:#000;left:-2770.53px;width:3000px;text-align:right;transform-origin:100% 0;transform:scaleX(0.9346);">0.00</div></div><div class="a" style="left:708.51px;top:236.12px;width:236.17px;height:46.23px;overflow:hidden;"><div class="t" style="top:7.68px;font-size:33.17px;line-height:37.05px;color:#000;left:-2770.53px;width:3000px;text-align:right;transform-origin:100% 0;transform:scaleX(0.9346);">0.00</div></div><div class="a" style="left:944.68px;top:236.12px;width:236.17px;height:46.23px;overflow:hidden;"><div class="t" style="top:7.68px;font-size:33.17px;line-height:37.05px;color:#000;left:-2770.83px;width:3000px;text-align:right;transform-origin:100% 0;transform:scaleX(0.9346);">0.00</div></div><div class="a" style="left:1180.85px;top:236.12px;width:236.17px;height:46.23px;overflow:hidden;"><div class="t" style="top:8.17px;font-size:32.64px;line-height:36.45px;color:#000;left:7.00px;transform-origin:0 0;transform:scaleX(0.9346);">FA000010</div></div><div class="a" style="left:1417.02px;top:236.12px;width:236.17px;height:46.23px;overflow:hidden;"><div class="t" style="top:6.91px;font-size:34.03px;line-height:38.01px;color:#000;left:6.70px;transform-origin:0 0;transform:scaleX(0.9346);">Mercedes 300</div></div><div class="a" style="left:1653.19px;top:236.12px;width:236.17px;height:46.23px;overflow:hidden;"><div class="t" style="top:9.33px;font-size:31.35px;line-height:35.02px;color:#000;left:6.00px;transform-origin:0 0;transform:scaleX(0.9282);">TANGIBLE</div></div><div class="a" style="left:1889.36px;top:236.12px;width:236.17px;height:46.23px;overflow:hidden;"><div class="t" style="top:9.33px;font-size:31.35px;line-height:35.02px;color:#000;left:6.50px;transform-origin:0 0;transform:scaleX(0.9059);">CAR</div></div><div class="a" style="left:2125.53px;top:236.12px;width:236.17px;height:46.23px;overflow:hidden;"><div class="t" style="top:9.33px;font-size:31.35px;line-height:35.02px;color:#000;left:6.50px;transform-origin:0 0;transform:scaleX(1.0526);">ADM</div></div><div class="a" style="left:2361.70px;top:236.12px;width:236.17px;height:46.23px;overflow:hidden;"><div class="t" style="top:9.33px;font-size:31.35px;line-height:35.02px;color:#000;left:-1381.91px;width:3000px;text-align:center;transform-origin:50% 0;transform:scaleX(0.8548);">FALSE</div></div><div class="a" style="left:2597.87px;top:236.12px;width:236.17px;height:46.23px;overflow:hidden;"><div class="t" style="top:7.68px;font-size:33.17px;line-height:37.05px;color:#000;left:-2770.83px;width:3000px;text-align:right;transform-origin:100% 0;transform:scaleX(0.9768);">1/1/2018</div></div><div class="a" style="left:0.00px;top:283.38px;width:236.17px;height:46.24px;overflow:hidden;"><div class="t" style="top:7.68px;font-size:33.17px;line-height:37.05px;color:#000;left:-2772.03px;width:3000px;text-align:right;transform-origin:100% 0;transform:scaleX(0.9346);">20</div></div><div class="a" style="left:236.17px;top:283.38px;width:236.17px;height:46.24px;overflow:hidden;"><div class="t" style="top:7.20px;font-size:33.71px;line-height:37.65px;color:#000;left:4.60px;transform-origin:0 0;transform:scaleX(0.9850);">Write-Down</div></div><div class="a" style="left:472.34px;top:283.38px;width:236.17px;height:46.24px;overflow:hidden;"><div class="t" style="top:7.68px;font-size:33.17px;line-height:37.05px;color:#000;left:-2770.53px;width:3000px;text-align:right;transform-origin:100% 0;transform:scaleX(0.9346);">0.00</div></div><div class="a" style="left:708.51px;top:283.38px;width:236.17px;height:46.24px;overflow:hidden;"><div class="t" style="top:7.68px;font-size:33.17px;line-height:37.05px;color:#000;left:-2770.53px;width:3000px;text-align:right;transform-origin:100% 0;transform:scaleX(0.9346);">0.00</div></div><div class="a" style="left:944.68px;top:283.38px;width:236.17px;height:46.24px;overflow:hidden;"><div class="t" style="top:7.68px;font-size:33.17px;line-height:37.05px;color:#000;left:-2770.83px;width:3000px;text-align:right;transform-origin:100% 0;transform:scaleX(0.9346);">0.00</div></div><div class="a" style="left:1180.85px;top:283.38px;width:236.17px;height:46.24px;overflow:hidden;"><div class="t" style="top:8.17px;font-size:32.64px;line-height:36.45px;color:#000;left:7.00px;transform-origin:0 0;transform:scaleX(0.9346);">FA000010</div></div><div class="a" style="left:1417.02px;top:283.38px;width:236.17px;height:46.24px;overflow:hidden;"><div class="t" style="top:6.91px;font-size:34.03px;line-height:38.01px;color:#000;left:6.70px;transform-origin:0 0;transform:scaleX(0.9346);">Mercedes 300</div></div><div class="a" style="left:1653.19px;top:283.38px;width:236.17px;height:46.24px;overflow:hidden;"><div class="t" style="top:9.33px;font-size:31.35px;line-height:35.02px;color:#000;left:6.00px;transform-origin:0 0;transform:scaleX(0.9282);">TANGIBLE</div></div><div class="a" style="left:1889.36px;top:283.38px;width:236.17px;height:46.24px;overflow:hidden;"><div class="t" style="top:9.33px;font-size:31.35px;line-height:35.02px;color:#000;left:6.50px;transform-origin:0 0;transform:scaleX(0.9059);">CAR</div></div><div class="a" style="left:2125.53px;top:283.38px;width:236.17px;height:46.24px;overflow:hidden;"><div class="t" style="top:9.33px;font-size:31.35px;line-height:35.02px;color:#000;left:6.50px;transform-origin:0 0;transform:scaleX(1.0526);">ADM</div></div><div class="a" style="left:2361.70px;top:283.38px;width:236.17px;height:46.24px;overflow:hidden;"><div class="t" style="top:9.33px;font-size:31.35px;line-height:35.02px;color:#000;left:-1381.91px;width:3000px;text-align:center;transform-origin:50% 0;transform:scaleX(0.8548);">FALSE</div></div><div class="a" style="left:2597.87px;top:283.38px;width:236.17px;height:46.24px;overflow:hidden;"><div class="t" style="top:7.68px;font-size:33.17px;line-height:37.05px;color:#000;left:-2770.83px;width:3000px;text-align:right;transform-origin:100% 0;transform:scaleX(0.9768);">1/1/2018</div></div><div class="a" style="left:0.00px;top:330.63px;width:236.17px;height:46.24px;overflow:hidden;"><div class="t" style="top:7.68px;font-size:33.17px;line-height:37.05px;color:#000;left:-2772.03px;width:3000px;text-align:right;transform-origin:100% 0;transform:scaleX(0.9346);">21</div></div><div class="a" style="left:236.17px;top:330.63px;width:236.17px;height:46.24px;overflow:hidden;"><div class="t" style="top:7.20px;font-size:33.71px;line-height:37.65px;color:#000;left:4.60px;transform-origin:0 0;transform:scaleX(0.9850);">Appreciation</div></div><div class="a" style="left:472.34px;top:330.63px;width:236.17px;height:46.24px;overflow:hidden;"><div class="t" style="top:7.68px;font-size:33.17px;line-height:37.05px;color:#000;left:-2770.53px;width:3000px;text-align:right;transform-origin:100% 0;transform:scaleX(0.9346);">0.00</div></div><div class="a" style="left:708.51px;top:330.63px;width:236.17px;height:46.24px;overflow:hidden;"><div class="t" style="top:7.68px;font-size:33.17px;line-height:37.05px;color:#000;left:-2770.53px;width:3000px;text-align:right;transform-origin:100% 0;transform:scaleX(0.9346);">0.00</div></div><div class="a" style="left:944.68px;top:330.63px;width:236.17px;height:46.24px;overflow:hidden;"><div class="t" style="top:7.68px;font-size:33.17px;line-height:37.05px;color:#000;left:-2770.83px;width:3000px;text-align:right;transform-origin:100% 0;transform:scaleX(0.9346);">0.00</div></div><div class="a" style="left:1180.85px;top:330.63px;width:236.17px;height:46.24px;overflow:hidden;"><div class="t" style="top:8.17px;font-size:32.64px;line-height:36.45px;color:#000;left:7.00px;transform-origin:0 0;transform:scaleX(0.9346);">FA000010</div></div><div class="a" style="left:1417.02px;top:330.63px;width:236.17px;height:46.24px;overflow:hidden;"><div class="t" style="top:6.91px;font-size:34.03px;line-height:38.01px;color:#000;left:6.70px;transform-origin:0 0;transform:scaleX(0.9346);">Mercedes 300</div></div><div class="a" style="left:1653.19px;top:330.63px;width:236.17px;height:46.24px;overflow:hidden;"><div class="t" style="top:9.33px;font-size:31.35px;line-height:35.02px;color:#000;left:6.00px;transform-origin:0 0;transform:scaleX(0.9282);">TANGIBLE</div></div><div class="a" style="left:1889.36px;top:330.63px;width:236.17px;height:46.24px;overflow:hidden;"><div class="t" style="top:9.33px;font-size:31.35px;line-height:35.02px;color:#000;left:6.50px;transform-origin:0 0;transform:scaleX(0.9059);">CAR</div></div><div class="a" style="left:2125.53px;top:330.63px;width:236.17px;height:46.24px;overflow:hidden;"><div class="t" style="top:9.33px;font-size:31.35px;line-height:35.02px;color:#000;left:6.50px;transform-origin:0 0;transform:scaleX(1.0526);">ADM</div></div><div class="a" style="left:2361.70px;top:330.63px;width:236.17px;height:46.24px;overflow:hidden;"><div class="t" style="top:9.33px;font-size:31.35px;line-height:35.02px;color:#000;left:-1381.91px;width:3000px;text-align:center;transform-origin:50% 0;transform:scaleX(0.8548);">FALSE</div></div><div class="a" style="left:2597.87px;top:330.63px;width:236.17px;height:46.24px;overflow:hidden;"><div class="t" style="top:7.68px;font-size:33.17px;line-height:37.05px;color:#000;left:-2770.83px;width:3000px;text-align:right;transform-origin:100% 0;transform:scaleX(0.9768);">1/1/2018</div></div><div class="a" style="left:0.00px;top:377.89px;width:236.17px;height:46.24px;overflow:hidden;"><div class="t" style="top:7.68px;font-size:33.17px;line-height:37.05px;color:#000;left:-2772.03px;width:3000px;text-align:right;transform-origin:100% 0;transform:scaleX(0.9346);">22</div></div><div class="a" style="left:236.17px;top:377.89px;width:236.17px;height:46.24px;overflow:hidden;"><div class="t" style="top:7.20px;font-size:33.71px;line-height:37.65px;color:#000;left:4.60px;transform-origin:0 0;transform:scaleX(0.9850);">Custom 1</div></div><div class="a" style="left:472.34px;top:377.89px;width:236.17px;height:46.24px;overflow:hidden;"><div class="t" style="top:7.68px;font-size:33.17px;line-height:37.05px;color:#000;left:-2770.53px;width:3000px;text-align:right;transform-origin:100% 0;transform:scaleX(0.9346);">0.00</div></div><div class="a" style="left:708.51px;top:377.89px;width:236.17px;height:46.24px;overflow:hidden;"><div class="t" style="top:7.68px;font-size:33.17px;line-height:37.05px;color:#000;left:-2770.53px;width:3000px;text-align:right;transform-origin:100% 0;transform:scaleX(0.9346);">0.00</div></div><div class="a" style="left:944.68px;top:377.89px;width:236.17px;height:46.24px;overflow:hidden;"><div class="t" style="top:7.68px;font-size:33.17px;line-height:37.05px;color:#000;left:-2770.83px;width:3000px;text-align:right;transform-origin:100% 0;transform:scaleX(0.9346);">0.00</div></div><div class="a" style="left:1180.85px;top:377.89px;width:236.17px;height:46.24px;overflow:hidden;"><div class="t" style="top:8.17px;font-size:32.64px;line-height:36.45px;color:#000;left:7.00px;transform-origin:0 0;transform:scaleX(0.9346);">FA000010</div></div><div class="a" style="left:1417.02px;top:377.89px;width:236.17px;height:46.24px;overflow:hidden;"><div class="t" style="top:6.91px;font-size:34.03px;line-height:38.01px;color:#000;left:6.70px;transform-origin:0 0;transform:scaleX(0.9346);">Mercedes 300</div></div><div class="a" style="left:1653.19px;top:377.89px;width:236.17px;height:46.24px;overflow:hidden;"><div class="t" style="top:9.33px;font-size:31.35px;line-height:35.02px;color:#000;left:6.00px;transform-origin:0 0;transform:scaleX(0.9282);">TANGIBLE</div></div><div class="a" style="left:1889.36px;top:377.89px;width:236.17px;height:46.24px;overflow:hidden;"><div class="t" style="top:9.33px;font-size:31.35px;line-height:35.02px;color:#000;left:6.50px;transform-origin:0 0;transform:scaleX(0.9059);">CAR</div></div><div class="a" style="left:2125.53px;top:377.89px;width:236.17px;height:46.24px;overflow:hidden;"><div class="t" style="top:9.33px;font-size:31.35px;line-height:35.02px;color:#000;left:6.50px;transform-origin:0 0;transform:scaleX(1.0526);">ADM</div></div><div class="a" style="left:2361.70px;top:377.89px;width:236.17px;height:46.24px;overflow:hidden;"><div class="t" style="top:9.33px;font-size:31.35px;line-height:35.02px;color:#000;left:-1381.91px;width:3000px;text-align:center;transform-origin:50% 0;transform:scaleX(0.8548);">FALSE</div></div><div class="a" style="left:2597.87px;top:377.89px;width:236.17px;height:46.24px;overflow:hidden;"><div class="t" style="top:7.68px;font-size:33.17px;line-height:37.05px;color:#000;left:-2770.83px;width:3000px;text-align:right;transform-origin:100% 0;transform:scaleX(0.9768);">1/1/2018</div></div><div class="a" style="left:0.00px;top:425.14px;width:236.17px;height:46.24px;overflow:hidden;"><div class="t" style="top:7.68px;font-size:33.17px;line-height:37.05px;color:#000;left:-2772.03px;width:3000px;text-align:right;transform-origin:100% 0;transform:scaleX(0.9346);">23</div></div><div class="a" style="left:236.17px;top:425.14px;width:236.17px;height:46.24px;overflow:hidden;"><div class="t" style="top:7.20px;font-size:33.71px;line-height:37.65px;color:#000;left:4.60px;transform-origin:0 0;transform:scaleX(0.9850);">Custom 2</div></div><div class="a" style="left:472.34px;top:425.14px;width:236.17px;height:46.24px;overflow:hidden;"><div class="t" style="top:7.68px;font-size:33.17px;line-height:37.05px;color:#000;left:-2770.53px;width:3000px;text-align:right;transform-origin:100% 0;transform:scaleX(0.9346);">0.00</div></div><div class="a" style="left:708.51px;top:425.14px;width:236.17px;height:46.24px;overflow:hidden;"><div class="t" style="top:7.68px;font-size:33.17px;line-height:37.05px;color:#000;left:-2770.53px;width:3000px;text-align:right;transform-origin:100% 0;transform:scaleX(0.9346);">0.00</div></div><div class="a" style="left:944.68px;top:425.14px;width:236.17px;height:46.24px;overflow:hidden;"><div class="t" style="top:7.68px;font-size:33.17px;line-height:37.05px;color:#000;left:-2770.83px;width:3000px;text-align:right;transform-origin:100% 0;transform:scaleX(0.9346);">0.00</div></div><div class="a" style="left:1180.85px;top:425.14px;width:236.17px;height:46.24px;overflow:hidden;"><div class="t" style="top:8.17px;font-size:32.64px;line-height:36.45px;color:#000;left:7.00px;transform-origin:0 0;transform:scaleX(0.9346);">FA000010</div></div><div class="a" style="left:1417.02px;top:425.14px;width:236.17px;height:46.24px;overflow:hidden;"><div class="t" style="top:6.91px;font-size:34.03px;line-height:38.01px;color:#000;left:6.70px;transform-origin:0 0;transform:scaleX(0.9346);">Mercedes 300</div></div><div class="a" style="left:1653.19px;top:425.14px;width:236.17px;height:46.24px;overflow:hidden;"><div class="t" style="top:9.33px;font-size:31.35px;line-height:35.02px;color:#000;left:6.00px;transform-origin:0 0;transform:scaleX(0.9282);">TANGIBLE</div></div><div class="a" style="left:1889.36px;top:425.14px;width:236.17px;height:46.24px;overflow:hidden;"><div class="t" style="top:9.33px;font-size:31.35px;line-height:35.02px;color:#000;left:6.50px;transform-origin:0 0;transform:scaleX(0.9059);">CAR</div></div><div class="a" style="left:2125.53px;top:425.14px;width:236.17px;height:46.24px;overflow:hidden;"><div class="t" style="top:9.33px;font-size:31.35px;line-height:35.02px;color:#000;left:6.50px;transform-origin:0 0;transform:scaleX(1.0526);">ADM</div></div><div class="a" style="left:2361.70px;top:425.14px;width:236.17px;height:46.24px;overflow:hidden;"><div class="t" style="top:9.33px;font-size:31.35px;line-height:35.02px;color:#000;left:-1381.91px;width:3000px;text-align:center;transform-origin:50% 0;transform:scaleX(0.8548);">FALSE</div></div><div class="a" style="left:2597.87px;top:425.14px;width:236.17px;height:46.24px;overflow:hidden;"><div class="t" style="top:7.68px;font-size:33.17px;line-height:37.05px;color:#000;left:-2770.83px;width:3000px;text-align:right;transform-origin:100% 0;transform:scaleX(0.9768);">1/1/2018</div></div><div class="a" style="left:0.00px;top:472.40px;width:236.17px;height:46.24px;overflow:hidden;"><div class="t" style="top:7.68px;font-size:33.17px;line-height:37.05px;color:#000;left:-2772.03px;width:3000px;text-align:right;transform-origin:100% 0;transform:scaleX(0.9346);">24</div></div><div class="a" style="left:236.17px;top:472.40px;width:236.17px;height:46.24px;overflow:hidden;"><div class="t" style="top:7.20px;font-size:33.71px;line-height:37.65px;color:#000;left:4.60px;transform-origin:0 0;transform:scaleX(0.9850);">Depreciable Basis</div></div><div class="a" style="left:472.34px;top:472.40px;width:236.17px;height:46.24px;overflow:hidden;"><div class="t" style="top:7.68px;font-size:33.17px;line-height:37.05px;color:#000;left:-2770.53px;width:3000px;text-align:right;transform-origin:100% 0;transform:scaleX(0.9346);">46,032.88</div></div><div class="a" style="left:708.51px;top:472.40px;width:236.17px;height:46.24px;overflow:hidden;"><div class="t" style="top:7.68px;font-size:33.17px;line-height:37.05px;color:#000;left:-2770.53px;width:3000px;text-align:right;transform-origin:100% 0;transform:scaleX(0.9346);">46,032.88</div></div><div class="a" style="left:944.68px;top:472.40px;width:236.17px;height:46.24px;overflow:hidden;"><div class="t" style="top:7.68px;font-size:33.17px;line-height:37.05px;color:#000;left:-2770.83px;width:3000px;text-align:right;transform-origin:100% 0;transform:scaleX(0.9346);">0.00</div></div><div class="a" style="left:1180.85px;top:472.40px;width:236.17px;height:46.24px;overflow:hidden;"><div class="t" style="top:8.17px;font-size:32.64px;line-height:36.45px;color:#000;left:7.00px;transform-origin:0 0;transform:scaleX(0.9346);">FA000010</div></div><div class="a" style="left:1417.02px;top:472.40px;width:236.17px;height:46.24px;overflow:hidden;"><div class="t" style="top:6.91px;font-size:34.03px;line-height:38.01px;color:#000;left:6.70px;transform-origin:0 0;transform:scaleX(0.9346);">Mercedes 300</div></div><div class="a" style="left:1653.19px;top:472.40px;width:236.17px;height:46.24px;overflow:hidden;"><div class="t" style="top:9.33px;font-size:31.35px;line-height:35.02px;color:#000;left:6.00px;transform-origin:0 0;transform:scaleX(0.9282);">TANGIBLE</div></div><div class="a" style="left:1889.36px;top:472.40px;width:236.17px;height:46.24px;overflow:hidden;"><div class="t" style="top:9.33px;font-size:31.35px;line-height:35.02px;color:#000;left:6.50px;transform-origin:0 0;transform:scaleX(0.9059);">CAR</div></div><div class="a" style="left:2125.53px;top:472.40px;width:236.17px;height:46.24px;overflow:hidden;"><div class="t" style="top:9.33px;font-size:31.35px;line-height:35.02px;color:#000;left:6.50px;transform-origin:0 0;transform:scaleX(1.0526);">ADM</div></div><div class="a" style="left:2361.70px;top:472.40px;width:236.17px;height:46.24px;overflow:hidden;"><div class="t" style="top:9.33px;font-size:31.35px;line-height:35.02px;color:#000;left:-1381.91px;width:3000px;text-align:center;transform-origin:50% 0;transform:scaleX(0.8548);">FALSE</div></div><div class="a" style="left:2597.87px;top:472.40px;width:236.17px;height:46.24px;overflow:hidden;"><div class="t" style="top:7.68px;font-size:33.17px;line-height:37.05px;color:#000;left:-2770.83px;width:3000px;text-align:right;transform-origin:100% 0;transform:scaleX(0.9768);">1/1/2018</div></div><div class="a" style="left:0.00px;top:519.65px;width:236.17px;height:46.24px;overflow:hidden;"><div class="t" style="top:7.68px;font-size:33.17px;line-height:37.05px;color:#000;left:-2772.03px;width:3000px;text-align:right;transform-origin:100% 0;transform:scaleX(0.9346);">25</div></div><div class="a" style="left:236.17px;top:519.65px;width:236.17px;height:46.24px;overflow:hidden;"><div class="t" style="top:7.20px;font-size:33.71px;line-height:37.65px;color:#000;left:4.60px;transform-origin:0 0;transform:scaleX(0.9850);">Salvage Value</div></div><div class="a" style="left:472.34px;top:519.65px;width:236.17px;height:46.24px;overflow:hidden;"><div class="t" style="top:7.68px;font-size:33.17px;line-height:37.05px;color:#000;left:-2770.53px;width:3000px;text-align:right;transform-origin:100% 0;transform:scaleX(0.9346);">0.00</div></div><div class="a" style="left:708.51px;top:519.65px;width:236.17px;height:46.24px;overflow:hidden;"><div class="t" style="top:7.68px;font-size:33.17px;line-height:37.05px;color:#000;left:-2770.53px;width:3000px;text-align:right;transform-origin:100% 0;transform:scaleX(0.9346);">0.00</div></div><div class="a" style="left:944.68px;top:519.65px;width:236.17px;height:46.24px;overflow:hidden;"><div class="t" style="top:7.68px;font-size:33.17px;line-height:37.05px;color:#000;left:-2770.83px;width:3000px;text-align:right;transform-origin:100% 0;transform:scaleX(0.9346);">0.00</div></div><div class="a" style="left:1180.85px;top:519.65px;width:236.17px;height:46.24px;overflow:hidden;"><div class="t" style="top:8.17px;font-size:32.64px;line-height:36.45px;color:#000;left:7.00px;transform-origin:0 0;transform:scaleX(0.9346);">FA000010</div></div><div class="a" style="left:1417.02px;top:519.65px;width:236.17px;height:46.24px;overflow:hidden;"><div class="t" style="top:6.91px;font-size:34.03px;line-height:38.01px;color:#000;left:6.70px;transform-origin:0 0;transform:scaleX(0.9346);">Mercedes 300</div></div><div class="a" style="left:1653.19px;top:519.65px;width:236.17px;height:46.24px;overflow:hidden;"><div class="t" style="top:9.33px;font-size:31.35px;line-height:35.02px;color:#000;left:6.00px;transform-origin:0 0;transform:scaleX(0.9282);">TANGIBLE</div></div><div class="a" style="left:1889.36px;top:519.65px;width:236.17px;height:46.24px;overflow:hidden;"><div class="t" style="top:9.33px;font-size:31.35px;line-height:35.02px;color:#000;left:6.50px;transform-origin:0 0;transform:scaleX(0.9059);">CAR</div></div><div class="a" style="left:2125.53px;top:519.65px;width:236.17px;height:46.24px;overflow:hidden;"><div class="t" style="top:9.33px;font-size:31.35px;line-height:35.02px;color:#000;left:6.50px;transform-origin:0 0;transform:scaleX(1.0526);">ADM</div></div><div class="a" style="left:2361.70px;top:519.65px;width:236.17px;height:46.24px;overflow:hidden;"><div class="t" style="top:9.33px;font-size:31.35px;line-height:35.02px;color:#000;left:-1381.91px;width:3000px;text-align:center;transform-origin:50% 0;transform:scaleX(0.8548);">FALSE</div></div><div class="a" style="left:2597.87px;top:519.65px;width:236.17px;height:46.24px;overflow:hidden;"><div class="t" style="top:7.68px;font-size:33.17px;line-height:37.05px;color:#000;left:-2770.83px;width:3000px;text-align:right;transform-origin:100% 0;transform:scaleX(0.9768);">1/1/2018</div></div><div class="a" style="left:0.00px;top:566.91px;width:236.17px;height:46.24px;overflow:hidden;"><div class="t" style="top:7.68px;font-size:33.17px;line-height:37.05px;color:#000;left:-2772.03px;width:3000px;text-align:right;transform-origin:100% 0;transform:scaleX(0.9346);">15</div></div><div class="a" style="left:236.17px;top:566.91px;width:236.17px;height:46.24px;overflow:hidden;"><div class="t" style="top:7.20px;font-size:33.71px;line-height:37.65px;color:#000;left:4.60px;transform-origin:0 0;transform:scaleX(0.9850);">Acquisition Cost</div></div><div class="a" style="left:472.34px;top:566.91px;width:236.17px;height:46.24px;overflow:hidden;"><div class="t" style="top:7.68px;font-size:33.17px;line-height:37.05px;color:#000;left:-2770.53px;width:3000px;text-align:right;transform-origin:100% 0;transform:scaleX(0.9346);">64,726.03</div></div><div class="a" style="left:708.51px;top:566.91px;width:236.17px;height:46.24px;overflow:hidden;"><div class="t" style="top:7.68px;font-size:33.17px;line-height:37.05px;color:#000;left:-2770.53px;width:3000px;text-align:right;transform-origin:100% 0;transform:scaleX(0.9346);">64,726.03</div></div><div class="a" style="left:944.68px;top:566.91px;width:236.17px;height:46.24px;overflow:hidden;"><div class="t" style="top:7.68px;font-size:33.17px;line-height:37.05px;color:#000;left:-2770.83px;width:3000px;text-align:right;transform-origin:100% 0;transform:scaleX(0.9346);">0.00</div></div><div class="a" style="left:1180.85px;top:566.91px;width:236.17px;height:46.24px;overflow:hidden;"><div class="t" style="top:8.17px;font-size:32.64px;line-height:36.45px;color:#000;left:7.00px;transform-origin:0 0;transform:scaleX(0.9346);">FA000020</div></div><div class="a" style="left:1417.02px;top:566.91px;width:236.17px;height:46.24px;overflow:hidden;"><div class="t" style="top:6.91px;font-size:34.03px;line-height:38.01px;color:#000;left:6.70px;transform-origin:0 0;transform:scaleX(0.9346);">Toyota Supra 3.0</div></div><div class="a" style="left:1653.19px;top:566.91px;width:236.17px;height:46.24px;overflow:hidden;"><div class="t" style="top:9.33px;font-size:31.35px;line-height:35.02px;color:#000;left:6.00px;transform-origin:0 0;transform:scaleX(0.9282);">TANGIBLE</div></div><div class="a" style="left:1889.36px;top:566.91px;width:236.17px;height:46.24px;overflow:hidden;"><div class="t" style="top:9.33px;font-size:31.35px;line-height:35.02px;color:#000;left:6.50px;transform-origin:0 0;transform:scaleX(0.9059);">CAR</div></div><div class="a" style="left:2125.53px;top:566.91px;width:236.17px;height:46.24px;overflow:hidden;"><div class="t" style="top:9.33px;font-size:31.35px;line-height:35.02px;color:#000;left:6.50px;transform-origin:0 0;transform:scaleX(0.8740);">SALES</div></div><div class="a" style="left:2361.70px;top:566.91px;width:236.17px;height:46.24px;overflow:hidden;"><div class="t" style="top:9.33px;font-size:31.35px;line-height:35.02px;color:#000;left:-1381.91px;width:3000px;text-align:center;transform-origin:50% 0;transform:scaleX(0.8548);">FALSE</div></div><div class="a" style="left:2597.87px;top:566.91px;width:236.17px;height:46.24px;overflow:hidden;"><div class="t" style="top:7.68px;font-size:33.17px;line-height:37.05px;color:#000;left:-2770.83px;width:3000px;text-align:right;transform-origin:100% 0;transform:scaleX(0.9768);">5/1/2018</div></div><div class="a" style="left:0.00px;top:614.16px;width:236.17px;height:46.24px;overflow:hidden;"><div class="t" style="top:7.68px;font-size:33.17px;line-height:37.05px;color:#000;left:-2772.03px;width:3000px;text-align:right;transform-origin:100% 0;transform:scaleX(0.9346);">16</div></div><div class="a" style="left:236.17px;top:614.16px;width:236.17px;height:46.24px;overflow:hidden;"><div class="t" style="top:7.20px;font-size:33.71px;line-height:37.65px;color:#000;left:4.60px;transform-origin:0 0;transform:scaleX(0.9850);">Depreciation</div></div><div class="a" style="left:472.34px;top:614.16px;width:236.17px;height:46.24px;overflow:hidden;"><div class="t" style="top:7.68px;font-size:33.17px;line-height:37.05px;color:#000;left:-2770.53px;width:3000px;text-align:right;transform-origin:100% 0;transform:scaleX(0.9346);">-8,632.00</div></div><div class="a" style="left:708.51px;top:614.16px;width:236.17px;height:46.24px;overflow:hidden;"><div class="t" style="top:7.68px;font-size:33.17px;line-height:37.05px;color:#000;left:-2770.53px;width:3000px;text-align:right;transform-origin:100% 0;transform:scaleX(0.9346);">-8,632.00</div></div><div class="a" style="left:944.68px;top:614.16px;width:236.17px;height:46.24px;overflow:hidden;"><div class="t" style="top:7.68px;font-size:33.17px;line-height:37.05px;color:#000;left:-2770.83px;width:3000px;text-align:right;transform-origin:100% 0;transform:scaleX(0.9346);">0.00</div></div><div class="a" style="left:1180.85px;top:614.16px;width:236.17px;height:46.24px;overflow:hidden;"><div class="t" style="top:8.17px;font-size:32.64px;line-height:36.45px;color:#000;left:7.00px;transform-origin:0 0;transform:scaleX(0.9346);">FA000020</div></div><div class="a" style="left:1417.02px;top:614.16px;width:236.17px;height:46.24px;overflow:hidden;"><div class="t" style="top:6.91px;font-size:34.03px;line-height:38.01px;color:#000;left:6.70px;transform-origin:0 0;transform:scaleX(0.9346);">Toyota Supra 3.0</div></div><div class="a" style="left:1653.19px;top:614.16px;width:236.17px;height:46.24px;overflow:hidden;"><div class="t" style="top:9.33px;font-size:31.35px;line-height:35.02px;color:#000;left:6.00px;transform-origin:0 0;transform:scaleX(0.9282);">TANGIBLE</div></div><div class="a" style="left:1889.36px;top:614.16px;width:236.17px;height:46.24px;overflow:hidden;"><div class="t" style="top:9.33px;font-size:31.35px;line-height:35.02px;color:#000;left:6.50px;transform-origin:0 0;transform:scaleX(0.9059);">CAR</div></div><div class="a" style="left:2125.53px;top:614.16px;width:236.17px;height:46.24px;overflow:hidden;"><div class="t" style="top:9.33px;font-size:31.35px;line-height:35.02px;color:#000;left:6.50px;transform-origin:0 0;transform:scaleX(0.8740);">SALES</div></div><div class="a" style="left:2361.70px;top:614.16px;width:236.17px;height:46.24px;overflow:hidden;"><div class="t" style="top:9.33px;font-size:31.35px;line-height:35.02px;color:#000;left:-1381.91px;width:3000px;text-align:center;transform-origin:50% 0;transform:scaleX(0.8548);">FALSE</div></div><div class="a" style="left:2597.87px;top:614.16px;width:236.17px;height:46.24px;overflow:hidden;"><div class="t" style="top:7.68px;font-size:33.17px;line-height:37.05px;color:#000;left:-2770.83px;width:3000px;text-align:right;transform-origin:100% 0;transform:scaleX(0.9768);">5/1/2018</div></div><div class="a" style="left:0.00px;top:661.42px;width:236.17px;height:46.24px;overflow:hidden;"><div class="t" style="top:7.68px;font-size:33.17px;line-height:37.05px;color:#000;left:-2772.03px;width:3000px;text-align:right;transform-origin:100% 0;transform:scaleX(0.9346);">17</div></div><div class="a" style="left:236.17px;top:661.42px;width:236.17px;height:46.24px;overflow:hidden;"><div class="t" style="top:7.20px;font-size:33.71px;line-height:37.65px;color:#000;left:4.60px;transform-origin:0 0;transform:scaleX(0.9850);">Book Value</div></div><div class="a" style="left:472.34px;top:661.42px;width:236.17px;height:46.24px;overflow:hidden;"><div class="t" style="top:7.68px;font-size:33.17px;line-height:37.05px;color:#000;left:-2770.53px;width:3000px;text-align:right;transform-origin:100% 0;transform:scaleX(0.9346);">56,094.03</div></div><div class="a" style="left:708.51px;top:661.42px;width:236.17px;height:46.24px;overflow:hidden;"><div class="t" style="top:7.68px;font-size:33.17px;line-height:37.05px;color:#000;left:-2770.53px;width:3000px;text-align:right;transform-origin:100% 0;transform:scaleX(0.9346);">56,094.03</div></div><div class="a" style="left:944.68px;top:661.42px;width:236.17px;height:46.24px;overflow:hidden;"><div class="t" style="top:7.68px;font-size:33.17px;line-height:37.05px;color:#000;left:-2770.83px;width:3000px;text-align:right;transform-origin:100% 0;transform:scaleX(0.9346);">0.00</div></div><div class="a" style="left:1180.85px;top:661.42px;width:236.17px;height:46.24px;overflow:hidden;"><div class="t" style="top:8.17px;font-size:32.64px;line-height:36.45px;color:#000;left:7.00px;transform-origin:0 0;transform:scaleX(0.9346);">FA000020</div></div><div class="a" style="left:1417.02px;top:661.42px;width:236.17px;height:46.24px;overflow:hidden;"><div class="t" style="top:6.91px;font-size:34.03px;line-height:38.01px;color:#000;left:6.70px;transform-origin:0 0;transform:scaleX(0.9346);">Toyota Supra 3.0</div></div><div class="a" style="left:1653.19px;top:661.42px;width:236.17px;height:46.24px;overflow:hidden;"><div class="t" style="top:9.33px;font-size:31.35px;line-height:35.02px;color:#000;left:6.00px;transform-origin:0 0;transform:scaleX(0.9282);">TANGIBLE</div></div><div class="a" style="left:1889.36px;top:661.42px;width:236.17px;height:46.24px;overflow:hidden;"><div class="t" style="top:9.33px;font-size:31.35px;line-height:35.02px;color:#000;left:6.50px;transform-origin:0 0;transform:scaleX(0.9059);">CAR</div></div><div class="a" style="left:2125.53px;top:661.42px;width:236.17px;height:46.24px;overflow:hidden;"><div class="t" style="top:9.33px;font-size:31.35px;line-height:35.02px;color:#000;left:6.50px;transform-origin:0 0;transform:scaleX(0.8740);">SALES</div></div><div class="a" style="left:2361.70px;top:661.42px;width:236.17px;height:46.24px;overflow:hidden;"><div class="t" style="top:9.33px;font-size:31.35px;line-height:35.02px;color:#000;left:-1381.91px;width:3000px;text-align:center;transform-origin:50% 0;transform:scaleX(0.8548);">FALSE</div></div><div class="a" style="left:2597.87px;top:661.42px;width:236.17px;height:46.24px;overflow:hidden;"><div class="t" style="top:7.68px;font-size:33.17px;line-height:37.05px;color:#000;left:-2770.83px;width:3000px;text-align:right;transform-origin:100% 0;transform:scaleX(0.9768);">5/1/2018</div></div><div class="a" style="left:0.00px;top:708.67px;width:236.17px;height:46.24px;overflow:hidden;"><div class="t" style="top:7.68px;font-size:33.17px;line-height:37.05px;color:#000;left:-2772.03px;width:3000px;text-align:right;transform-origin:100% 0;transform:scaleX(0.9346);">18</div></div><div class="a" style="left:236.17px;top:708.67px;width:236.17px;height:46.24px;overflow:hidden;"><div class="t" style="top:7.20px;font-size:33.71px;line-height:37.65px;color:#000;left:4.60px;transform-origin:0 0;transform:scaleX(0.9850);">Proceeds on Disposal</div></div><div class="a" style="left:472.34px;top:708.67px;width:236.17px;height:46.24px;overflow:hidden;"><div class="t" style="top:7.68px;font-size:33.17px;line-height:37.05px;color:#000;left:-2770.53px;width:3000px;text-align:right;transform-origin:100% 0;transform:scaleX(0.9346);">0.00</div></div><div class="a" style="left:708.51px;top:708.67px;width:236.17px;height:46.24px;overflow:hidden;"><div class="t" style="top:7.68px;font-size:33.17px;line-height:37.05px;color:#000;left:-2770.53px;width:3000px;text-align:right;transform-origin:100% 0;transform:scaleX(0.9346);">0.00</div></div><div class="a" style="left:944.68px;top:708.67px;width:236.17px;height:46.24px;overflow:hidden;"><div class="t" style="top:7.68px;font-size:33.17px;line-height:37.05px;color:#000;left:-2770.83px;width:3000px;text-align:right;transform-origin:100% 0;transform:scaleX(0.9346);">0.00</div></div><div class="a" style="left:1180.85px;top:708.67px;width:236.17px;height:46.24px;overflow:hidden;"><div class="t" style="top:8.17px;font-size:32.64px;line-height:36.45px;color:#000;left:7.00px;transform-origin:0 0;transform:scaleX(0.9346);">FA000020</div></div><div class="a" style="left:1417.02px;top:708.67px;width:236.17px;height:46.24px;overflow:hidden;"><div class="t" style="top:6.91px;font-size:34.03px;line-height:38.01px;color:#000;left:6.70px;transform-origin:0 0;transform:scaleX(0.9346);">Toyota Supra 3.0</div></div><div class="a" style="left:1653.19px;top:708.67px;width:236.17px;height:46.24px;overflow:hidden;"><div class="t" style="top:9.33px;font-size:31.35px;line-height:35.02px;color:#000;left:6.00px;transform-origin:0 0;transform:scaleX(0.9282);">TANGIBLE</div></div><div class="a" style="left:1889.36px;top:708.67px;width:236.17px;height:46.24px;overflow:hidden;"><div class="t" style="top:9.33px;font-size:31.35px;line-height:35.02px;color:#000;left:6.50px;transform-origin:0 0;transform:scaleX(0.9059);">CAR</div></div><div class="a" style="left:2125.53px;top:708.67px;width:236.17px;height:46.24px;overflow:hidden;"><div class="t" style="top:9.33px;font-size:31.35px;line-height:35.02px;color:#000;left:6.50px;transform-origin:0 0;transform:scaleX(0.8740);">SALES</div></div><div class="a" style="left:2361.70px;top:708.67px;width:236.17px;height:46.24px;overflow:hidden;"><div class="t" style="top:9.33px;font-size:31.35px;line-height:35.02px;color:#000;left:-1381.91px;width:3000px;text-align:center;transform-origin:50% 0;transform:scaleX(0.8548);">FALSE</div></div><div class="a" style="left:2597.87px;top:708.67px;width:236.17px;height:46.24px;overflow:hidden;"><div class="t" style="top:7.68px;font-size:33.17px;line-height:37.05px;color:#000;left:-2770.83px;width:3000px;text-align:right;transform-origin:100% 0;transform:scaleX(0.9768);">5/1/2018</div></div><div class="a" style="left:0.00px;top:755.93px;width:236.17px;height:46.24px;overflow:hidden;"><div class="t" style="top:7.68px;font-size:33.17px;line-height:37.05px;color:#000;left:-2772.03px;width:3000px;text-align:right;transform-origin:100% 0;transform:scaleX(0.9346);">19</div></div><div class="a" style="left:236.17px;top:755.93px;width:236.17px;height:46.24px;overflow:hidden;"><div class="t" style="top:7.20px;font-size:33.71px;line-height:37.65px;color:#000;left:4.60px;transform-origin:0 0;transform:scaleX(0.9850);">Gain/Loss</div></div><div class="a" style="left:472.34px;top:755.93px;width:236.17px;height:46.24px;overflow:hidden;"><div class="t" style="top:7.68px;font-size:33.17px;line-height:37.05px;color:#000;left:-2770.53px;width:3000px;text-align:right;transform-origin:100% 0;transform:scaleX(0.9346);">0.00</div></div><div class="a" style="left:708.51px;top:755.93px;width:236.17px;height:46.24px;overflow:hidden;"><div class="t" style="top:7.68px;font-size:33.17px;line-height:37.05px;color:#000;left:-2770.53px;width:3000px;text-align:right;transform-origin:100% 0;transform:scaleX(0.9346);">0.00</div></div><div class="a" style="left:944.68px;top:755.93px;width:236.17px;height:46.24px;overflow:hidden;"><div class="t" style="top:7.68px;font-size:33.17px;line-height:37.05px;color:#000;left:-2770.83px;width:3000px;text-align:right;transform-origin:100% 0;transform:scaleX(0.9346);">0.00</div></div><div class="a" style="left:1180.85px;top:755.93px;width:236.17px;height:46.24px;overflow:hidden;"><div class="t" style="top:8.17px;font-size:32.64px;line-height:36.45px;color:#000;left:7.00px;transform-origin:0 0;transform:scaleX(0.9346);">FA000020</div></div><div class="a" style="left:1417.02px;top:755.93px;width:236.17px;height:46.24px;overflow:hidden;"><div class="t" style="top:6.91px;font-size:34.03px;line-height:38.01px;color:#000;left:6.70px;transform-origin:0 0;transform:scaleX(0.9346);">Toyota Supra 3.0</div></div><div class="a" style="left:1653.19px;top:755.93px;width:236.17px;height:46.24px;overflow:hidden;"><div class="t" style="top:9.33px;font-size:31.35px;line-height:35.02px;color:#000;left:6.00px;transform-origin:0 0;transform:scaleX(0.9282);">TANGIBLE</div></div><div class="a" style="left:1889.36px;top:755.93px;width:236.17px;height:46.24px;overflow:hidden;"><div class="t" style="top:9.33px;font-size:31.35px;line-height:35.02px;color:#000;left:6.50px;transform-origin:0 0;transform:scaleX(0.9059);">CAR</div></div><div class="a" style="left:2125.53px;top:755.93px;width:236.17px;height:46.24px;overflow:hidden;"><div class="t" style="top:9.33px;font-size:31.35px;line-height:35.02px;color:#000;left:6.50px;transform-origin:0 0;transform:scaleX(0.8740);">SALES</div></div><div class="a" style="left:2361.70px;top:755.93px;width:236.17px;height:46.24px;overflow:hidden;"><div class="t" style="top:9.33px;font-size:31.35px;line-height:35.02px;color:#000;left:-1381.91px;width:3000px;text-align:center;transform-origin:50% 0;transform:scaleX(0.8548);">FALSE</div></div><div class="a" style="left:2597.87px;top:755.93px;width:236.17px;height:46.24px;overflow:hidden;"><div class="t" style="top:7.68px;font-size:33.17px;line-height:37.05px;color:#000;left:-2770.83px;width:3000px;text-align:right;transform-origin:100% 0;transform:scaleX(0.9768);">5/1/2018</div></div><div class="a" style="left:0.00px;top:803.18px;width:236.17px;height:46.24px;overflow:hidden;"><div class="t" style="top:7.68px;font-size:33.17px;line-height:37.05px;color:#000;left:-2772.03px;width:3000px;text-align:right;transform-origin:100% 0;transform:scaleX(0.9346);">20</div></div><div class="a" style="left:236.17px;top:803.18px;width:236.17px;height:46.24px;overflow:hidden;"><div class="t" style="top:7.20px;font-size:33.71px;line-height:37.65px;color:#000;left:4.60px;transform-origin:0 0;transform:scaleX(0.9850);">Write-Down</div></div><div class="a" style="left:472.34px;top:803.18px;width:236.17px;height:46.24px;overflow:hidden;"><div class="t" style="top:7.68px;font-size:33.17px;line-height:37.05px;color:#000;left:-2770.53px;width:3000px;text-align:right;transform-origin:100% 0;transform:scaleX(0.9346);">0.00</div></div><div class="a" style="left:708.51px;top:803.18px;width:236.17px;height:46.24px;overflow:hidden;"><div class="t" style="top:7.68px;font-size:33.17px;line-height:37.05px;color:#000;left:-2770.53px;width:3000px;text-align:right;transform-origin:100% 0;transform:scaleX(0.9346);">0.00</div></div><div class="a" style="left:944.68px;top:803.18px;width:236.17px;height:46.24px;overflow:hidden;"><div class="t" style="top:7.68px;font-size:33.17px;line-height:37.05px;color:#000;left:-2770.83px;width:3000px;text-align:right;transform-origin:100% 0;transform:scaleX(0.9346);">0.00</div></div><div class="a" style="left:1180.85px;top:803.18px;width:236.17px;height:46.24px;overflow:hidden;"><div class="t" style="top:8.17px;font-size:32.64px;line-height:36.45px;color:#000;left:7.00px;transform-origin:0 0;transform:scaleX(0.9346);">FA000020</div></div><div class="a" style="left:1417.02px;top:803.18px;width:236.17px;height:46.24px;overflow:hidden;"><div class="t" style="top:6.91px;font-size:34.03px;line-height:38.01px;color:#000;left:6.70px;transform-origin:0 0;transform:scaleX(0.9346);">Toyota Supra 3.0</div></div><div class="a" style="left:1653.19px;top:803.18px;width:236.17px;height:46.24px;overflow:hidden;"><div class="t" style="top:9.33px;font-size:31.35px;line-height:35.02px;color:#000;left:6.00px;transform-origin:0 0;transform:scaleX(0.9282);">TANGIBLE</div></div><div class="a" style="left:1889.36px;top:803.18px;width:236.17px;height:46.24px;overflow:hidden;"><div class="t" style="top:9.33px;font-size:31.35px;line-height:35.02px;color:#000;left:6.50px;transform-origin:0 0;transform:scaleX(0.9059);">CAR</div></div><div class="a" style="left:2125.53px;top:803.18px;width:236.17px;height:46.24px;overflow:hidden;"><div class="t" style="top:9.33px;font-size:31.35px;line-height:35.02px;color:#000;left:6.50px;transform-origin:0 0;transform:scaleX(0.8740);">SALES</div></div><div class="a" style="left:2361.70px;top:803.18px;width:236.17px;height:46.24px;overflow:hidden;"><div class="t" style="top:9.33px;font-size:31.35px;line-height:35.02px;color:#000;left:-1381.91px;width:3000px;text-align:center;transform-origin:50% 0;transform:scaleX(0.8548);">FALSE</div></div><div class="a" style="left:2597.87px;top:803.18px;width:236.17px;height:46.24px;overflow:hidden;"><div class="t" style="top:7.68px;font-size:33.17px;line-height:37.05px;color:#000;left:-2770.83px;width:3000px;text-align:right;transform-origin:100% 0;transform:scaleX(0.9768);">5/1/2018</div></div><div class="a" style="left:0.00px;top:850.44px;width:236.17px;height:46.24px;overflow:hidden;"><div class="t" style="top:7.68px;font-size:33.17px;line-height:37.05px;color:#000;left:-2772.03px;width:3000px;text-align:right;transform-origin:100% 0;transform:scaleX(0.9346);">21</div></div><div class="a" style="left:236.17px;top:850.44px;width:236.17px;height:46.24px;overflow:hidden;"><div class="t" style="top:7.20px;font-size:33.71px;line-height:37.65px;color:#000;left:4.60px;transform-origin:0 0;transform:scaleX(0.9850);">Appreciation</div></div><div class="a" style="left:472.34px;top:850.44px;width:236.17px;height:46.24px;overflow:hidden;"><div class="t" style="top:7.68px;font-size:33.17px;line-height:37.05px;color:#000;left:-2770.53px;width:3000px;text-align:right;transform-origin:100% 0;transform:scaleX(0.9346);">0.00</div></div><div class="a" style="left:708.51px;top:850.44px;width:236.17px;height:46.24px;overflow:hidden;"><div class="t" style="top:7.68px;font-size:33.17px;line-height:37.05px;color:#000;left:-2770.53px;width:3000px;text-align:right;transform-origin:100% 0;transform:scaleX(0.9346);">0.00</div></div><div class="a" style="left:944.68px;top:850.44px;width:236.17px;height:46.24px;overflow:hidden;"><div class="t" style="top:7.68px;font-size:33.17px;line-height:37.05px;color:#000;left:-2770.83px;width:3000px;text-align:right;transform-origin:100% 0;transform:scaleX(0.9346);">0.00</div></div><div class="a" style="left:1180.85px;top:850.44px;width:236.17px;height:46.24px;overflow:hidden;"><div class="t" style="top:8.17px;font-size:32.64px;line-height:36.45px;color:#000;left:7.00px;transform-origin:0 0;transform:scaleX(0.9346);">FA000020</div></div><div class="a" style="left:1417.02px;top:850.44px;width:236.17px;height:46.24px;overflow:hidden;"><div class="t" style="top:6.91px;font-size:34.03px;line-height:38.01px;color:#000;left:6.70px;transform-origin:0 0;transform:scaleX(0.9346);">Toyota Supra 3.0</div></div><div class="a" style="left:1653.19px;top:850.44px;width:236.17px;height:46.24px;overflow:hidden;"><div class="t" style="top:9.33px;font-size:31.35px;line-height:35.02px;color:#000;left:6.00px;transform-origin:0 0;transform:scaleX(0.9282);">TANGIBLE</div></div><div class="a" style="left:1889.36px;top:850.44px;width:236.17px;height:46.24px;overflow:hidden;"><div class="t" style="top:9.33px;font-size:31.35px;line-height:35.02px;color:#000;left:6.50px;transform-origin:0 0;transform:scaleX(0.9059);">CAR</div></div><div class="a" style="left:2125.53px;top:850.44px;width:236.17px;height:46.24px;overflow:hidden;"><div class="t" style="top:9.33px;font-size:31.35px;line-height:35.02px;color:#000;left:6.50px;transform-origin:0 0;transform:scaleX(0.8740);">SALES</div></div><div class="a" style="left:2361.70px;top:850.44px;width:236.17px;height:46.24px;overflow:hidden;"><div class="t" style="top:9.33px;font-size:31.35px;line-height:35.02px;color:#000;left:-1381.91px;width:3000px;text-align:center;transform-origin:50% 0;transform:scaleX(0.8548);">FALSE</div></div><div class="a" style="left:2597.87px;top:850.44px;width:236.17px;height:46.24px;overflow:hidden;"><div class="t" style="top:7.68px;font-size:33.17px;line-height:37.05px;color:#000;left:-2770.83px;width:3000px;text-align:right;transform-origin:100% 0;transform:scaleX(0.9768);">5/1/2018</div></div><div class="a" style="left:0.00px;top:897.69px;width:236.17px;height:46.24px;overflow:hidden;"><div class="t" style="top:7.68px;font-size:33.17px;line-height:37.05px;color:#000;left:-2772.03px;width:3000px;text-align:right;transform-origin:100% 0;transform:scaleX(0.9346);">22</div></div><div class="a" style="left:236.17px;top:897.69px;width:236.17px;height:46.24px;overflow:hidden;"><div class="t" style="top:7.20px;font-size:33.71px;line-height:37.65px;color:#000;left:4.60px;transform-origin:0 0;transform:scaleX(0.9850);">Custom 1</div></div><div class="a" style="left:472.34px;top:897.69px;width:236.17px;height:46.24px;overflow:hidden;"><div class="t" style="top:7.68px;font-size:33.17px;line-height:37.05px;color:#000;left:-2770.53px;width:3000px;text-align:right;transform-origin:100% 0;transform:scaleX(0.9346);">0.00</div></div><div class="a" style="left:708.51px;top:897.69px;width:236.17px;height:46.24px;overflow:hidden;"><div class="t" style="top:7.68px;font-size:33.17px;line-height:37.05px;color:#000;left:-2770.53px;width:3000px;text-align:right;transform-origin:100% 0;transform:scaleX(0.9346);">0.00</div></div><div class="a" style="left:944.68px;top:897.69px;width:236.17px;height:46.24px;overflow:hidden;"><div class="t" style="top:7.68px;font-size:33.17px;line-height:37.05px;color:#000;left:-2770.83px;width:3000px;text-align:right;transform-origin:100% 0;transform:scaleX(0.9346);">0.00</div></div><div class="a" style="left:1180.85px;top:897.69px;width:236.17px;height:46.24px;overflow:hidden;"><div class="t" style="top:8.17px;font-size:32.64px;line-height:36.45px;color:#000;left:7.00px;transform-origin:0 0;transform:scaleX(0.9346);">FA000020</div></div><div class="a" style="left:1417.02px;top:897.69px;width:236.17px;height:46.24px;overflow:hidden;"><div class="t" style="top:6.91px;font-size:34.03px;line-height:38.01px;color:#000;left:6.70px;transform-origin:0 0;transform:scaleX(0.9346);">Toyota Supra 3.0</div></div><div class="a" style="left:1653.19px;top:897.69px;width:236.17px;height:46.24px;overflow:hidden;"><div class="t" style="top:9.33px;font-size:31.35px;line-height:35.02px;color:#000;left:6.00px;transform-origin:0 0;transform:scaleX(0.9282);">TANGIBLE</div></div><div class="a" style="left:1889.36px;top:897.69px;width:236.17px;height:46.24px;overflow:hidden;"><div class="t" style="top:9.33px;font-size:31.35px;line-height:35.02px;color:#000;left:6.50px;transform-origin:0 0;transform:scaleX(0.9059);">CAR</div></div><div class="a" style="left:2125.53px;top:897.69px;width:236.17px;height:46.24px;overflow:hidden;"><div class="t" style="top:9.33px;font-size:31.35px;line-height:35.02px;color:#000;left:6.50px;transform-origin:0 0;transform:scaleX(0.8740);">SALES</div></div><div class="a" style="left:2361.70px;top:897.69px;width:236.17px;height:46.24px;overflow:hidden;"><div class="t" style="top:9.33px;font-size:31.35px;line-height:35.02px;color:#000;left:-1381.91px;width:3000px;text-align:center;transform-origin:50% 0;transform:scaleX(0.8548);">FALSE</div></div><div class="a" style="left:2597.87px;top:897.69px;width:236.17px;height:46.24px;overflow:hidden;"><div class="t" style="top:7.68px;font-size:33.17px;line-height:37.05px;color:#000;left:-2770.83px;width:3000px;text-align:right;transform-origin:100% 0;transform:scaleX(0.9768);">5/1/2018</div></div><div class="a" style="left:0.00px;top:944.95px;width:236.17px;height:46.24px;overflow:hidden;"><div class="t" style="top:7.68px;font-size:33.17px;line-height:37.05px;color:#000;left:-2772.03px;width:3000px;text-align:right;transform-origin:100% 0;transform:scaleX(0.9346);">23</div></div><div class="a" style="left:236.17px;top:944.95px;width:236.17px;height:46.24px;overflow:hidden;"><div class="t" style="top:7.20px;font-size:33.71px;line-height:37.65px;color:#000;left:4.60px;transform-origin:0 0;transform:scaleX(0.9850);">Custom 2</div></div><div class="a" style="left:472.34px;top:944.95px;width:236.17px;height:46.24px;overflow:hidden;"><div class="t" style="top:7.68px;font-size:33.17px;line-height:37.05px;color:#000;left:-2770.53px;width:3000px;text-align:right;transform-origin:100% 0;transform:scaleX(0.9346);">0.00</div></div><div class="a" style="left:708.51px;top:944.95px;width:236.17px;height:46.24px;overflow:hidden;"><div class="t" style="top:7.68px;font-size:33.17px;line-height:37.05px;color:#000;left:-2770.53px;width:3000px;text-align:right;transform-origin:100% 0;transform:scaleX(0.9346);">0.00</div></div><div class="a" style="left:944.68px;top:944.95px;width:236.17px;height:46.24px;overflow:hidden;"><div class="t" style="top:7.68px;font-size:33.17px;line-height:37.05px;color:#000;left:-2770.83px;width:3000px;text-align:right;transform-origin:100% 0;transform:scaleX(0.9346);">0.00</div></div><div class="a" style="left:1180.85px;top:944.95px;width:236.17px;height:46.24px;overflow:hidden;"><div class="t" style="top:8.17px;font-size:32.64px;line-height:36.45px;color:#000;left:7.00px;transform-origin:0 0;transform:scaleX(0.9346);">FA000020</div></div><div class="a" style="left:1417.02px;top:944.95px;width:236.17px;height:46.24px;overflow:hidden;"><div class="t" style="top:6.91px;font-size:34.03px;line-height:38.01px;color:#000;left:6.70px;transform-origin:0 0;transform:scaleX(0.9346);">Toyota Supra 3.0</div></div><div class="a" style="left:1653.19px;top:944.95px;width:236.17px;height:46.24px;overflow:hidden;"><div class="t" style="top:9.33px;font-size:31.35px;line-height:35.02px;color:#000;left:6.00px;transform-origin:0 0;transform:scaleX(0.9282);">TANGIBLE</div></div><div class="a" style="left:1889.36px;top:944.95px;width:236.17px;height:46.24px;overflow:hidden;"><div class="t" style="top:9.33px;font-size:31.35px;line-height:35.02px;color:#000;left:6.50px;transform-origin:0 0;transform:scaleX(0.9059);">CAR</div></div><div class="a" style="left:2125.53px;top:944.95px;width:236.17px;height:46.24px;overflow:hidden;"><div class="t" style="top:9.33px;font-size:31.35px;line-height:35.02px;color:#000;left:6.50px;transform-origin:0 0;transform:scaleX(0.8740);">SALES</div></div><div class="a" style="left:2361.70px;top:944.95px;width:236.17px;height:46.24px;overflow:hidden;"><div class="t" style="top:9.33px;font-size:31.35px;line-height:35.02px;color:#000;left:-1381.91px;width:3000px;text-align:center;transform-origin:50% 0;transform:scaleX(0.8548);">FALSE</div></div><div class="a" style="left:2597.87px;top:944.95px;width:236.17px;height:46.24px;overflow:hidden;"><div class="t" style="top:7.68px;font-size:33.17px;line-height:37.05px;color:#000;left:-2770.83px;width:3000px;text-align:right;transform-origin:100% 0;transform:scaleX(0.9768);">5/1/2018</div></div><div class="a" style="left:0.00px;top:992.20px;width:236.17px;height:46.24px;overflow:hidden;"><div class="t" style="top:7.68px;font-size:33.17px;line-height:37.05px;color:#000;left:-2772.03px;width:3000px;text-align:right;transform-origin:100% 0;transform:scaleX(0.9346);">24</div></div><div class="a" style="left:236.17px;top:992.20px;width:236.17px;height:46.24px;overflow:hidden;"><div class="t" style="top:7.20px;font-size:33.71px;line-height:37.65px;color:#000;left:4.60px;transform-origin:0 0;transform:scaleX(0.9850);">Depreciable Basis</div></div><div class="a" style="left:472.34px;top:992.20px;width:236.17px;height:46.24px;overflow:hidden;"><div class="t" style="top:7.68px;font-size:33.17px;line-height:37.05px;color:#000;left:-2770.53px;width:3000px;text-align:right;transform-origin:100% 0;transform:scaleX(0.9346);">64,726.03</div></div><div class="a" style="left:708.51px;top:992.20px;width:236.17px;height:46.24px;overflow:hidden;"><div class="t" style="top:7.68px;font-size:33.17px;line-height:37.05px;color:#000;left:-2770.53px;width:3000px;text-align:right;transform-origin:100% 0;transform:scaleX(0.9346);">64,726.03</div></div><div class="a" style="left:944.68px;top:992.20px;width:236.17px;height:46.24px;overflow:hidden;"><div class="t" style="top:7.68px;font-size:33.17px;line-height:37.05px;color:#000;left:-2770.83px;width:3000px;text-align:right;transform-origin:100% 0;transform:scaleX(0.9346);">0.00</div></div><div class="a" style="left:1180.85px;top:992.20px;width:236.17px;height:46.24px;overflow:hidden;"><div class="t" style="top:8.17px;font-size:32.64px;line-height:36.45px;color:#000;left:7.00px;transform-origin:0 0;transform:scaleX(0.9346);">FA000020</div></div><div class="a" style="left:1417.02px;top:992.20px;width:236.17px;height:46.24px;overflow:hidden;"><div class="t" style="top:6.91px;font-size:34.03px;line-height:38.01px;color:#000;left:6.70px;transform-origin:0 0;transform:scaleX(0.9346);">Toyota Supra 3.0</div></div><div class="a" style="left:1653.19px;top:992.20px;width:236.17px;height:46.24px;overflow:hidden;"><div class="t" style="top:9.33px;font-size:31.35px;line-height:35.02px;color:#000;left:6.00px;transform-origin:0 0;transform:scaleX(0.9282);">TANGIBLE</div></div><div class="a" style="left:1889.36px;top:992.20px;width:236.17px;height:46.24px;overflow:hidden;"><div class="t" style="top:9.33px;font-size:31.35px;line-height:35.02px;color:#000;left:6.50px;transform-origin:0 0;transform:scaleX(0.9059);">CAR</div></div><div class="a" style="left:2125.53px;top:992.20px;width:236.17px;height:46.24px;overflow:hidden;"><div class="t" style="top:9.33px;font-size:31.35px;line-height:35.02px;color:#000;left:6.50px;transform-origin:0 0;transform:scaleX(0.8740);">SALES</div></div><div class="a" style="left:2361.70px;top:992.20px;width:236.17px;height:46.24px;overflow:hidden;"><div class="t" style="top:9.33px;font-size:31.35px;line-height:35.02px;color:#000;left:-1381.91px;width:3000px;text-align:center;transform-origin:50% 0;transform:scaleX(0.8548);">FALSE</div></div><div class="a" style="left:2597.87px;top:992.20px;width:236.17px;height:46.24px;overflow:hidden;"><div class="t" style="top:7.68px;font-size:33.17px;line-height:37.05px;color:#000;left:-2770.83px;width:3000px;text-align:right;transform-origin:100% 0;transform:scaleX(0.9768);">5/1/2018</div></div><div class="a" style="left:0.00px;top:1039.45px;width:236.17px;height:46.23px;overflow:hidden;"><div class="t" style="top:7.68px;font-size:33.17px;line-height:37.05px;color:#000;left:-2772.03px;width:3000px;text-align:right;transform-origin:100% 0;transform:scaleX(0.9346);">25</div></div><div class="a" style="left:236.17px;top:1039.45px;width:236.17px;height:46.23px;overflow:hidden;"><div class="t" style="top:7.20px;font-size:33.71px;line-height:37.65px;color:#000;left:4.60px;transform-origin:0 0;transform:scaleX(0.9850);">Salvage Value</div></div><div class="a" style="left:472.34px;top:1039.45px;width:236.17px;height:46.23px;overflow:hidden;"><div class="t" style="top:7.68px;font-size:33.17px;line-height:37.05px;color:#000;left:-2770.53px;width:3000px;text-align:right;transform-origin:100% 0;transform:scaleX(0.9346);">0.00</div></div><div class="a" style="left:708.51px;top:1039.45px;width:236.17px;height:46.23px;overflow:hidden;"><div class="t" style="top:7.68px;font-size:33.17px;line-height:37.05px;color:#000;left:-2770.53px;width:3000px;text-align:right;transform-origin:100% 0;transform:scaleX(0.9346);">0.00</div></div><div class="a" style="left:944.68px;top:1039.45px;width:236.17px;height:46.23px;overflow:hidden;"><div class="t" style="top:7.68px;font-size:33.17px;line-height:37.05px;color:#000;left:-2770.83px;width:3000px;text-align:right;transform-origin:100% 0;transform:scaleX(0.9346);">0.00</div></div><div class="a" style="left:1180.85px;top:1039.45px;width:236.17px;height:46.23px;overflow:hidden;"><div class="t" style="top:8.17px;font-size:32.64px;line-height:36.45px;color:#000;left:7.00px;transform-origin:0 0;transform:scaleX(0.9346);">FA000020</div></div><div class="a" style="left:1417.02px;top:1039.45px;width:236.17px;height:46.23px;overflow:hidden;"><div class="t" style="top:6.91px;font-size:34.03px;line-height:38.01px;color:#000;left:6.70px;transform-origin:0 0;transform:scaleX(0.9346);">Toyota Supra 3.0</div></div><div class="a" style="left:1653.19px;top:1039.45px;width:236.17px;height:46.23px;overflow:hidden;"><div class="t" style="top:9.33px;font-size:31.35px;line-height:35.02px;color:#000;left:6.00px;transform-origin:0 0;transform:scaleX(0.9282);">TANGIBLE</div></div><div class="a" style="left:1889.36px;top:1039.45px;width:236.17px;height:46.23px;overflow:hidden;"><div class="t" style="top:9.33px;font-size:31.35px;line-height:35.02px;color:#000;left:6.50px;transform-origin:0 0;transform:scaleX(0.9059);">CAR</div></div><div class="a" style="left:2125.53px;top:1039.45px;width:236.17px;height:46.23px;overflow:hidden;"><div class="t" style="top:9.33px;font-size:31.35px;line-height:35.02px;color:#000;left:6.50px;transform-origin:0 0;transform:scaleX(0.8740);">SALES</div></div><div class="a" style="left:2361.70px;top:1039.45px;width:236.17px;height:46.23px;overflow:hidden;"><div class="t" style="top:9.33px;font-size:31.35px;line-height:35.02px;color:#000;left:-1381.91px;width:3000px;text-align:center;transform-origin:50% 0;transform:scaleX(0.8548);">FALSE</div></div><div class="a" style="left:2597.87px;top:1039.45px;width:236.17px;height:46.23px;overflow:hidden;"><div class="t" style="top:7.68px;font-size:33.17px;line-height:37.05px;color:#000;left:-2770.83px;width:3000px;text-align:right;transform-origin:100% 0;transform:scaleX(0.9768);">5/1/2018</div></div><div class="a" style="left:0.00px;top:1086.71px;width:236.17px;height:46.23px;overflow:hidden;"><div class="t" style="top:7.68px;font-size:33.17px;line-height:37.05px;color:#000;left:-2772.03px;width:3000px;text-align:right;transform-origin:100% 0;transform:scaleX(0.9346);">15</div></div><div class="a" style="left:236.17px;top:1086.71px;width:236.17px;height:46.23px;overflow:hidden;"><div class="t" style="top:7.20px;font-size:33.71px;line-height:37.65px;color:#000;left:4.60px;transform-origin:0 0;transform:scaleX(0.9850);">Acquisition Cost</div></div><div class="a" style="left:472.34px;top:1086.71px;width:236.17px;height:46.23px;overflow:hidden;"><div class="t" style="top:7.68px;font-size:33.17px;line-height:37.05px;color:#000;left:-2770.53px;width:3000px;text-align:right;transform-origin:100% 0;transform:scaleX(0.9346);">23,116.44</div></div><div class="a" style="left:708.51px;top:1086.71px;width:236.17px;height:46.23px;overflow:hidden;"><div class="t" style="top:7.68px;font-size:33.17px;line-height:37.05px;color:#000;left:-2770.53px;width:3000px;text-align:right;transform-origin:100% 0;transform:scaleX(0.9346);">23,116.44</div></div><div class="a" style="left:944.68px;top:1086.71px;width:236.17px;height:46.23px;overflow:hidden;"><div class="t" style="top:7.68px;font-size:33.17px;line-height:37.05px;color:#000;left:-2770.83px;width:3000px;text-align:right;transform-origin:100% 0;transform:scaleX(0.9346);">0.00</div></div><div class="a" style="left:1180.85px;top:1086.71px;width:236.17px;height:46.23px;overflow:hidden;"><div class="t" style="top:8.17px;font-size:32.64px;line-height:36.45px;color:#000;left:7.00px;transform-origin:0 0;transform:scaleX(0.9346);">FA000030</div></div><div class="a" style="left:1417.02px;top:1086.71px;width:236.17px;height:46.23px;overflow:hidden;"><div class="t" style="top:6.91px;font-size:34.03px;line-height:38.01px;color:#000;left:6.70px;transform-origin:0 0;transform:scaleX(0.9346);">VW Transporter</div></div><div class="a" style="left:1653.19px;top:1086.71px;width:236.17px;height:46.23px;overflow:hidden;"><div class="t" style="top:9.33px;font-size:31.35px;line-height:35.02px;color:#000;left:6.00px;transform-origin:0 0;transform:scaleX(0.9282);">TANGIBLE</div></div><div class="a" style="left:1889.36px;top:1086.71px;width:236.17px;height:46.23px;overflow:hidden;"><div class="t" style="top:9.33px;font-size:31.35px;line-height:35.02px;color:#000;left:6.50px;transform-origin:0 0;transform:scaleX(0.9059);">CAR</div></div><div class="a" style="left:2125.53px;top:1086.71px;width:236.17px;height:46.23px;overflow:hidden;"><div class="t" style="top:9.33px;font-size:31.35px;line-height:35.02px;color:#000;left:6.50px;transform-origin:0 0;transform:scaleX(0.9186);">PROD</div></div><div class="a" style="left:2361.70px;top:1086.71px;width:236.17px;height:46.23px;overflow:hidden;"><div class="t" style="top:9.33px;font-size:31.35px;line-height:35.02px;color:#000;left:-1381.91px;width:3000px;text-align:center;transform-origin:50% 0;transform:scaleX(0.8548);">FALSE</div></div><div class="a" style="left:2597.87px;top:1086.71px;width:236.17px;height:46.23px;overflow:hidden;"><div class="t" style="top:7.68px;font-size:33.17px;line-height:37.05px;color:#000;left:-2770.83px;width:3000px;text-align:right;transform-origin:100% 0;transform:scaleX(0.9768);">6/1/2018</div></div><div class="a" style="left:0.00px;top:1133.96px;width:236.17px;height:46.23px;overflow:hidden;"><div class="t" style="top:7.68px;font-size:33.17px;line-height:37.05px;color:#000;left:-2772.03px;width:3000px;text-align:right;transform-origin:100% 0;transform:scaleX(0.9346);">16</div></div><div class="a" style="left:236.17px;top:1133.96px;width:236.17px;height:46.23px;overflow:hidden;"><div class="t" style="top:7.20px;font-size:33.71px;line-height:37.65px;color:#000;left:4.60px;transform-origin:0 0;transform:scaleX(0.9850);">Depreciation</div></div><div class="a" style="left:472.34px;top:1133.96px;width:236.17px;height:46.23px;overflow:hidden;"><div class="t" style="top:7.68px;font-size:33.17px;line-height:37.05px;color:#000;left:-2770.53px;width:3000px;text-align:right;transform-origin:100% 0;transform:scaleX(0.9346);">-2,695.00</div></div><div class="a" style="left:708.51px;top:1133.96px;width:236.17px;height:46.23px;overflow:hidden;"><div class="t" style="top:7.68px;font-size:33.17px;line-height:37.05px;color:#000;left:-2770.53px;width:3000px;text-align:right;transform-origin:100% 0;transform:scaleX(0.9346);">-2,695.00</div></div><div class="a" style="left:944.68px;top:1133.96px;width:236.17px;height:46.23px;overflow:hidden;"><div class="t" style="top:7.68px;font-size:33.17px;line-height:37.05px;color:#000;left:-2770.83px;width:3000px;text-align:right;transform-origin:100% 0;transform:scaleX(0.9346);">0.00</div></div><div class="a" style="left:1180.85px;top:1133.96px;width:236.17px;height:46.23px;overflow:hidden;"><div class="t" style="top:8.17px;font-size:32.64px;line-height:36.45px;color:#000;left:7.00px;transform-origin:0 0;transform:scaleX(0.9346);">FA000030</div></div><div class="a" style="left:1417.02px;top:1133.96px;width:236.17px;height:46.23px;overflow:hidden;"><div class="t" style="top:6.91px;font-size:34.03px;line-height:38.01px;color:#000;left:6.70px;transform-origin:0 0;transform:scaleX(0.9346);">VW Transporter</div></div><div class="a" style="left:1653.19px;top:1133.96px;width:236.17px;height:46.23px;overflow:hidden;"><div class="t" style="top:9.33px;font-size:31.35px;line-height:35.02px;color:#000;left:6.00px;transform-origin:0 0;transform:scaleX(0.9282);">TANGIBLE</div></div><div class="a" style="left:1889.36px;top:1133.96px;width:236.17px;height:46.23px;overflow:hidden;"><div class="t" style="top:9.33px;font-size:31.35px;line-height:35.02px;color:#000;left:6.50px;transform-origin:0 0;transform:scaleX(0.9059);">CAR</div></div><div class="a" style="left:2125.53px;top:1133.96px;width:236.17px;height:46.23px;overflow:hidden;"><div class="t" style="top:9.33px;font-size:31.35px;line-height:35.02px;color:#000;left:6.50px;transform-origin:0 0;transform:scaleX(0.9186);">PROD</div></div><div class="a" style="left:2361.70px;top:1133.96px;width:236.17px;height:46.23px;overflow:hidden;"><div class="t" style="top:9.33px;font-size:31.35px;line-height:35.02px;color:#000;left:-1381.91px;width:3000px;text-align:center;transform-origin:50% 0;transform:scaleX(0.8548);">FALSE</div></div><div class="a" style="left:2597.87px;top:1133.96px;width:236.17px;height:46.23px;overflow:hidden;"><div class="t" style="top:7.68px;font-size:33.17px;line-height:37.05px;color:#000;left:-2770.83px;width:3000px;text-align:right;transform-origin:100% 0;transform:scaleX(0.9768);">6/1/2018</div></div><div class="a" style="left:0.00px;top:1181.22px;width:236.17px;height:46.23px;overflow:hidden;"><div class="t" style="top:7.68px;font-size:33.17px;line-height:37.05px;color:#000;left:-2772.03px;width:3000px;text-align:right;transform-origin:100% 0;transform:scaleX(0.9346);">17</div></div><div class="a" style="left:236.17px;top:1181.22px;width:236.17px;height:46.23px;overflow:hidden;"><div class="t" style="top:7.20px;font-size:33.71px;line-height:37.65px;color:#000;left:4.60px;transform-origin:0 0;transform:scaleX(0.9850);">Book Value</div></div><div class="a" style="left:472.34px;top:1181.22px;width:236.17px;height:46.23px;overflow:hidden;"><div class="t" style="top:7.68px;font-size:33.17px;line-height:37.05px;color:#000;left:-2770.53px;width:3000px;text-align:right;transform-origin:100% 0;transform:scaleX(0.9346);">20,421.44</div></div><div class="a" style="left:708.51px;top:1181.22px;width:236.17px;height:46.23px;overflow:hidden;"><div class="t" style="top:7.68px;font-size:33.17px;line-height:37.05px;color:#000;left:-2770.53px;width:3000px;text-align:right;transform-origin:100% 0;transform:scaleX(0.9346);">20,421.44</div></div><div class="a" style="left:944.68px;top:1181.22px;width:236.17px;height:46.23px;overflow:hidden;"><div class="t" style="top:7.68px;font-size:33.17px;line-height:37.05px;color:#000;left:-2770.83px;width:3000px;text-align:right;transform-origin:100% 0;transform:scaleX(0.9346);">0.00</div></div><div class="a" style="left:1180.85px;top:1181.22px;width:236.17px;height:46.23px;overflow:hidden;"><div class="t" style="top:8.17px;font-size:32.64px;line-height:36.45px;color:#000;left:7.00px;transform-origin:0 0;transform:scaleX(0.9346);">FA000030</div></div><div class="a" style="left:1417.02px;top:1181.22px;width:236.17px;height:46.23px;overflow:hidden;"><div class="t" style="top:6.91px;font-size:34.03px;line-height:38.01px;color:#000;left:6.70px;transform-origin:0 0;transform:scaleX(0.9346);">VW Transporter</div></div><div class="a" style="left:1653.19px;top:1181.22px;width:236.17px;height:46.23px;overflow:hidden;"><div class="t" style="top:9.33px;font-size:31.35px;line-height:35.02px;color:#000;left:6.00px;transform-origin:0 0;transform:scaleX(0.9282);">TANGIBLE</div></div><div class="a" style="left:1889.36px;top:1181.22px;width:236.17px;height:46.23px;overflow:hidden;"><div class="t" style="top:9.33px;font-size:31.35px;line-height:35.02px;color:#000;left:6.50px;transform-origin:0 0;transform:scaleX(0.9059);">CAR</div></div><div class="a" style="left:2125.53px;top:1181.22px;width:236.17px;height:46.23px;overflow:hidden;"><div class="t" style="top:9.33px;font-size:31.35px;line-height:35.02px;color:#000;left:6.50px;transform-origin:0 0;transform:scaleX(0.9186);">PROD</div></div><div class="a" style="left:2361.70px;top:1181.22px;width:236.17px;height:46.23px;overflow:hidden;"><div class="t" style="top:9.33px;font-size:31.35px;line-height:35.02px;color:#000;left:-1381.91px;width:3000px;text-align:center;transform-origin:50% 0;transform:scaleX(0.8548);">FALSE</div></div><div class="a" style="left:2597.87px;top:1181.22px;width:236.17px;height:46.23px;overflow:hidden;"><div class="t" style="top:7.68px;font-size:33.17px;line-height:37.05px;color:#000;left:-2770.83px;width:3000px;text-align:right;transform-origin:100% 0;transform:scaleX(0.9768);">6/1/2018</div></div><div class="a" style="left:0.00px;top:1228.47px;width:236.17px;height:46.23px;overflow:hidden;"><div class="t" style="top:7.68px;font-size:33.17px;line-height:37.05px;color:#000;left:-2772.03px;width:3000px;text-align:right;transform-origin:100% 0;transform:scaleX(0.9346);">18</div></div><div class="a" style="left:236.17px;top:1228.47px;width:236.17px;height:46.23px;overflow:hidden;"><div class="t" style="top:7.20px;font-size:33.71px;line-height:37.65px;color:#000;left:4.60px;transform-origin:0 0;transform:scaleX(0.9850);">Proceeds on Disposal</div></div><div class="a" style="left:472.34px;top:1228.47px;width:236.17px;height:46.23px;overflow:hidden;"><div class="t" style="top:7.68px;font-size:33.17px;line-height:37.05px;color:#000;left:-2770.53px;width:3000px;text-align:right;transform-origin:100% 0;transform:scaleX(0.9346);">0.00</div></div><div class="a" style="left:708.51px;top:1228.47px;width:236.17px;height:46.23px;overflow:hidden;"><div class="t" style="top:7.68px;font-size:33.17px;line-height:37.05px;color:#000;left:-2770.53px;width:3000px;text-align:right;transform-origin:100% 0;transform:scaleX(0.9346);">0.00</div></div><div class="a" style="left:944.68px;top:1228.47px;width:236.17px;height:46.23px;overflow:hidden;"><div class="t" style="top:7.68px;font-size:33.17px;line-height:37.05px;color:#000;left:-2770.83px;width:3000px;text-align:right;transform-origin:100% 0;transform:scaleX(0.9346);">0.00</div></div><div class="a" style="left:1180.85px;top:1228.47px;width:236.17px;height:46.23px;overflow:hidden;"><div class="t" style="top:8.17px;font-size:32.64px;line-height:36.45px;color:#000;left:7.00px;transform-origin:0 0;transform:scaleX(0.9346);">FA000030</div></div><div class="a" style="left:1417.02px;top:1228.47px;width:236.17px;height:46.23px;overflow:hidden;"><div class="t" style="top:6.91px;font-size:34.03px;line-height:38.01px;color:#000;left:6.70px;transform-origin:0 0;transform:scaleX(0.9346);">VW Transporter</div></div><div class="a" style="left:1653.19px;top:1228.47px;width:236.17px;height:46.23px;overflow:hidden;"><div class="t" style="top:9.33px;font-size:31.35px;line-height:35.02px;color:#000;left:6.00px;transform-origin:0 0;transform:scaleX(0.9282);">TANGIBLE</div></div><div class="a" style="left:1889.36px;top:1228.47px;width:236.17px;height:46.23px;overflow:hidden;"><div class="t" style="top:9.33px;font-size:31.35px;line-height:35.02px;color:#000;left:6.50px;transform-origin:0 0;transform:scaleX(0.9059);">CAR</div></div><div class="a" style="left:2125.53px;top:1228.47px;width:236.17px;height:46.23px;overflow:hidden;"><div class="t" style="top:9.33px;font-size:31.35px;line-height:35.02px;color:#000;left:6.50px;transform-origin:0 0;transform:scaleX(0.9186);">PROD</div></div><div class="a" style="left:2361.70px;top:1228.47px;width:236.17px;height:46.23px;overflow:hidden;"><div class="t" style="top:9.33px;font-size:31.35px;line-height:35.02px;color:#000;left:-1381.91px;width:3000px;text-align:center;transform-origin:50% 0;transform:scaleX(0.8548);">FALSE</div></div><div class="a" style="left:2597.87px;top:1228.47px;width:236.17px;height:46.23px;overflow:hidden;"><div class="t" style="top:7.68px;font-size:33.17px;line-height:37.05px;color:#000;left:-2770.83px;width:3000px;text-align:right;transform-origin:100% 0;transform:scaleX(0.9768);">6/1/2018</div></div><div class="a" style="left:0.00px;top:1275.73px;width:236.17px;height:46.23px;overflow:hidden;"><div class="t" style="top:7.68px;font-size:33.17px;line-height:37.05px;color:#000;left:-2772.03px;width:3000px;text-align:right;transform-origin:100% 0;transform:scaleX(0.9346);">19</div></div><div class="a" style="left:236.17px;top:1275.73px;width:236.17px;height:46.23px;overflow:hidden;"><div class="t" style="top:7.20px;font-size:33.71px;line-height:37.65px;color:#000;left:4.60px;transform-origin:0 0;transform:scaleX(0.9850);">Gain/Loss</div></div><div class="a" style="left:472.34px;top:1275.73px;width:236.17px;height:46.23px;overflow:hidden;"><div class="t" style="top:7.68px;font-size:33.17px;line-height:37.05px;color:#000;left:-2770.53px;width:3000px;text-align:right;transform-origin:100% 0;transform:scaleX(0.9346);">0.00</div></div><div class="a" style="left:708.51px;top:1275.73px;width:236.17px;height:46.23px;overflow:hidden;"><div class="t" style="top:7.68px;font-size:33.17px;line-height:37.05px;color:#000;left:-2770.53px;width:3000px;text-align:right;transform-origin:100% 0;transform:scaleX(0.9346);">0.00</div></div><div class="a" style="left:944.68px;top:1275.73px;width:236.17px;height:46.23px;overflow:hidden;"><div class="t" style="top:7.68px;font-size:33.17px;line-height:37.05px;color:#000;left:-2770.83px;width:3000px;text-align:right;transform-origin:100% 0;transform:scaleX(0.9346);">0.00</div></div><div class="a" style="left:1180.85px;top:1275.73px;width:236.17px;height:46.23px;overflow:hidden;"><div class="t" style="top:8.17px;font-size:32.64px;line-height:36.45px;color:#000;left:7.00px;transform-origin:0 0;transform:scaleX(0.9346);">FA000030</div></div><div class="a" style="left:1417.02px;top:1275.73px;width:236.17px;height:46.23px;overflow:hidden;"><div class="t" style="top:6.91px;font-size:34.03px;line-height:38.01px;color:#000;left:6.70px;transform-origin:0 0;transform:scaleX(0.9346);">VW Transporter</div></div><div class="a" style="left:1653.19px;top:1275.73px;width:236.17px;height:46.23px;overflow:hidden;"><div class="t" style="top:9.33px;font-size:31.35px;line-height:35.02px;color:#000;left:6.00px;transform-origin:0 0;transform:scaleX(0.9282);">TANGIBLE</div></div><div class="a" style="left:1889.36px;top:1275.73px;width:236.17px;height:46.23px;overflow:hidden;"><div class="t" style="top:9.33px;font-size:31.35px;line-height:35.02px;color:#000;left:6.50px;transform-origin:0 0;transform:scaleX(0.9059);">CAR</div></div><div class="a" style="left:2125.53px;top:1275.73px;width:236.17px;height:46.23px;overflow:hidden;"><div class="t" style="top:9.33px;font-size:31.35px;line-height:35.02px;color:#000;left:6.50px;transform-origin:0 0;transform:scaleX(0.9186);">PROD</div></div><div class="a" style="left:2361.70px;top:1275.73px;width:236.17px;height:46.23px;overflow:hidden;"><div class="t" style="top:9.33px;font-size:31.35px;line-height:35.02px;color:#000;left:-1381.91px;width:3000px;text-align:center;transform-origin:50% 0;transform:scaleX(0.8548);">FALSE</div></div><div class="a" style="left:2597.87px;top:1275.73px;width:236.17px;height:46.23px;overflow:hidden;"><div class="t" style="top:7.68px;font-size:33.17px;line-height:37.05px;color:#000;left:-2770.83px;width:3000px;text-align:right;transform-origin:100% 0;transform:scaleX(0.9768);">6/1/2018</div></div><div class="a" style="left:0.00px;top:1322.98px;width:236.17px;height:46.23px;overflow:hidden;"><div class="t" style="top:7.68px;font-size:33.17px;line-height:37.05px;color:#000;left:-2772.03px;width:3000px;text-align:right;transform-origin:100% 0;transform:scaleX(0.9346);">20</div></div><div class="a" style="left:236.17px;top:1322.98px;width:236.17px;height:46.23px;overflow:hidden;"><div class="t" style="top:7.20px;font-size:33.71px;line-height:37.65px;color:#000;left:4.60px;transform-origin:0 0;transform:scaleX(0.9850);">Write-Down</div></div><div class="a" style="left:472.34px;top:1322.98px;width:236.17px;height:46.23px;overflow:hidden;"><div class="t" style="top:7.68px;font-size:33.17px;line-height:37.05px;color:#000;left:-2770.53px;width:3000px;text-align:right;transform-origin:100% 0;transform:scaleX(0.9346);">0.00</div></div><div class="a" style="left:708.51px;top:1322.98px;width:236.17px;height:46.23px;overflow:hidden;"><div class="t" style="top:7.68px;font-size:33.17px;line-height:37.05px;color:#000;left:-2770.53px;width:3000px;text-align:right;transform-origin:100% 0;transform:scaleX(0.9346);">0.00</div></div><div class="a" style="left:944.68px;top:1322.98px;width:236.17px;height:46.23px;overflow:hidden;"><div class="t" style="top:7.68px;font-size:33.17px;line-height:37.05px;color:#000;left:-2770.83px;width:3000px;text-align:right;transform-origin:100% 0;transform:scaleX(0.9346);">0.00</div></div><div class="a" style="left:1180.85px;top:1322.98px;width:236.17px;height:46.23px;overflow:hidden;"><div class="t" style="top:8.17px;font-size:32.64px;line-height:36.45px;color:#000;left:7.00px;transform-origin:0 0;transform:scaleX(0.9346);">FA000030</div></div><div class="a" style="left:1417.02px;top:1322.98px;width:236.17px;height:46.23px;overflow:hidden;"><div class="t" style="top:6.91px;font-size:34.03px;line-height:38.01px;color:#000;left:6.70px;transform-origin:0 0;transform:scaleX(0.9346);">VW Transporter</div></div><div class="a" style="left:1653.19px;top:1322.98px;width:236.17px;height:46.23px;overflow:hidden;"><div class="t" style="top:9.33px;font-size:31.35px;line-height:35.02px;color:#000;left:6.00px;transform-origin:0 0;transform:scaleX(0.9282);">TANGIBLE</div></div><div class="a" style="left:1889.36px;top:1322.98px;width:236.17px;height:46.23px;overflow:hidden;"><div class="t" style="top:9.33px;font-size:31.35px;line-height:35.02px;color:#000;left:6.50px;transform-origin:0 0;transform:scaleX(0.9059);">CAR</div></div><div class="a" style="left:2125.53px;top:1322.98px;width:236.17px;height:46.23px;overflow:hidden;"><div class="t" style="top:9.33px;font-size:31.35px;line-height:35.02px;color:#000;left:6.50px;transform-origin:0 0;transform:scaleX(0.9186);">PROD</div></div><div class="a" style="left:2361.70px;top:1322.98px;width:236.17px;height:46.23px;overflow:hidden;"><div class="t" style="top:9.33px;font-size:31.35px;line-height:35.02px;color:#000;left:-1381.91px;width:3000px;text-align:center;transform-origin:50% 0;transform:scaleX(0.8548);">FALSE</div></div><div class="a" style="left:2597.87px;top:1322.98px;width:236.17px;height:46.23px;overflow:hidden;"><div class="t" style="top:7.68px;font-size:33.17px;line-height:37.05px;color:#000;left:-2770.83px;width:3000px;text-align:right;transform-origin:100% 0;transform:scaleX(0.9768);">6/1/2018</div></div><div class="a" style="left:0.00px;top:1370.24px;width:236.17px;height:46.23px;overflow:hidden;"><div class="t" style="top:7.68px;font-size:33.17px;line-height:37.05px;color:#000;left:-2772.03px;width:3000px;text-align:right;transform-origin:100% 0;transform:scaleX(0.9346);">21</div></div><div class="a" style="left:236.17px;top:1370.24px;width:236.17px;height:46.23px;overflow:hidden;"><div class="t" style="top:7.20px;font-size:33.71px;line-height:37.65px;color:#000;left:4.60px;transform-origin:0 0;transform:scaleX(0.9850);">Appreciation</div></div><div class="a" style="left:472.34px;top:1370.24px;width:236.17px;height:46.23px;overflow:hidden;"><div class="t" style="top:7.68px;font-size:33.17px;line-height:37.05px;color:#000;left:-2770.53px;width:3000px;text-align:right;transform-origin:100% 0;transform:scaleX(0.9346);">0.00</div></div><div class="a" style="left:708.51px;top:1370.24px;width:236.17px;height:46.23px;overflow:hidden;"><div class="t" style="top:7.68px;font-size:33.17px;line-height:37.05px;color:#000;left:-2770.53px;width:3000px;text-align:right;transform-origin:100% 0;transform:scaleX(0.9346);">0.00</div></div><div class="a" style="left:944.68px;top:1370.24px;width:236.17px;height:46.23px;overflow:hidden;"><div class="t" style="top:7.68px;font-size:33.17px;line-height:37.05px;color:#000;left:-2770.83px;width:3000px;text-align:right;transform-origin:100% 0;transform:scaleX(0.9346);">0.00</div></div><div class="a" style="left:1180.85px;top:1370.24px;width:236.17px;height:46.23px;overflow:hidden;"><div class="t" style="top:8.17px;font-size:32.64px;line-height:36.45px;color:#000;left:7.00px;transform-origin:0 0;transform:scaleX(0.9346);">FA000030</div></div><div class="a" style="left:1417.02px;top:1370.24px;width:236.17px;height:46.23px;overflow:hidden;"><div class="t" style="top:6.91px;font-size:34.03px;line-height:38.01px;color:#000;left:6.70px;transform-origin:0 0;transform:scaleX(0.9346);">VW Transporter</div></div><div class="a" style="left:1653.19px;top:1370.24px;width:236.17px;height:46.23px;overflow:hidden;"><div class="t" style="top:9.33px;font-size:31.35px;line-height:35.02px;color:#000;left:6.00px;transform-origin:0 0;transform:scaleX(0.9282);">TANGIBLE</div></div><div class="a" style="left:1889.36px;top:1370.24px;width:236.17px;height:46.23px;overflow:hidden;"><div class="t" style="top:9.33px;font-size:31.35px;line-height:35.02px;color:#000;left:6.50px;transform-origin:0 0;transform:scaleX(0.9059);">CAR</div></div><div class="a" style="left:2125.53px;top:1370.24px;width:236.17px;height:46.23px;overflow:hidden;"><div class="t" style="top:9.33px;font-size:31.35px;line-height:35.02px;color:#000;left:6.50px;transform-origin:0 0;transform:scaleX(0.9186);">PROD</div></div><div class="a" style="left:2361.70px;top:1370.24px;width:236.17px;height:46.23px;overflow:hidden;"><div class="t" style="top:9.33px;font-size:31.35px;line-height:35.02px;color:#000;left:-1381.91px;width:3000px;text-align:center;transform-origin:50% 0;transform:scaleX(0.8548);">FALSE</div></div><div class="a" style="left:2597.87px;top:1370.24px;width:236.17px;height:46.23px;overflow:hidden;"><div class="t" style="top:7.68px;font-size:33.17px;line-height:37.05px;color:#000;left:-2770.83px;width:3000px;text-align:right;transform-origin:100% 0;transform:scaleX(0.9768);">6/1/2018</div></div><div class="a" style="left:0.00px;top:1417.49px;width:236.17px;height:46.23px;overflow:hidden;"><div class="t" style="top:7.68px;font-size:33.17px;line-height:37.05px;color:#000;left:-2772.03px;width:3000px;text-align:right;transform-origin:100% 0;transform:scaleX(0.9346);">22</div></div><div class="a" style="left:236.17px;top:1417.49px;width:236.17px;height:46.23px;overflow:hidden;"><div class="t" style="top:7.20px;font-size:33.71px;line-height:37.65px;color:#000;left:4.60px;transform-origin:0 0;transform:scaleX(0.9850);">Custom 1</div></div><div class="a" style="left:472.34px;top:1417.49px;width:236.17px;height:46.23px;overflow:hidden;"><div class="t" style="top:7.68px;font-size:33.17px;line-height:37.05px;color:#000;left:-2770.53px;width:3000px;text-align:right;transform-origin:100% 0;transform:scaleX(0.9346);">0.00</div></div><div class="a" style="left:708.51px;top:1417.49px;width:236.17px;height:46.23px;overflow:hidden;"><div class="t" style="top:7.68px;font-size:33.17px;line-height:37.05px;color:#000;left:-2770.53px;width:3000px;text-align:right;transform-origin:100% 0;transform:scaleX(0.9346);">0.00</div></div><div class="a" style="left:944.68px;top:1417.49px;width:236.17px;height:46.23px;overflow:hidden;"><div class="t" style="top:7.68px;font-size:33.17px;line-height:37.05px;color:#000;left:-2770.83px;width:3000px;text-align:right;transform-origin:100% 0;transform:scaleX(0.9346);">0.00</div></div><div class="a" style="left:1180.85px;top:1417.49px;width:236.17px;height:46.23px;overflow:hidden;"><div class="t" style="top:8.17px;font-size:32.64px;line-height:36.45px;color:#000;left:7.00px;transform-origin:0 0;transform:scaleX(0.9346);">FA000030</div></div><div class="a" style="left:1417.02px;top:1417.49px;width:236.17px;height:46.23px;overflow:hidden;"><div class="t" style="top:6.91px;font-size:34.03px;line-height:38.01px;color:#000;left:6.70px;transform-origin:0 0;transform:scaleX(0.9346);">VW Transporter</div></div><div class="a" style="left:1653.19px;top:1417.49px;width:236.17px;height:46.23px;overflow:hidden;"><div class="t" style="top:9.33px;font-size:31.35px;line-height:35.02px;color:#000;left:6.00px;transform-origin:0 0;transform:scaleX(0.9282);">TANGIBLE</div></div><div class="a" style="left:1889.36px;top:1417.49px;width:236.17px;height:46.23px;overflow:hidden;"><div class="t" style="top:9.33px;font-size:31.35px;line-height:35.02px;color:#000;left:6.50px;transform-origin:0 0;transform:scaleX(0.9059);">CAR</div></div><div class="a" style="left:2125.53px;top:1417.49px;width:236.17px;height:46.23px;overflow:hidden;"><div class="t" style="top:9.33px;font-size:31.35px;line-height:35.02px;color:#000;left:6.50px;transform-origin:0 0;transform:scaleX(0.9186);">PROD</div></div><div class="a" style="left:2361.70px;top:1417.49px;width:236.17px;height:46.23px;overflow:hidden;"><div class="t" style="top:9.33px;font-size:31.35px;line-height:35.02px;color:#000;left:-1381.91px;width:3000px;text-align:center;transform-origin:50% 0;transform:scaleX(0.8548);">FALSE</div></div><div class="a" style="left:2597.87px;top:1417.49px;width:236.17px;height:46.23px;overflow:hidden;"><div class="t" style="top:7.68px;font-size:33.17px;line-height:37.05px;color:#000;left:-2770.83px;width:3000px;text-align:right;transform-origin:100% 0;transform:scaleX(0.9768);">6/1/2018</div></div><div class="a" style="left:0.00px;top:1464.75px;width:236.17px;height:46.23px;overflow:hidden;"><div class="t" style="top:7.68px;font-size:33.17px;line-height:37.05px;color:#000;left:-2772.03px;width:3000px;text-align:right;transform-origin:100% 0;transform:scaleX(0.9346);">23</div></div><div class="a" style="left:236.17px;top:1464.75px;width:236.17px;height:46.23px;overflow:hidden;"><div class="t" style="top:7.20px;font-size:33.71px;line-height:37.65px;color:#000;left:4.60px;transform-origin:0 0;transform:scaleX(0.9850);">Custom 2</div></div><div class="a" style="left:472.34px;top:1464.75px;width:236.17px;height:46.23px;overflow:hidden;"><div class="t" style="top:7.68px;font-size:33.17px;line-height:37.05px;color:#000;left:-2770.53px;width:3000px;text-align:right;transform-origin:100% 0;transform:scaleX(0.9346);">0.00</div></div><div class="a" style="left:708.51px;top:1464.75px;width:236.17px;height:46.23px;overflow:hidden;"><div class="t" style="top:7.68px;font-size:33.17px;line-height:37.05px;color:#000;left:-2770.53px;width:3000px;text-align:right;transform-origin:100% 0;transform:scaleX(0.9346);">0.00</div></div><div class="a" style="left:944.68px;top:1464.75px;width:236.17px;height:46.23px;overflow:hidden;"><div class="t" style="top:7.68px;font-size:33.17px;line-height:37.05px;color:#000;left:-2770.83px;width:3000px;text-align:right;transform-origin:100% 0;transform:scaleX(0.9346);">0.00</div></div><div class="a" style="left:1180.85px;top:1464.75px;width:236.17px;height:46.23px;overflow:hidden;"><div class="t" style="top:8.17px;font-size:32.64px;line-height:36.45px;color:#000;left:7.00px;transform-origin:0 0;transform:scaleX(0.9346);">FA000030</div></div><div class="a" style="left:1417.02px;top:1464.75px;width:236.17px;height:46.23px;overflow:hidden;"><div class="t" style="top:6.91px;font-size:34.03px;line-height:38.01px;color:#000;left:6.70px;transform-origin:0 0;transform:scaleX(0.9346);">VW Transporter</div></div><div class="a" style="left:1653.19px;top:1464.75px;width:236.17px;height:46.23px;overflow:hidden;"><div class="t" style="top:9.33px;font-size:31.35px;line-height:35.02px;color:#000;left:6.00px;transform-origin:0 0;transform:scaleX(0.9282);">TANGIBLE</div></div><div class="a" style="left:1889.36px;top:1464.75px;width:236.17px;height:46.23px;overflow:hidden;"><div class="t" style="top:9.33px;font-size:31.35px;line-height:35.02px;color:#000;left:6.50px;transform-origin:0 0;transform:scaleX(0.9059);">CAR</div></div><div class="a" style="left:2125.53px;top:1464.75px;width:236.17px;height:46.23px;overflow:hidden;"><div class="t" style="top:9.33px;font-size:31.35px;line-height:35.02px;color:#000;left:6.50px;transform-origin:0 0;transform:scaleX(0.9186);">PROD</div></div><div class="a" style="left:2361.70px;top:1464.75px;width:236.17px;height:46.23px;overflow:hidden;"><div class="t" style="top:9.33px;font-size:31.35px;line-height:35.02px;color:#000;left:-1381.91px;width:3000px;text-align:center;transform-origin:50% 0;transform:scaleX(0.8548);">FALSE</div></div><div class="a" style="left:2597.87px;top:1464.75px;width:236.17px;height:46.23px;overflow:hidden;"><div class="t" style="top:7.68px;font-size:33.17px;line-height:37.05px;color:#000;left:-2770.83px;width:3000px;text-align:right;transform-origin:100% 0;transform:scaleX(0.9768);">6/1/2018</div></div><div class="a" style="left:0.00px;top:1512.00px;width:236.17px;height:46.23px;overflow:hidden;"><div class="t" style="top:7.68px;font-size:33.17px;line-height:37.05px;color:#000;left:-2772.03px;width:3000px;text-align:right;transform-origin:100% 0;transform:scaleX(0.9346);">24</div></div><div class="a" style="left:236.17px;top:1512.00px;width:236.17px;height:46.23px;overflow:hidden;"><div class="t" style="top:7.20px;font-size:33.71px;line-height:37.65px;color:#000;left:4.60px;transform-origin:0 0;transform:scaleX(0.9850);">Depreciable Basis</div></div><div class="a" style="left:472.34px;top:1512.00px;width:236.17px;height:46.23px;overflow:hidden;"><div class="t" style="top:7.68px;font-size:33.17px;line-height:37.05px;color:#000;left:-2770.53px;width:3000px;text-align:right;transform-origin:100% 0;transform:scaleX(0.9346);">23,116.44</div></div><div class="a" style="left:708.51px;top:1512.00px;width:236.17px;height:46.23px;overflow:hidden;"><div class="t" style="top:7.68px;font-size:33.17px;line-height:37.05px;color:#000;left:-2770.53px;width:3000px;text-align:right;transform-origin:100% 0;transform:scaleX(0.9346);">23,116.44</div></div><div class="a" style="left:944.68px;top:1512.00px;width:236.17px;height:46.23px;overflow:hidden;"><div class="t" style="top:7.68px;font-size:33.17px;line-height:37.05px;color:#000;left:-2770.83px;width:3000px;text-align:right;transform-origin:100% 0;transform:scaleX(0.9346);">0.00</div></div><div class="a" style="left:1180.85px;top:1512.00px;width:236.17px;height:46.23px;overflow:hidden;"><div class="t" style="top:8.17px;font-size:32.64px;line-height:36.45px;color:#000;left:7.00px;transform-origin:0 0;transform:scaleX(0.9346);">FA000030</div></div><div class="a" style="left:1417.02px;top:1512.00px;width:236.17px;height:46.23px;overflow:hidden;"><div class="t" style="top:6.91px;font-size:34.03px;line-height:38.01px;color:#000;left:6.70px;transform-origin:0 0;transform:scaleX(0.9346);">VW Transporter</div></div><div class="a" style="left:1653.19px;top:1512.00px;width:236.17px;height:46.23px;overflow:hidden;"><div class="t" style="top:9.33px;font-size:31.35px;line-height:35.02px;color:#000;left:6.00px;transform-origin:0 0;transform:scaleX(0.9282);">TANGIBLE</div></div><div class="a" style="left:1889.36px;top:1512.00px;width:236.17px;height:46.23px;overflow:hidden;"><div class="t" style="top:9.33px;font-size:31.35px;line-height:35.02px;color:#000;left:6.50px;transform-origin:0 0;transform:scaleX(0.9059);">CAR</div></div><div class="a" style="left:2125.53px;top:1512.00px;width:236.17px;height:46.23px;overflow:hidden;"><div class="t" style="top:9.33px;font-size:31.35px;line-height:35.02px;color:#000;left:6.50px;transform-origin:0 0;transform:scaleX(0.9186);">PROD</div></div><div class="a" style="left:2361.70px;top:1512.00px;width:236.17px;height:46.23px;overflow:hidden;"><div class="t" style="top:9.33px;font-size:31.35px;line-height:35.02px;color:#000;left:-1381.91px;width:3000px;text-align:center;transform-origin:50% 0;transform:scaleX(0.8548);">FALSE</div></div><div class="a" style="left:2597.87px;top:1512.00px;width:236.17px;height:46.23px;overflow:hidden;"><div class="t" style="top:7.68px;font-size:33.17px;line-height:37.05px;color:#000;left:-2770.83px;width:3000px;text-align:right;transform-origin:100% 0;transform:scaleX(0.9768);">6/1/2018</div></div><div class="a" style="left:0.00px;top:1559.26px;width:236.17px;height:46.23px;overflow:hidden;"><div class="t" style="top:7.68px;font-size:33.17px;line-height:37.05px;color:#000;left:-2772.03px;width:3000px;text-align:right;transform-origin:100% 0;transform:scaleX(0.9346);">25</div></div><div class="a" style="left:236.17px;top:1559.26px;width:236.17px;height:46.23px;overflow:hidden;"><div class="t" style="top:7.20px;font-size:33.71px;line-height:37.65px;color:#000;left:4.60px;transform-origin:0 0;transform:scaleX(0.9850);">Salvage Value</div></div><div class="a" style="left:472.34px;top:1559.26px;width:236.17px;height:46.23px;overflow:hidden;"><div class="t" style="top:7.68px;font-size:33.17px;line-height:37.05px;color:#000;left:-2770.53px;width:3000px;text-align:right;transform-origin:100% 0;transform:scaleX(0.9346);">0.00</div></div><div class="a" style="left:708.51px;top:1559.26px;width:236.17px;height:46.23px;overflow:hidden;"><div class="t" style="top:7.68px;font-size:33.17px;line-height:37.05px;color:#000;left:-2770.53px;width:3000px;text-align:right;transform-origin:100% 0;transform:scaleX(0.9346);">0.00</div></div><div class="a" style="left:944.68px;top:1559.26px;width:236.17px;height:46.23px;overflow:hidden;"><div class="t" style="top:7.68px;font-size:33.17px;line-height:37.05px;color:#000;left:-2770.83px;width:3000px;text-align:right;transform-origin:100% 0;transform:scaleX(0.9346);">0.00</div></div><div class="a" style="left:1180.85px;top:1559.26px;width:236.17px;height:46.23px;overflow:hidden;"><div class="t" style="top:8.17px;font-size:32.64px;line-height:36.45px;color:#000;left:7.00px;transform-origin:0 0;transform:scaleX(0.9346);">FA000030</div></div><div class="a" style="left:1417.02px;top:1559.26px;width:236.17px;height:46.23px;overflow:hidden;"><div class="t" style="top:6.91px;font-size:34.03px;line-height:38.01px;color:#000;left:6.70px;transform-origin:0 0;transform:scaleX(0.9346);">VW Transporter</div></div><div class="a" style="left:1653.19px;top:1559.26px;width:236.17px;height:46.23px;overflow:hidden;"><div class="t" style="top:9.33px;font-size:31.35px;line-height:35.02px;color:#000;left:6.00px;transform-origin:0 0;transform:scaleX(0.9282);">TANGIBLE</div></div><div class="a" style="left:1889.36px;top:1559.26px;width:236.17px;height:46.23px;overflow:hidden;"><div class="t" style="top:9.33px;font-size:31.35px;line-height:35.02px;color:#000;left:6.50px;transform-origin:0 0;transform:scaleX(0.9059);">CAR</div></div><div class="a" style="left:2125.53px;top:1559.26px;width:236.17px;height:46.23px;overflow:hidden;"><div class="t" style="top:9.33px;font-size:31.35px;line-height:35.02px;color:#000;left:6.50px;transform-origin:0 0;transform:scaleX(0.9186);">PROD</div></div><div class="a" style="left:2361.70px;top:1559.26px;width:236.17px;height:46.23px;overflow:hidden;"><div class="t" style="top:9.33px;font-size:31.35px;line-height:35.02px;color:#000;left:-1381.91px;width:3000px;text-align:center;transform-origin:50% 0;transform:scaleX(0.8548);">FALSE</div></div><div class="a" style="left:2597.87px;top:1559.26px;width:236.17px;height:46.23px;overflow:hidden;"><div class="t" style="top:7.68px;font-size:33.17px;line-height:37.05px;color:#000;left:-2770.83px;width:3000px;text-align:right;transform-origin:100% 0;transform:scaleX(0.9768);">6/1/2018</div></div><div class="a" style="left:0.00px;top:1606.51px;width:236.17px;height:46.23px;overflow:hidden;"><div class="t" style="top:7.68px;font-size:33.17px;line-height:37.05px;color:#000;left:-2772.03px;width:3000px;text-align:right;transform-origin:100% 0;transform:scaleX(0.9346);">15</div></div><div class="a" style="left:236.17px;top:1606.51px;width:236.17px;height:46.23px;overflow:hidden;"><div class="t" style="top:7.20px;font-size:33.71px;line-height:37.65px;color:#000;left:4.60px;transform-origin:0 0;transform:scaleX(0.9850);">Acquisition Cost</div></div><div class="a" style="left:472.34px;top:1606.51px;width:236.17px;height:46.23px;overflow:hidden;"><div class="t" style="top:7.68px;font-size:33.17px;line-height:37.05px;color:#000;left:-2770.53px;width:3000px;text-align:right;transform-origin:100% 0;transform:scaleX(0.9346);">19,171.83</div></div><div class="a" style="left:708.51px;top:1606.51px;width:236.17px;height:46.23px;overflow:hidden;"><div class="t" style="top:7.68px;font-size:33.17px;line-height:37.05px;color:#000;left:-2770.53px;width:3000px;text-align:right;transform-origin:100% 0;transform:scaleX(0.9346);">19,171.83</div></div><div class="a" style="left:944.68px;top:1606.51px;width:236.17px;height:46.23px;overflow:hidden;"><div class="t" style="top:7.68px;font-size:33.17px;line-height:37.05px;color:#000;left:-2770.83px;width:3000px;text-align:right;transform-origin:100% 0;transform:scaleX(0.9346);">0.00</div></div><div class="a" style="left:1180.85px;top:1606.51px;width:236.17px;height:46.23px;overflow:hidden;"><div class="t" style="top:8.17px;font-size:32.64px;line-height:36.45px;color:#000;left:7.00px;transform-origin:0 0;transform:scaleX(0.9346);">FA000050</div></div><div class="a" style="left:1417.02px;top:1606.51px;width:236.17px;height:46.23px;overflow:hidden;"><div class="t" style="top:6.91px;font-size:34.03px;line-height:38.01px;color:#000;left:6.70px;transform-origin:0 0;transform:scaleX(0.9346);">Conveyor Belt</div></div><div class="a" style="left:1653.19px;top:1606.51px;width:236.17px;height:46.23px;overflow:hidden;"><div class="t" style="top:9.33px;font-size:31.35px;line-height:35.02px;color:#000;left:6.00px;transform-origin:0 0;transform:scaleX(0.9282);">TANGIBLE</div></div><div class="a" style="left:1889.36px;top:1606.51px;width:236.17px;height:46.23px;overflow:hidden;"><div class="t" style="top:9.33px;font-size:31.35px;line-height:35.02px;color:#000;left:6.50px;transform-origin:0 0;transform:scaleX(0.9282);">MACHINERY</div></div><div class="a" style="left:2125.53px;top:1606.51px;width:236.17px;height:46.23px;overflow:hidden;"><div class="t" style="top:9.33px;font-size:31.35px;line-height:35.02px;color:#000;left:6.50px;transform-origin:0 0;transform:scaleX(0.9282);">BUILD-2</div></div><div class="a" style="left:2361.70px;top:1606.51px;width:236.17px;height:46.23px;overflow:hidden;"><div class="t" style="top:9.33px;font-size:31.35px;line-height:35.02px;color:#000;left:-1381.91px;width:3000px;text-align:center;transform-origin:50% 0;transform:scaleX(0.8548);">FALSE</div></div><div class="a" style="left:2597.87px;top:1606.51px;width:236.17px;height:46.23px;overflow:hidden;"><div class="t" style="top:7.68px;font-size:33.17px;line-height:37.05px;color:#000;left:-2770.83px;width:3000px;text-align:right;transform-origin:100% 0;transform:scaleX(0.9768);">1/1/2018</div></div><div class="a" style="left:195.67px;top:6px;width:36px;height:36.5px;background:#fff;border:1.3px solid #B5B5B5;border-radius:3px;box-sizing:border-box"></div><svg class="a" style="left:195.67px;top:6px" width="36" height="36.5" viewBox="0 0 36 36.5" fill="none"><path d="M10.5 15 L18 22 L25.5 15" stroke="#6E6E6E" stroke-width="1.4"/></svg><div class="a" style="left:431.84px;top:6px;width:36px;height:36.5px;background:#fff;border:1.3px solid #B5B5B5;border-radius:3px;box-sizing:border-box"></div><svg class="a" style="left:431.84px;top:6px" width="36" height="36.5" viewBox="0 0 36 36.5" fill="none"><path d="M10.5 15 L18 22 L25.5 15" stroke="#6E6E6E" stroke-width="1.4"/></svg><div class="a" style="left:668.01px;top:6px;width:36px;height:36.5px;background:#fff;border:1.3px solid #B5B5B5;border-radius:3px;box-sizing:border-box"></div><svg class="a" style="left:668.01px;top:6px" width="36" height="36.5" viewBox="0 0 36 36.5" fill="none"><path d="M10.5 15 L18 22 L25.5 15" stroke="#6E6E6E" stroke-width="1.4"/></svg><div class="a" style="left:904.18px;top:6px;width:36px;height:36.5px;background:#fff;border:1.3px solid #B5B5B5;border-radius:3px;box-sizing:border-box"></div><svg class="a" style="left:904.18px;top:6px" width="36" height="36.5" viewBox="0 0 36 36.5" fill="none"><path d="M10.5 15 L18 22 L25.5 15" stroke="#6E6E6E" stroke-width="1.4"/></svg><div class="a" style="left:1140.35px;top:6px;width:36px;height:36.5px;background:#fff;border:1.3px solid #B5B5B5;border-radius:3px;box-sizing:border-box"></div><svg class="a" style="left:1140.35px;top:6px" width="36" height="36.5" viewBox="0 0 36 36.5" fill="none"><path d="M10.5 15 L18 22 L25.5 15" stroke="#6E6E6E" stroke-width="1.4"/></svg><div class="a" style="left:1376.52px;top:6px;width:36px;height:36.5px;background:#fff;border:1.3px solid #B5B5B5;border-radius:3px;box-sizing:border-box"></div><svg class="a" style="left:1376.52px;top:6px" width="36" height="36.5" viewBox="0 0 36 36.5" fill="none"><path d="M10.5 15 L18 22 L25.5 15" stroke="#6E6E6E" stroke-width="1.4"/></svg><div class="a" style="left:1612.69px;top:6px;width:36px;height:36.5px;background:#fff;border:1.3px solid #B5B5B5;border-radius:3px;box-sizing:border-box"></div><svg class="a" style="left:1612.69px;top:6px" width="36" height="36.5" viewBox="0 0 36 36.5" fill="none"><path d="M10.5 15 L18 22 L25.5 15" stroke="#6E6E6E" stroke-width="1.4"/></svg><div class="a" style="left:1848.86px;top:6px;width:36px;height:36.5px;background:#fff;border:1.3px solid #B5B5B5;border-radius:3px;box-sizing:border-box"></div><svg class="a" style="left:1848.86px;top:6px" width="36" height="36.5" viewBox="0 0 36 36.5" fill="none"><path d="M10.5 15 L18 22 L25.5 15" stroke="#6E6E6E" stroke-width="1.4"/></svg><div class="a" style="left:2085.03px;top:6px;width:36px;height:36.5px;background:#fff;border:1.3px solid #B5B5B5;border-radius:3px;box-sizing:border-box"></div><svg class="a" style="left:2085.03px;top:6px" width="36" height="36.5" viewBox="0 0 36 36.5" fill="none"><path d="M10.5 15 L18 22 L25.5 15" stroke="#6E6E6E" stroke-width="1.4"/></svg><div class="a" style="left:2321.20px;top:6px;width:36px;height:36.5px;background:#fff;border:1.3px solid #B5B5B5;border-radius:3px;box-sizing:border-box"></div><svg class="a" style="left:2321.20px;top:6px" width="36" height="36.5" viewBox="0 0 36 36.5" fill="none"><path d="M10.5 15 L18 22 L25.5 15" stroke="#6E6E6E" stroke-width="1.4"/></svg><div class="a" style="left:2557.37px;top:6px;width:36px;height:36.5px;background:#fff;border:1.3px solid #B5B5B5;border-radius:3px;box-sizing:border-box"></div><svg class="a" style="left:2557.37px;top:6px" width="36" height="36.5" viewBox="0 0 36 36.5" fill="none"><path d="M10.5 15 L18 22 L25.5 15" stroke="#6E6E6E" stroke-width="1.4"/></svg><div class="a" style="left:2793.54px;top:6px;width:36px;height:36.5px;background:#fff;border:1.3px solid #B5B5B5;border-radius:3px;box-sizing:border-box"></div><svg class="a" style="left:2793.54px;top:6px" width="36" height="36.5" viewBox="0 0 36 36.5" fill="none"><path d="M10.5 15 L18 22 L25.5 15" stroke="#6E6E6E" stroke-width="1.4"/></svg></div><div class="a" style="left:82.00px;top:550.20px;width:241.00px;height:52.80px;background:transparent;border:4px solid #3C7D47;box-sizing:border-box;"></div><div class="a" style="left:315.50px;top:595.50px;width:12.00px;height:11.50px;background:#fff;"></div><div class="a" style="left:317.00px;top:597.00px;width:9.00px;height:8.60px;background:#3C7D47;"></div><div class="a" style="left:2890.00px;top:345.00px;width:28.70px;height:1720.00px;background:#E8E8E8;"></div><svg class="a" style="left:2890.00px;top:350.00px;" width="28.00" height="22.00" viewBox="0 0 28.00 22.00" fill="none"><path d="M4 18.8 L14 5 L24 18.8 Z" fill="#8A8A8A" stroke="#8A8A8A" stroke-width="1.8" stroke-linejoin="round"/></svg><div class="a" style="left:2896.00px;top:385.00px;width:15.00px;height:561.80px;background:#8A8A8A;border-radius:7.5px;"></div><svg class="a" style="left:2890.00px;top:2010.00px;" width="28.00" height="22.00" viewBox="0 0 28.00 22.00" fill="none"><path d="M4 3.8 L14 18 L24 3.8 Z" fill="#8A8A8A" stroke="#8A8A8A" stroke-width="1.8" stroke-linejoin="round"/></svg><div class="a" style="left:0.00px;top:2038.00px;width:2918.00px;height:27.00px;background:#E8E8E8;"></div><svg class="a" style="left:0.00px;top:2038.00px;" width="20.00" height="27.00" viewBox="0 0 20.00 27.00" fill="none"><path d="M13 3.6 L1 13.3 L13 23 Z" fill="#8A8A8A" stroke="#8A8A8A" stroke-width="1.8" stroke-linejoin="round"/></svg><div class="a" style="left:29.00px;top:2043.00px;width:563.80px;height:16.60px;background:#8A8A8A;border-radius:8.3px;"></div><svg class="a" style="left:2860.00px;top:2038.00px;" width="26.00" height="27.00" viewBox="0 0 26.00 27.00" fill="none"><path d="M7 3.6 L20 13.3 L7 23 Z" fill="#8A8A8A" stroke="#8A8A8A" stroke-width="1.8" stroke-linejoin="round"/></svg><div class="a" style="left:2917.30px;top:345.00px;width:1.70px;height:1795.00px;background:#E0E0E0;"></div><svg class="a" style="left:10.00px;top:2080.00px;" width="30.00" height="38.00" viewBox="0 0 30.00 38.00" fill="none"><path d="M22 8 L10 19.5 L22 31" stroke="#B5B5B5" stroke-width="2" fill="none"/></svg><svg class="a" style="left:85.00px;top:2080.00px;" width="30.00" height="38.00" viewBox="0 0 30.00 38.00" fill="none"><path d="M8 8 L20 19.5 L8 31" stroke="#B5B5B5" stroke-width="2" fill="none"/></svg><svg class="a" style="left:150.00px;top:2080.00px;" width="40.00" height="38.00" viewBox="0 0 40.00 38.00" fill="none"><path d="M5 9.5 L34 9.5 M5 19.5 L34 19.5 M5 29.5 L34 29.5" stroke="#424242" stroke-width="2.6"/></svg><div class="t" style="top:2082.65px;font-size:31.99px;line-height:35.74px;color:#424242;left:228.00px;transform-origin:0 0;transform:scaleX(0.9520);">Fixed Asset Analysis</div><div class="t" style="top:2082.36px;font-size:32.31px;line-height:36.09px;color:#424242;left:551.00px;transform-origin:0 0;transform:scaleX(0.9636);">Book Value</div><div class="t" style="top:2083.08px;font-size:31.52px;line-height:35.21px;color:#383838;left:748.50px;transform-origin:0 0;transform:scaleX(0.9840);-webkit-text-stroke:0.6px #383838;">FixedAssetData</div><div class="a" style="left:749.60px;top:2131.40px;width:219.90px;height:5.60px;background:#3B7649;"></div><svg class="a" style="left:1005.00px;top:2080.00px;" width="40.00" height="38.00" viewBox="0 0 40.00 38.00" fill="none"><path d="M19.2 6.5 L19.2 32 M6.5 19.2 L32 19.2" stroke="#424242" stroke-width="2.4"/></svg><div class="a" style="left:0.00px;top:2137.50px;width:3707.00px;height:2.50px;background:#E0E0E0;"></div><svg class="a" style="left:2957.00px;top:384.00px;overflow:visible" width="50.00" height="47.00" viewBox="170 165 1215 1115" fill="none"><defs><linearGradient id="g1cp" x1="0" y1="170" x2="0" y2="965" gradientUnits="userSpaceOnUse"><stop offset="0" stop-color="#72BDF7"/><stop offset="0.3" stop-color="#4C8FE0"/><stop offset="0.6" stop-color="#72B07A"/><stop offset="0.85" stop-color="#C8C545"/><stop offset="1" stop-color="#F2CC2E"/></linearGradient><linearGradient id="g2cp" x1="1300" y1="520" x2="900" y2="1270" gradientUnits="userSpaceOnUse"><stop offset="0" stop-color="#9A52E2"/><stop offset="0.5" stop-color="#DA6088"/><stop offset="1" stop-color="#F0AE60"/></linearGradient><linearGradient id="g3cp" x1="850" y1="200" x2="1100" y2="480" gradientUnits="userSpaceOnUse"><stop offset="0" stop-color="#2228B8"/><stop offset="1" stop-color="#4A85E8"/></linearGradient><linearGradient id="g4cp" x1="450" y1="1000" x2="720" y2="1250" gradientUnits="userSpaceOnUse"><stop offset="0" stop-color="#F2A864"/><stop offset="0.6" stop-color="#E6683F"/><stop offset="1" stop-color="#C8403A"/></linearGradient></defs><path d="M930 170 C990 170 1030 205 1060 300 L1085 390 C1105 455 1150 485 1210 490 L800 490 C770 490 750 510 735 545 L830 270 C860 195 890 170 930 170 Z" fill="url(#g3cp)"/><path d="M400 965 L810 965 L720 1205 C700 1250 675 1272 640 1272 C585 1272 545 1235 515 1135 C485 1030 460 975 400 965 Z" fill="url(#g4cp)"/><path d="M470 170 L940 170 C895 172 860 205 832 285 L650 880 C630 940 600 965 540 965 L290 965 C205 965 165 895 182 800 L290 335 C320 235 380 170 470 170 Z" fill="url(#g1cp)"/><path d="M1010 490 L1285 490 C1365 490 1400 575 1378 675 L1262 1125 C1235 1225 1170 1272 1090 1272 L660 1272 C705 1265 742 1230 770 1145 L930 625 C958 535 985 490 1010 490 Z" fill="url(#g2cp)"/></svg><div class="t" style="top:387.79px;font-size:36.70px;line-height:41.00px;color:#242424;font-weight:700;left:3026.00px;transform-origin:0 0;transform:scaleX(0.9426);">Copilot</div><svg class="a" style="left:3622.00px;top:390.00px;" width="40.00" height="40.00" viewBox="0 0 40.00 40.00" fill="none"><path d="M6 5.5 L34.5 34 M34.5 5.5 L6 34" stroke="#242424" stroke-width="2.6"/></svg><div class="a" style="left:3683.00px;top:478.00px;width:23.40px;height:1203.00px;background:#EFEFEF;border-radius:11px;"></div><div class="a" style="left:3687.00px;top:812.00px;width:16.00px;height:401.60px;background:#666666;border-radius:8px;"></div><div class="a" style="left:3705.50px;top:0.00px;width:1.50px;height:2140.00px;background:#E6E6E6;"></div><div class="a" style="left:3328.00px;top:477.70px;width:316.00px;height:95.00px;background:#D1E8D8;border-radius:18px;"></div><div class="t" style="top:505.98px;font-size:33.17px;line-height:37.05px;color:#242424;left:3354.00px;transform-origin:0 0;transform:scaleX(0.9455);">Show data insights</div><div class="a" style="left:2958.00px;top:596.00px;width:686.00px;height:624.80px;background:#fff;background:#fff;border-radius:20px;box-shadow:0 2px 5px rgba(0,0,0,0.20),0 0 1.5px rgba(0,0,0,0.32);"></div><div class="t" style="top:633.94px;font-size:28.36px;line-height:31.67px;color:#242424;left:2984.50px;transform-origin:0 0;transform:scaleX(0.9425);">I analyzed data in A1:O100, and here's what I found:</div><div class="t" style="top:685.38px;font-size:33.28px;line-height:37.17px;color:#242424;font-weight:700;left:2984.50px;transform-origin:0 0;transform:scaleX(0.9412);">'AtEndingDate' by 'AcquisitionDateField'</div><div class="t" style="top:738.53px;font-size:28.14px;line-height:31.43px;color:#242424;left:2985.50px;transform-origin:0 0;transform:scaleX(0.9434);">Sum of AtEndingDate (Thousands)</div><div class="a" style="left:2985.60px;top:803.70px;width:630.40px;height:316.90px;background:#fff;border:1.5px solid #E0E0E0;border-radius:3px;box-sizing:border-box;"></div><div class="a" style="left:3086.80px;top:834.00px;width:506.20px;height:2.00px;background:#E4E4E6;"></div><div class="t" style="top:824.68px;font-size:23.01px;line-height:25.70px;color:#616161;left:67.00px;width:3000px;text-align:right;transform-origin:100% 0;transform:scaleX(0.9346);">200.00</div><div class="a" style="left:3086.80px;top:887.80px;width:506.20px;height:2.00px;background:#E4E4E6;"></div><div class="t" style="top:878.48px;font-size:23.01px;line-height:25.70px;color:#616161;left:67.00px;width:3000px;text-align:right;transform-origin:100% 0;transform:scaleX(0.9346);">150.00</div><div class="a" style="left:3086.80px;top:941.90px;width:506.20px;height:2.00px;background:#E4E4E6;"></div><div class="t" style="top:932.58px;font-size:23.01px;line-height:25.70px;color:#616161;left:67.00px;width:3000px;text-align:right;transform-origin:100% 0;transform:scaleX(0.9346);">100.00</div><div class="a" style="left:3086.80px;top:995.60px;width:506.20px;height:2.00px;background:#E4E4E6;"></div><div class="t" style="top:986.28px;font-size:23.01px;line-height:25.70px;color:#616161;left:67.00px;width:3000px;text-align:right;transform-origin:100% 0;transform:scaleX(0.9346);">50.00</div><div class="a" style="left:3086.80px;top:1050.00px;width:506.20px;height:2.00px;background:#E4E4E6;"></div><div class="t" style="top:1040.68px;font-size:23.01px;line-height:25.70px;color:#616161;left:67.00px;width:3000px;text-align:right;transform-origin:100% 0;transform:scaleX(0.9346);">0.00</div><svg class="a" style="left:3080.00px;top:840.00px;" width="520.00" height="205.00" viewBox="0 0 520.00 205.00" fill="none"><path d="M6.8 50.5 L90.2 155.0 L174.0 196.5 L260.0 192.2 L343.1 19.1 L427.9 140.1 L511.3 127.3" stroke="#D2D3D7" stroke-width="3.2" fill="none" stroke-linejoin="miter"/></svg><div class="t" style="top:1072.78px;font-size:26.21px;line-height:29.28px;color:#616161;left:3229.00px;transform-origin:0 0;transform:scaleX(0.9422);">AcquisitionDateField</div><div class="a" style="left:2985.00px;top:1136.70px;width:412.40px;height:43.90px;background:#EBEBEB;border-radius:8px;"></div><div class="t" style="top:1145.12px;font-size:24.18px;line-height:27.01px;color:#616161;left:2999.50px;transform-origin:0 0;transform:scaleX(0.9356);">AI-generated content may be incorrect</div><svg class="a" style="left:3500.00px;top:1130.00px;" width="120.00" height="60.00" viewBox="0 0 2527 1264" fill="none"><path d="M720 265 C770 265 800 340 780 420 L745 520 L820 520 C900 520 930 570 905 650 L840 860 C820 905 780 920 740 905 L470 820 C430 805 415 780 405 740 L390 680 C380 640 400 610 440 590 L510 555 C560 520 600 470 630 390 L670 300 C685 275 700 265 720 265 Z" stroke="#242424" stroke-width="42" fill="none" stroke-linejoin="round"/><path d="M1970 310 C2060 310 2110 400 2130 500 L2140 560 C2150 620 2110 660 2050 660 L1995 660 L2000 790 C2005 880 1965 910 1930 905 C1905 900 1890 870 1875 830 C1840 730 1790 640 1700 590 L1670 570 C1635 550 1630 510 1640 470 C1650 410 1680 385 1720 375 L1900 325 C1930 315 1950 310 1970 310 Z" stroke="#242424" stroke-width="42" fill="none" stroke-linejoin="round"/></svg><div class="a" style="left:2958.00px;top:1243.00px;width:686.00px;height:418.00px;background:#fff;background:#fff;border-radius:20px;box-shadow:0 2px 5px rgba(0,0,0,0.20),0 0 1.5px rgba(0,0,0,0.32);"></div><div class="t" style="top:1286.79px;font-size:33.38px;line-height:37.29px;color:#242424;left:2985.00px;transform-origin:0 0;transform:scaleX(0.9366);">The data insights show the sum of</div><div class="t" style="top:1331.79px;font-size:33.38px;line-height:37.29px;color:#242424;left:2983.80px;transform-origin:0 0;transform:scaleX(0.9416);">'AtEndingDate' by 'AcquisitionDateField'. For</div><div class="t" style="top:1376.79px;font-size:33.38px;line-height:37.29px;color:#242424;left:2984.80px;transform-origin:0 0;transform:scaleX(0.9391);">example, on 1/1/2018, the sum is</div><div class="t" style="top:1421.79px;font-size:33.38px;line-height:37.29px;color:#242424;left:2983.80px;transform-origin:0 0;transform:scaleX(0.9305);">148,074.33, and on 2/1/2018, the sum is</div><div class="t" style="top:1466.79px;font-size:33.38px;line-height:37.29px;color:#242424;left:2984.80px;transform-origin:0 0;transform:scaleX(0.9232);">49,404.58. See the chart above for more</div><div class="t" style="top:1511.79px;font-size:33.38px;line-height:37.29px;color:#242424;left:2984.80px;transform-origin:0 0;transform:scaleX(0.9386);">details.</div><div class="a" style="left:2985.50px;top:1576.00px;width:411.50px;height:44.00px;background:#EBEBEB;border-radius:8px;"></div><div class="t" style="top:1584.62px;font-size:24.18px;line-height:27.01px;color:#616161;left:2998.50px;transform-origin:0 0;transform:scaleX(0.9365);">AI-generated content may be incorrect</div><svg class="a" style="left:3500.00px;top:1570.80px;" width="120.00" height="60.00" viewBox="0 0 2527 1264" fill="none"><path d="M720 265 C770 265 800 340 780 420 L745 520 L820 520 C900 520 930 570 905 650 L840 860 C820 905 780 920 740 905 L470 820 C430 805 415 780 405 740 L390 680 C380 640 400 610 440 590 L510 555 C560 520 600 470 630 390 L670 300 C685 275 700 265 720 265 Z" stroke="#242424" stroke-width="42" fill="none" stroke-linejoin="round"/><path d="M1970 310 C2060 310 2110 400 2130 500 L2140 560 C2150 620 2110 660 2050 660 L1995 660 L2000 790 C2005 880 1965 910 1930 905 C1905 900 1890 870 1875 830 C1840 730 1790 640 1700 590 L1670 570 C1635 550 1630 510 1640 470 C1650 410 1680 385 1720 375 L1900 325 C1930 315 1950 310 1970 310 Z" stroke="#242424" stroke-width="42" fill="none" stroke-linejoin="round"/></svg><div class="a" style="left:2983.80px;top:1691.70px;width:346.20px;height:65.10px;background:transparent;border:2px solid #A9D3B5;border-radius:20px;box-sizing:border-box;"></div><div class="t" style="top:1711.63px;font-size:28.03px;line-height:31.31px;color:#242424;left:3003.20px;transform-origin:0 0;transform:scaleX(0.9383);">Can I see another insight?</div><div class="a" style="left:3349.70px;top:1691.70px;width:308.70px;height:65.10px;background:transparent;border:2px solid #A9D3B5;border-radius:20px;box-sizing:border-box;"></div><div class="t" style="top:1710.37px;font-size:29.43px;line-height:32.87px;color:#242424;left:3369.90px;transform-origin:0 0;transform:scaleX(0.9395);">Add all insights to grid</div><div class="a" style="left:3587.60px;top:1777.00px;width:70.80px;height:60.00px;background:transparent;border:2px solid #A9D3B5;border-radius:20px;box-sizing:border-box;"></div><svg class="a" style="left:3605.00px;top:1790.00px;" width="37.00" height="36.00" viewBox="0 0 37.00 36.00" fill="none"><path d="M28 8 L28 15 L21 15" stroke="#242424" stroke-width="2.2" fill="none" stroke-linejoin="round"/><path d="M27.5 14.5 C25.5 10 21.5 7.5 17 7.5 C10.5 7.5 6 12.5 6 18.5 C6 24.5 10.5 29 17 29 C22.5 29 27 25 28 20" stroke="#242424" stroke-width="2.2" fill="none"/></svg><div class="a" style="left:2958.80px;top:1848.00px;width:708.20px;height:241.00px;background:#fff;border:2px solid #C8C8C8;border-radius:24px;box-sizing:border-box;"></div><div class="t" style="top:1879.90px;font-size:33.92px;line-height:37.89px;color:#707070;left:2978.40px;transform-origin:0 0;transform:scaleX(0.9378);">Ask a question, or tell me what you'd like to do</div><div class="t" style="top:1924.30px;font-size:33.92px;line-height:37.89px;color:#707070;left:2979.40px;transform-origin:0 0;transform:scaleX(0.9266);">with A1:O100</div><svg class="a" style="left:3410.00px;top:2005.00px;" width="240.00" height="65.00" viewBox="0 0 2527 684" fill="none"><path d="M335 160 C350 165 360 190 370 215 C385 250 420 270 455 280 C465 285 465 300 455 305 C420 315 385 335 370 370 C360 395 350 410 335 412 C320 410 310 395 300 370 C285 335 250 315 215 305 C205 300 205 285 215 280 C250 270 285 250 300 215 C310 190 320 165 335 160 Z" stroke="#3A3A3A" stroke-width="36" fill="none" stroke-linejoin="round"/><path d="M548 158 L548 230 M512 193 L584 193 M240 462 L240 534 M204 497 L276 497" stroke="#3A3A3A" stroke-width="30" stroke-linecap="round"/><path d="M505 280 L528 280 C563 280 580 302 580 337 L580 480 C580 515 555 535 520 535 L385 535 C350 535 328 515 328 480 L328 452" stroke="#3A3A3A" stroke-width="36" fill="none" stroke-linecap="round"/><path d="M408 382 L520 382 M408 440 L482 440" stroke="#3A3A3A" stroke-width="30" stroke-linecap="round"/><path d="M790 118 L790 585" stroke="#C8C8C8" stroke-width="20"/><path d="M1268 158 C1230 158 1204 188 1204 228 L1204 340 C1204 385 1230 410 1268 410 C1306 410 1334 385 1334 340 L1334 228 C1334 188 1306 158 1268 158 Z" stroke="#3A3A3A" stroke-width="36" fill="none"/><path d="M1142 338 C1142 420 1195 474 1268 474 C1341 474 1394 420 1394 338 M1268 474 L1268 538" stroke="#3A3A3A" stroke-width="36" fill="none" stroke-linecap="round"/><path d="M1942 172 L2300 352 L1942 530 L1990 352 Z M1990 352 L2160 352" stroke="#BDBDBD" stroke-width="24" fill="none" stroke-linejoin="round" stroke-linecap="round"/></svg></body></html>
